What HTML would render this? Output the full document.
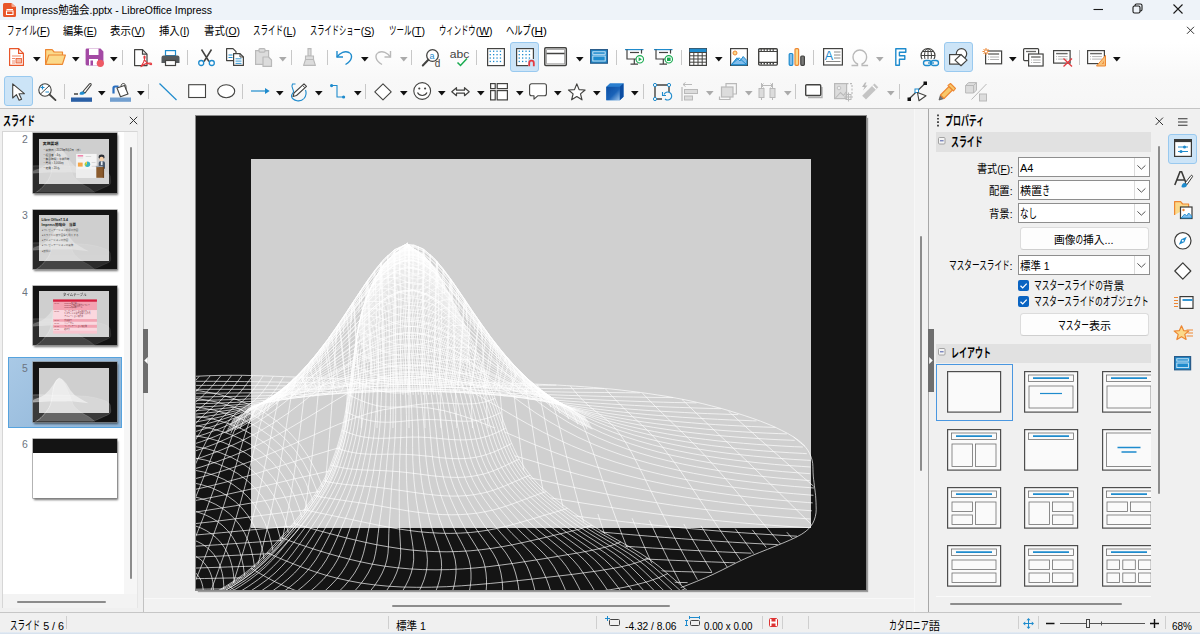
<!DOCTYPE html>
<html lang="ja"><head><meta charset="utf-8"><title>Impress勉強会.pptx - LibreOffice Impress</title>
<style>
html,body{margin:0;padding:0}html{overflow:hidden;width:1200px;height:634px}
body{width:1200px;height:634px;overflow:hidden;position:relative;background:#f0f0f0;font-family:"Liberation Sans","Noto Sans CJK JP",sans-serif;font-size:12px;color:#000}
.a{position:absolute}
.t{position:absolute;white-space:nowrap;transform-origin:0 50%;display:block}
svg{position:absolute;overflow:visible}
.sep{position:absolute;width:1px;background:#c8c8c8}
u{text-decoration:underline;text-underline-offset:1px}
.k{display:inline-block;font-size:1.09em;transform:scaleX(.645);transform-origin:0 50%}

</style></head>
<body>
<div class="a" style="left:0;top:0;width:1200px;height:20px;background:#eef3f9"></div>
<svg style="left:3px;top:3px" width="13" height="14" viewBox="0 0 13 14"><path d="M1.5 0h7L13 4v8.5A1.5 1.5 0 0 1 11.500 14h-10A1.500 1.500 0 0 1 0 12.500v-11A1.500 1.500 0 0 1 1.500 0z" fill="#e8562a"/><path d="M8.500 0 13 4H9.500a1 1 0 0 1-1-1z" fill="#f6a98f"/><path d="M3.500 6.500h6.500M3.500 8v3.500h6.500V8z" fill="none" stroke="#fff" stroke-width="1.100"/></svg>
<span id="t0" class="t" style="left:20.5px;top:2.2px;height:17px;line-height:17px;font-size:11px;color:#000;transform:scaleX(0.9507);">Impress勉強会.pptx - LibreOffice Impress</span>
<svg style="left:1090px;top:0" width="110" height="20" viewBox="0 0 110 20"><g fill="none" stroke="#1a1a1a" stroke-width="1.100"><path d="M3.500 9.500h9.500"/><rect x="43" y="6" width="7" height="7" rx="1.500"/><path d="M45 6V5.500A1.500 1.500 0 0 1 46.500 4H50.500A1.500 1.500 0 0 1 52 5.500V9.500A1.500 1.500 0 0 1 50.500 11H50"/><path d="M83.500 4.500l9 9M92.500 4.500l-9 9"/></g></svg>
<div class="a" style="left:0;top:20px;width:1200px;height:88px;background:linear-gradient(#ffffff 0,#ffffff 22px,#f8f8f8 60px,#f6f6f6 88px)"></div>
<div class="a" style="left:0;top:108px;width:1200px;height:1px;background:#c4c4c4"></div>
<span id="t1" class="t" style="left:6.5px;top:23.2px;height:17px;line-height:17px;font-size:11px;color:#000;transform:scaleX(0.9556);"><span class="k" style="margin-right:-17.03px">ファイル</span>(<u>F</u>)</span>
<span id="t2" class="t" style="left:62.5px;top:23.2px;height:17px;line-height:17px;font-size:11px;color:#000;transform:scaleX(0.9267);">編集(<u>E</u>)</span>
<span id="t3" class="t" style="left:110.0px;top:23.2px;height:17px;line-height:17px;font-size:11px;color:#000;transform:scaleX(0.9540);">表示(<u>V</u>)</span>
<span id="t4" class="t" style="left:159.0px;top:23.2px;height:17px;line-height:17px;font-size:11px;color:#000;transform:scaleX(0.9412);">挿入(<u>I</u>)</span>
<span id="t5" class="t" style="left:203.5px;top:23.2px;height:17px;line-height:17px;font-size:11px;color:#000;transform:scaleX(0.9497);">書式(<u>O</u>)</span>
<span id="t6" class="t" style="left:252.5px;top:23.2px;height:17px;line-height:17px;font-size:11px;color:#000;transform:scaleX(0.9687);"><span class="k" style="margin-right:-17.03px">スライド</span>(<u>L</u>)</span>
<span id="t7" class="t" style="left:309.5px;top:23.2px;height:17px;line-height:17px;font-size:11px;color:#000;transform:scaleX(0.9378);"><span class="k" style="margin-right:-29.80px">スライドショー</span>(<u>S</u>)</span>
<span id="t8" class="t" style="left:388.5px;top:23.2px;height:17px;line-height:17px;font-size:11px;color:#000;transform:scaleX(0.9660);"><span class="k" style="margin-right:-12.77px">ツール</span>(<u>T</u>)</span>
<span id="t9" class="t" style="left:438.5px;top:23.2px;height:17px;line-height:17px;font-size:11px;color:#000;transform:scaleX(0.9487);"><span class="k" style="margin-right:-21.28px">ウィンドウ</span>(<u>W</u>)</span>
<span id="t10" class="t" style="left:505.5px;top:23.2px;height:17px;line-height:17px;font-size:11px;color:#000;transform:scaleX(1.0654);"><span class="k" style="margin-right:-12.77px">ヘルプ</span>(<u>H</u>)</span>
<svg style="left:1186px;top:26px" width="9" height="9" viewBox="0 0 9 9"><path d="M1 .8l7 7M8 .8l-7 7" stroke="#333" stroke-width="1" fill="none"/></svg>
<div class="a" style="left:0;top:612px;width:1200px;height:1px;background:#c6c6c6"></div>
<div class="a" style="left:0;top:613px;width:1200px;height:19px;background:#f0f0f0"></div>
<div class="a" style="left:0;top:631.500px;width:1200px;height:2.500px;background:linear-gradient(#e6edf5,#d3dfec)"></div>
<div class="sep" style="left:66px;top:616px;height:13px;background:#cfcfcf"></div>
<div class="sep" style="left:387.5px;top:616px;height:13px;background:#cfcfcf"></div>
<div class="sep" style="left:596px;top:616px;height:13px;background:#cfcfcf"></div>
<div class="sep" style="left:762px;top:616px;height:13px;background:#cfcfcf"></div>
<div class="sep" style="left:782px;top:616px;height:13px;background:#cfcfcf"></div>
<div class="sep" style="left:808px;top:616px;height:13px;background:#cfcfcf"></div>
<div class="sep" style="left:1017.5px;top:616px;height:13px;background:#cfcfcf"></div>
<div class="sep" style="left:1037.5px;top:616px;height:13px;background:#cfcfcf"></div>
<div class="sep" style="left:1164.5px;top:616px;height:13px;background:#cfcfcf"></div>
<span id="t11" class="t" style="left:9.5px;top:617.5px;height:17px;line-height:17px;font-size:11px;color:#000;transform:scaleX(0.9749);"><span class="k" style="margin-right:-17.03px">スライド</span> 5 / 6</span>
<span id="t12" class="t" style="left:396px;top:617.5px;height:17px;line-height:17px;font-size:11px;color:#000;transform:scaleX(0.9619);">標準 1</span>
<span id="t13" class="t" style="left:624.5px;top:617.5px;height:17px;line-height:17px;font-size:11px;color:#000;transform:scaleX(0.9253);">-4.32 / 8.06</span>
<span id="t14" class="t" style="left:703.5px;top:617.5px;height:17px;line-height:17px;font-size:11px;color:#000;transform:scaleX(0.8909);">0.00 x 0.00</span>
<span id="t15" class="t" style="left:888.5px;top:617.5px;height:17px;line-height:17px;font-size:11px;color:#000;transform:scaleX(1.0271);"><span class="k" style="margin-right:-21.28px">カタロニア</span>語</span>
<span id="t16" class="t" style="left:1172px;top:617.5px;height:17px;line-height:17px;font-size:11px;color:#000;transform:scaleX(0.9078);">68%</span>
<svg style="left:604px;top:616px" width="17" height="11" viewBox="0 0 17 11"><path d="M3.500 0v5M1 2.500h5" stroke="#1e8bcd" stroke-width="1" fill="none"/><rect x="5.500" y="3.500" width="10" height="6" rx="1" fill="none" stroke="#444" stroke-width="1"/></svg>
<svg style="left:685px;top:616px" width="16" height="11" viewBox="0 0 16 11"><path d="M4.500 1.500h10M4.500 0v3M14.500 0v3M1.500 4v6M0 4.500h3M0 9.500h3" stroke="#1e8bcd" stroke-width="1" fill="none"/><rect x="5.500" y="4.500" width="9" height="5" rx="1" fill="none" stroke="#444" stroke-width="1"/></svg>
<svg style="left:769px;top:618px" width="9" height="9" viewBox="0 0 9 9"><path d="M1.500.5h6l1 1v6a1 1 0 0 1-1 1h-6a1 1 0 0 1-1-1v-6a1 1 0 0 1 1-1z" fill="#fff" stroke="#d33" stroke-width="1"/><path d="M2.500 1h4v2.500h-4zM2.500 5.500h4V8h-4z" fill="#d33"/></svg>
<svg style="left:1023px;top:618px" width="11" height="11" viewBox="0 0 11 11"><path d="M5.500 1v9M1 5.500h9" stroke="#1e8bcd" stroke-width="1" fill="none"/><path d="M5.500 0l2 2.200h-4zM5.500 11l2-2.200h-4zM0 5.500l2.200-2v4zM11 5.500l-2.200-2v4z" fill="#1e8bcd"/></svg>
<svg style="left:1046px;top:618px" width="114" height="12" viewBox="0 0 114 12"><path d="M0 5.500h8.500M104 5.500h9M108.500 1v9" stroke="#111" stroke-width="1.400" fill="none"/><path d="M14 5.500h85" stroke="#555" stroke-width="1"/><path d="M55.500 3.500v4" stroke="#555" stroke-width="1"/><rect x="40.500" y="1.500" width="3" height="8" fill="#f0f0f0" stroke="#444" stroke-width="1"/></svg><svg style="left:9px;top:48px" width="24" height="24" viewBox="0 0 24 24"><path d="M.6.6h9l4.800 4.800v12H.6z" fill="#fff" stroke="#e8562a" stroke-width="1.200" stroke-linejoin="round"/><path d="M9.600.6v4.800h4.800" fill="none" stroke="#e8562a" stroke-width="1.200"/><path d="M3 8h9M3 10.500h3M3 13h3M3 15h3" stroke="#f08a6a" stroke-width="1"/><rect x="7" y="10.500" width="5.500" height="4.500" fill="#f7b9a4" stroke="#e8562a" stroke-width=".8"/></svg>
<svg style="left:33.2px;top:56.8px" width="8" height="5" viewBox="0 0 8 5"><path d="M0 0h7.600L3.800 4.500z" fill="#111"/></svg>
<svg style="left:45px;top:49px" width="24" height="24" viewBox="0 0 24 24"><path d="M.6 15.400V.6h6.500l2 2.400h8.400v3" fill="#fbd98a" stroke="#ed8733" stroke-width="1.200" stroke-linejoin="round"/><path d="M.6 15.400l3.200-9.400h16.600l-3 9.400z" fill="#fbd98a" stroke="#ed8733" stroke-width="1.200" stroke-linejoin="round"/></svg>
<svg style="left:71.7px;top:56.8px" width="8" height="5" viewBox="0 0 8 5"><path d="M0 0h7.600L3.800 4.500z" fill="#111"/></svg>
<svg style="left:85px;top:48px" width="24" height="24" viewBox="0 0 24 24"><path d="M2 .6h13.500l2.900 2.900V16a1.400 1.400 0 0 1-1.400 1.400H2A1.400 1.400 0 0 1 .6 16V2A1.400 1.400 0 0 1 2 .6z" fill="#a349a4" /><rect x="4" y=".6" width="9.500" height="6.400" fill="#fff"/><rect x="4" y="11" width="9" height="6.400" fill="#fff"/><rect x="5.500" y="12.500" width="2.500" height="4.900" fill="#a349a4"/><circle cx="15.300" cy="15.300" r="3.600" fill="#ee5a64"/></svg>
<svg style="left:110.2px;top:56.8px" width="8" height="5" viewBox="0 0 8 5"><path d="M0 0h7.600L3.800 4.500z" fill="#111"/></svg>
<div class="sep" style="left:122.0px;top:50px;height:15px"></div>
<svg style="left:134px;top:49px" width="24" height="24" viewBox="0 0 24 24"><path d="M.6.6h7.900l4.500 4.500v11.500H.6z" fill="#fff" stroke="#434341" stroke-width="1.200" stroke-linejoin="round"/><path d="M8.500.6v4.500H13" fill="none" stroke="#434341" stroke-width="1.200"/><path d="M7 17.500c1.500-2 3.500-5.500 4-9 .3-1.800-1.300-1.800-1 0 .5 3.500 3.500 6 6.500 7 1.500.4 1.500-1.300-.3-1.300-3 0-7 1.500-9.200 3.300z" fill="none" stroke="#e5393f" stroke-width="1.200" stroke-linejoin="round"/></svg>
<svg style="left:161px;top:50px" width="24" height="24" viewBox="0 0 24 24"><rect x="4.500" y=".6" width="10" height="5" fill="#fff" stroke="#1e8bcd" stroke-width="1.200"/><path d="M2.500 5.500h14A2 2 0 0 1 18.500 7.500v5.500h-3.500v-3h-11v3H.5V7.500a2 2 0 0 1 2-2z" fill="#55595c"/><rect x="4.500" y="10.500" width="10" height="5" fill="#fff" stroke="#434341" stroke-width="1.200"/></svg>
<div class="sep" style="left:187.0px;top:50px;height:15px"></div>
<svg style="left:198px;top:49px" width="24" height="24" viewBox="0 0 24 24"><path d="M3.500.5l7.500 12M13.500.5L6 12.500" stroke="#434341" stroke-width="1.500" fill="none"/><circle cx="3.200" cy="14" r="2.500" fill="#fff" stroke="#1e8bcd" stroke-width="1.300"/><circle cx="13.800" cy="14" r="2.500" fill="#fff" stroke="#1e8bcd" stroke-width="1.300"/></svg>
<svg style="left:226px;top:48px" width="24" height="24" viewBox="0 0 24 24"><path d="M.6.6h6.400l3 3v9H.6z" fill="#fff" stroke="#434341" stroke-width="1.200" stroke-linejoin="round"/><path d="M2.500 7h4M2.500 9.500h4" stroke="#1e8bcd" stroke-width="1"/><path d="M7.600 5.600h6.400l3.400 3.400v8.400H7.600z" fill="#fff" stroke="#434341" stroke-width="1.200" stroke-linejoin="round"/><path d="M14 5.600v3.400h3.400" fill="none" stroke="#434341" stroke-width="1"/><path d="M9.500 10.800h6M9.500 13.100h6M9.500 15.400h6" stroke="#1e8bcd" stroke-width=".9"/></svg>
<svg style="left:255px;top:48px" width="24" height="24" viewBox="0 0 24 24"><path d="M.6 2.600h13v13.800H.6z" fill="#dcdcdc" stroke="#b9b9b9" stroke-width="1.200"/><rect x="4" y=".6" width="6" height="3.500" rx="1" fill="#dcdcdc" stroke="#b9b9b9" stroke-width="1.200"/><path d="M8 9h5.500l3 3v6.400H8z" fill="#dcdcdc" stroke="#b9b9b9" stroke-width="1.200" stroke-linejoin="round"/></svg>
<svg style="left:279.2px;top:56.8px" width="8" height="5" viewBox="0 0 8 5"><path d="M0 0h7.600L3.800 4.500z" fill="#aaa"/></svg>
<div class="sep" style="left:290.5px;top:50px;height:15px"></div>
<svg style="left:303px;top:48px" width="24" height="24" viewBox="0 0 24 24"><path d="M5 .6h3v7.400h-3z" fill="#dcdcdc" stroke="#b9b9b9" stroke-width="1.100"/><path d="M2.500 8h8v3.500h-8z" fill="#dcdcdc" stroke="#b9b9b9" stroke-width="1.100"/><path d="M2.500 11.500L.6 17.400h11.800L10.500 11.500z" fill="#dcdcdc" stroke="#b9b9b9" stroke-width="1.100" stroke-linejoin="round"/></svg>
<div class="sep" style="left:327.0px;top:50px;height:15px"></div>
<svg style="left:336px;top:50px" width="24" height="24" viewBox="0 0 24 24"><path d="M1 1v6h6" fill="none" stroke="#1e8bcd" stroke-width="1.400"/><path d="M1 7C4 2.500 9 .5 13 2.500c4 2.200 3.500 8-3.500 12" fill="none" stroke="#1e8bcd" stroke-width="1.400"/></svg>
<svg style="left:360.7px;top:56.8px" width="8" height="5" viewBox="0 0 8 5"><path d="M0 0h7.600L3.800 4.500z" fill="#111"/></svg>
<svg style="left:375px;top:50px" width="24" height="24" viewBox="0 0 24 24"><path d="M15.500 1v6h-6" fill="none" stroke="#b9b9b9" stroke-width="1.400"/><path d="M15.500 7C12.500 2.500 7.500 .5 3.500 2.500c-4 2.200-3.500 8 3.500 12" fill="none" stroke="#b9b9b9" stroke-width="1.400"/></svg>
<svg style="left:399.7px;top:56.8px" width="8" height="5" viewBox="0 0 8 5"><path d="M0 0h7.600L3.800 4.500z" fill="#aaa"/></svg>
<div class="sep" style="left:410.8px;top:50px;height:15px"></div>
<svg style="left:421.7px;top:48.7px" width="24" height="24" viewBox="0 0 24 24"><circle cx="10.500" cy="6.500" r="5.800" fill="#fff" stroke="#434341" stroke-width="1.300"/><path d="M6.300 10.800L.8 16.500" stroke="#434341" stroke-width="2" stroke-linecap="round"/><text x="7.600" y="9.500" font-size="9" font-family="Liberation Sans,sans-serif" fill="#1e8bcd">a</text><text x="12.800" y="17.500" font-size="10" font-family="Liberation Sans,sans-serif" fill="#434341">d</text></svg>
<svg style="left:449.7px;top:49px" width="24" height="24" viewBox="0 0 24 24"><text x="-.3" y="8.500" font-size="10.500" font-family="Liberation Sans,sans-serif" fill="#434341" textLength="19.600" lengthAdjust="spacingAndGlyphs">abc</text><path d="M7.500 13.500l3 3 6.500-7" fill="none" stroke="#18ab50" stroke-width="1.500"/></svg>
<div class="sep" style="left:475.8px;top:50px;height:15px"></div>
<svg style="left:487px;top:47.8px" width="24" height="24" viewBox="0 0 24 24"><rect x=".6" y=".6" width="16.800" height="17" fill="#fff" stroke="#434341" stroke-width="1.200"/><rect x="2.6" y="2.6" width="1.300" height="1.300" fill="#1e8bcd"/><rect x="2.6" y="6.0" width="1.300" height="1.300" fill="#1e8bcd"/><rect x="2.6" y="9.4" width="1.300" height="1.300" fill="#1e8bcd"/><rect x="2.6" y="12.8" width="1.300" height="1.300" fill="#1e8bcd"/><rect x="6.0" y="2.6" width="1.300" height="1.300" fill="#1e8bcd"/><rect x="6.0" y="6.0" width="1.300" height="1.300" fill="#1e8bcd"/><rect x="6.0" y="9.4" width="1.300" height="1.300" fill="#1e8bcd"/><rect x="6.0" y="12.8" width="1.300" height="1.300" fill="#1e8bcd"/><rect x="9.4" y="2.6" width="1.300" height="1.300" fill="#1e8bcd"/><rect x="9.4" y="6.0" width="1.300" height="1.300" fill="#1e8bcd"/><rect x="9.4" y="9.4" width="1.300" height="1.300" fill="#1e8bcd"/><rect x="9.4" y="12.8" width="1.300" height="1.300" fill="#1e8bcd"/><rect x="12.8" y="2.6" width="1.300" height="1.300" fill="#1e8bcd"/><rect x="12.8" y="6.0" width="1.300" height="1.300" fill="#1e8bcd"/><rect x="12.8" y="9.4" width="1.300" height="1.300" fill="#1e8bcd"/><rect x="12.8" y="12.8" width="1.300" height="1.300" fill="#1e8bcd"/></svg>
<div class="a" style="left:510px;top:42px;width:27px;height:28px;background:#cce4f7;border:1px solid #99c9ef;border-radius:3px"></div>
<svg style="left:515.5px;top:47.8px" width="24" height="24" viewBox="0 0 24 24"><rect x=".6" y=".6" width="16.800" height="17" fill="#fff" stroke="#434341" stroke-width="1.200"/><rect x="2.6" y="2.6" width="1.300" height="1.300" fill="#1e8bcd"/><rect x="2.6" y="6.0" width="1.300" height="1.300" fill="#1e8bcd"/><rect x="2.6" y="9.4" width="1.300" height="1.300" fill="#1e8bcd"/><rect x="2.6" y="12.8" width="1.300" height="1.300" fill="#1e8bcd"/><rect x="6.0" y="2.6" width="1.300" height="1.300" fill="#1e8bcd"/><rect x="6.0" y="6.0" width="1.300" height="1.300" fill="#1e8bcd"/><rect x="6.0" y="9.4" width="1.300" height="1.300" fill="#1e8bcd"/><rect x="6.0" y="12.8" width="1.300" height="1.300" fill="#1e8bcd"/><rect x="9.4" y="2.6" width="1.300" height="1.300" fill="#1e8bcd"/><rect x="9.4" y="6.0" width="1.300" height="1.300" fill="#1e8bcd"/><rect x="9.4" y="9.4" width="1.300" height="1.300" fill="#1e8bcd"/><rect x="9.4" y="12.8" width="1.300" height="1.300" fill="#1e8bcd"/><rect x="12.8" y="2.6" width="1.300" height="1.300" fill="#1e8bcd"/><rect x="12.8" y="6.0" width="1.300" height="1.300" fill="#1e8bcd"/><rect x="12.8" y="9.4" width="1.300" height="1.300" fill="#1e8bcd"/><rect x="12.8" y="12.8" width="1.300" height="1.300" fill="#1e8bcd"/><rect x="12" y="11" width="8" height="8" fill="#cce4f7"/><path d="M13.200 18.300v-3.300a2.300 2.300 0 0 1 4.600 0v3.300" fill="none" stroke="#e5393f" stroke-width="1.800"/></svg>
<svg style="left:543.7px;top:47.2px" width="24" height="24" viewBox="0 0 24 24"><rect x=".8" y=".8" width="21.500" height="17.800" rx="1" fill="#fff" stroke="#434341" stroke-width="1.500"/><rect x="2.600" y="2.600" width="18" height="14.200" fill="none" stroke="#999" stroke-width=".8"/><path d="M2.500 6.500h18" stroke="#434341" stroke-width="1.500"/></svg>
<svg style="left:575.7px;top:56.8px" width="8" height="5" viewBox="0 0 8 5"><path d="M0 0h7.600L3.800 4.500z" fill="#111"/></svg>
<svg style="left:590px;top:49px" width="24" height="24" viewBox="0 0 24 24"><rect x=".6" y=".6" width="16.800" height="13.600" fill="#1e8bcd" stroke="#2a5c8a" stroke-width="1.200"/><rect x="2.800" y="2.800" width="12.400" height="2.500" fill="none" stroke="#d8ecfa" stroke-width=".9"/><rect x="2.800" y="7" width="12.400" height="5" fill="none" stroke="#d8ecfa" stroke-width=".9"/></svg>
<div class="sep" style="left:615.8px;top:50px;height:15px"></div>
<svg style="left:625px;top:49px" width="24" height="24" viewBox="0 0 24 24"><path d="M0 .6h18.500" stroke="#1e8bcd" stroke-width="1.200"/><path d="M2 .6v9.400h9" fill="none" stroke="#434341" stroke-width="1.200"/><path d="M16.500 .6v4" stroke="#434341" stroke-width="1.200"/><path d="M5 3.500h9" stroke="#434341" stroke-width="1.200"/><path d="M9.300 10v5M5.500 15.200h7.500" stroke="#434341" stroke-width="1.200"/><circle cx="14.800" cy="10.300" r="3.700" fill="#fff" stroke="#18ab50" stroke-width="1.100"/><path d="M13.600 8.300v4l3.300-2z" fill="#18ab50"/></svg>
<svg style="left:654px;top:49px" width="24" height="24" viewBox="0 0 24 24"><path d="M0 .6h18.500" stroke="#1e8bcd" stroke-width="1.200"/><path d="M2 .6v9.400h9" fill="none" stroke="#434341" stroke-width="1.200"/><path d="M16.500 .6v4" stroke="#434341" stroke-width="1.200"/><path d="M5 3.500h9" stroke="#434341" stroke-width="1.200"/><path d="M9.300 10v5M5.500 15.200h7.500" stroke="#434341" stroke-width="1.200"/><circle cx="14.800" cy="10.300" r="3.700" fill="#fff" stroke="#18ab50" stroke-width="1.100"/><rect x="13" y="8.600" width="3.600" height="3.400" fill="#18ab50"/></svg>
<div class="sep" style="left:680.8px;top:50px;height:15px"></div>
<svg style="left:689px;top:48px" width="24" height="24" viewBox="0 0 24 24"><rect x=".6" y=".6" width="16.800" height="16.800" fill="#fff" stroke="#434341" stroke-width="1.200"/><rect x=".6" y=".6" width="16.800" height="3.400" fill="#1e8bcd"/><path d="M.6 4.500h16.800M.6 7.800h16.800M.6 11h16.800M.6 14.200h16.800M4.800 4v13.400M9 4v13.400M13.200 4v13.400" stroke="#434341" stroke-width="1"/></svg>
<svg style="left:714.7px;top:56.8px" width="8" height="5" viewBox="0 0 8 5"><path d="M0 0h7.600L3.800 4.500z" fill="#111"/></svg>
<svg style="left:730px;top:48px" width="24" height="24" viewBox="0 0 24 24"><rect x=".6" y=".6" width="16.800" height="16.800" fill="#fff" stroke="#434341" stroke-width="1.200"/><circle cx="5" cy="5" r="2" fill="#fbd98a" stroke="#ed8733" stroke-width="1"/><path d="M1.200 16.800l5.800-7 3 3.200 3.200-4.500 3.600 4v4.300z" fill="#83beec" stroke="#1e8bcd" stroke-width="1"/><path d="M1.200 16.800L9 9.800l7.800 7z" fill="none" stroke="#1e8bcd" stroke-width="1"/></svg>
<svg style="left:758px;top:48.3px" width="24" height="24" viewBox="0 0 24 24"><rect x=".7" y=".7" width="18.600" height="16.400" rx="1" fill="#fff" stroke="#434341" stroke-width="1.400"/><path d="M1 3.500h18M1 14.300h18" stroke="#434341" stroke-width="1.200"/><path d="M2.500 2h15M2.500 15.800h15" stroke="#434341" stroke-width="1.600" stroke-dasharray="1.500 1.500"/></svg>
<svg style="left:787.5px;top:48px" width="24" height="24" viewBox="0 0 24 24"><rect x="1.200" y="5.500" width="3.600" height="11.800" rx="1" fill="#83beec" stroke="#1e8bcd" stroke-width="1.200"/><rect x="7" y=".6" width="3.600" height="16.700" rx="1" fill="#fbd98a" stroke="#ed8733" stroke-width="1.200"/><rect x="12.800" y="8" width="3.600" height="9.300" rx="1" fill="#7a7a78" stroke="#434341" stroke-width="1.200"/></svg>
<div class="sep" style="left:813.2px;top:50px;height:15px"></div>
<svg style="left:823px;top:48.3px" width="24" height="24" viewBox="0 0 24 24"><rect x=".6" y=".6" width="18.800" height="16.400" fill="#fff" stroke="#434341" stroke-width="1.200"/><text x="1.800" y="12.300" font-size="12.500" font-family="Liberation Sans,sans-serif" fill="#1e8bcd">A</text><path d="M11 4h6.500M11 7h6.500M11 10h6.500M3 13.500h14.500" stroke="#8a8a88" stroke-width="1"/></svg>
<svg style="left:851px;top:48.7px" width="24" height="24" viewBox="0 0 24 24"><path d="M.5 16.500h6v-1.500C3.500 13.500 2 11 2 8 2 4 5 1 8.800 1s6.800 3 6.800 7c0 3-1.500 5.500-4.500 7v1.500h6" fill="none" stroke="#b9b9b9" stroke-width="1.400"/></svg>
<svg style="left:876.2px;top:56.8px" width="8" height="5" viewBox="0 0 8 5"><path d="M0 0h7.600L3.800 4.500z" fill="#aaa"/></svg>
<svg style="left:894.7px;top:48px" width="24" height="24" viewBox="0 0 24 24"><path d="M.8.800h10v3.400H4.400v3.600h5.400v3.400H4.400v6H.8z" fill="#fff" stroke="#1e8bcd" stroke-width="1.400" stroke-linejoin="round"/></svg>
<svg style="left:920px;top:48.3px" width="24" height="24" viewBox="0 0 24 24"><circle cx="8" cy="7.500" r="7" fill="#fff" stroke="#434341" stroke-width="1.200"/><path d="M1 7.500h14M8 .5v14M2.500 3.500h11M2.500 11.500h11" stroke="#434341" stroke-width="1"/><ellipse cx="8" cy="7.500" rx="3.500" ry="7" fill="none" stroke="#434341" stroke-width="1"/><rect x="2" y="11" width="18" height="8" fill="#f7f7f7"/><rect x="3.500" y="12.500" width="7.500" height="5" rx="2.500" fill="none" stroke="#1e8bcd" stroke-width="1.300"/><rect x="11" y="12.500" width="7.500" height="5" rx="2.500" fill="none" stroke="#1e8bcd" stroke-width="1.300"/><path d="M8 15h6" stroke="#1e8bcd" stroke-width="1.300"/></svg>
<div class="a" style="left:943.5px;top:42px;width:27.0px;height:28px;background:#cce4f7;border:1px solid #99c9ef;border-radius:3px"></div>
<svg style="left:949px;top:48px" width="24" height="24" viewBox="0 0 24 24"><circle cx="12.500" cy="5.800" r="5.200" fill="#fff" stroke="#434341" stroke-width="1.200"/><rect x=".6" y="6.600" width="10.500" height="9.500" fill="#fff" stroke="#434341" stroke-width="1.200"/><path d="M12 6.500l6 5.600-6 5.600-6-5.600z" fill="#fff" stroke="#434341" stroke-width="1.200" stroke-linejoin="round"/></svg>
<svg style="left:981.7px;top:46.5px" width="24" height="24" viewBox="0 0 24 24"><rect x="3.6" y="4" width="16" height="12.8" fill="#fff" stroke="#434341" stroke-width="1.200"/><path d="M6.1 7h11" stroke="#6a6a68" stroke-width="1.400"/><path d="M8.1 10h9M8.1 12.5h9" stroke="#b0b0b0" stroke-width="1"/><path d="M6.1 10h1M6.1 12.5h1" stroke="#b0b0b0" stroke-width="1"/><g stroke="#ed8733" stroke-width="1"><path d="M4 1v7M.5 4.500h7M1.500 2l5 5M6.500 2l-5 5"/></g><circle cx="4" cy="4.500" r="1.600" fill="#fff" stroke="#ed8733" stroke-width=".8"/></svg>
<svg style="left:1008.9px;top:56.8px" width="8" height="5" viewBox="0 0 8 5"><path d="M0 0h7.600L3.800 4.500z" fill="#111"/></svg>
<svg style="left:1023px;top:48px" width="24" height="24" viewBox="0 0 24 24"><rect x=".6" y=".6" width="15" height="12" rx="1" fill="#fff" stroke="#434341" stroke-width="1.200"/><path d="M3 3.500h10" stroke="#6a6a68" stroke-width="1.300"/><rect x="5.6" y="6" width="14.5" height="12" fill="#fff" stroke="#434341" stroke-width="1.200"/><path d="M8.1 9h9.5" stroke="#6a6a68" stroke-width="1.400"/><path d="M10.1 12h7.5M10.1 14.5h7.5" stroke="#b0b0b0" stroke-width="1"/><path d="M8.1 12h1M8.1 14.5h1" stroke="#b0b0b0" stroke-width="1"/></svg>
<svg style="left:1053px;top:50px" width="24" height="24" viewBox="0 0 24 24"><rect x="0.6" y="0.6" width="16.5" height="12.5" fill="#fff" stroke="#434341" stroke-width="1.200"/><path d="M3.1 3.6h11.5" stroke="#6a6a68" stroke-width="1.400"/><path d="M5.1 6.6h9.5M5.1 9.1h9.5" stroke="#b0b0b0" stroke-width="1"/><path d="M3.1 6.6h1M3.1 9.1h1" stroke="#b0b0b0" stroke-width="1"/><path d="M10.500 8.500l8.500 8M19 8.500l-8.500 8" stroke="#e5393f" stroke-width="1.300"/></svg>
<div class="sep" style="left:1078.5px;top:50px;height:15px"></div>
<svg style="left:1087px;top:49.8px" width="24" height="24" viewBox="0 0 24 24"><rect x="0.6" y="0.6" width="16.8" height="13" fill="#fff" stroke="#434341" stroke-width="1.200"/><path d="M3.1 3.6h11.8" stroke="#6a6a68" stroke-width="1.400"/><path d="M5.1 6.6h9.8M5.1 9.1h9.8" stroke="#b0b0b0" stroke-width="1"/><path d="M3.1 6.6h1M3.1 9.1h1" stroke="#b0b0b0" stroke-width="1"/><path d="M9.500 16l9-10.500V16z" fill="#f8c27a" stroke="#ed8733" stroke-width="1" stroke-linejoin="round"/><path d="M15 13.500h1.500v-2" fill="none" stroke="#ed8733" stroke-width=".8"/></svg>
<svg style="left:1112.9px;top:56.8px" width="8" height="5" viewBox="0 0 8 5"><path d="M0 0h7.600L3.800 4.500z" fill="#111"/></svg>
<div class="a" style="left:3.5px;top:76px;width:27.0px;height:28px;background:#cce4f7;border:1px solid #99c9ef;border-radius:3px"></div>
<svg style="left:11.7px;top:82.5px" width="24" height="24" viewBox="0 0 24 24"><path d="M.7.8v14.200l3.800-3.300 2.600 5.600 2.500-1.100-2.600-5.500h5.400z" fill="#fff" stroke="#434341" stroke-width="1.100" stroke-linejoin="round"/></svg>
<svg style="left:38px;top:82.5px" width="24" height="24" viewBox="0 0 24 24"><circle cx="7" cy="7" r="6.200" fill="#fff" stroke="#434341" stroke-width="1.100"/><path d="M11.500 11.500l6 5.600" stroke="#434341" stroke-width="1.800" stroke-linecap="round"/><path d="M2.500 11l9-8.500" stroke="#434341" stroke-width="1"/><path d="M2.500 4.500h4M4.500 2.500v4M7.500 9h3.500" stroke="#1e8bcd" stroke-width="1.200"/></svg>
<div class="sep" style="left:64.2px;top:84px;height:15px"></div>
<svg style="left:71px;top:83px" width="24" height="24" viewBox="0 0 24 24"><rect x="0" y="14.500" width="21" height="4.300" fill="#2a5fa5"/><path d="M3 11h4" stroke="#434341" stroke-width="1.500"/><path d="M12 8.500L18.500 .8a1 1 0 0 1 1.500 1.300L14 10z" fill="#fff" stroke="#434341" stroke-width="1.100" stroke-linejoin="round"/><path d="M12 8.500c-2-.5-3.500 1-3.500 2.800 2.500 1.200 5 .2 5.500-1.300z" fill="#1e8bcd"/></svg>
<svg style="left:98.2px;top:90.8px" width="8" height="5" viewBox="0 0 8 5"><path d="M0 0h7.600L3.800 4.500z" fill="#111"/></svg>
<svg style="left:109.7px;top:83px" width="24" height="24" viewBox="0 0 24 24"><rect x="0" y="14.500" width="21" height="4.300" fill="#729fcf"/><path d="M3.500 10.500V5a1.500 1.500 0 0 1 1.500-1.500h3.500" fill="none" stroke="#2a6fc0" stroke-width="2.200"/><path d="M7 5l7.500-2.500 3.500 8.500-7.500 2.700z" fill="#fff" stroke="#434341" stroke-width="1.100" stroke-linejoin="round"/><path d="M11 3.500c0-4 4.500-4 5 0v3" fill="none" stroke="#434341" stroke-width="1"/></svg>
<svg style="left:136.7px;top:90.8px" width="8" height="5" viewBox="0 0 8 5"><path d="M0 0h7.600L3.800 4.500z" fill="#111"/></svg>
<div class="sep" style="left:147.8px;top:84px;height:15px"></div>
<svg style="left:159px;top:82.5px" width="24" height="24" viewBox="0 0 24 24"><path d="M.5.5l17 16.500" stroke="#1e8bcd" stroke-width="1.200"/></svg>
<svg style="left:188px;top:84px" width="24" height="24" viewBox="0 0 24 24"><rect x=".7" y=".7" width="16.800" height="12.800" fill="#fff" stroke="#434341" stroke-width="1.100"/></svg>
<svg style="left:216.7px;top:84px" width="24" height="24" viewBox="0 0 24 24"><ellipse cx="9.200" cy="7.200" rx="8.500" ry="6.500" fill="#fff" stroke="#434341" stroke-width="1.100"/></svg>
<div class="sep" style="left:242.0px;top:84px;height:15px"></div>
<svg style="left:251px;top:87px" width="24" height="24" viewBox="0 0 24 24"><path d="M0 4h15" stroke="#1e8bcd" stroke-width="1.200"/><path d="M14 1l4.700 3-4.700 3z" fill="#1e8bcd"/></svg>
<svg style="left:276.2px;top:90.8px" width="8" height="5" viewBox="0 0 8 5"><path d="M0 0h7.600L3.800 4.500z" fill="#111"/></svg>
<svg style="left:290px;top:82.5px" width="24" height="24" viewBox="0 0 24 24"><path d="M5.500 1H2.500c-2 3 1 5 1 7.500 0 2-2.500 2.500-2 5 1.500 4.500 9 6 12.500 2 2.500-3 2.500-6 1.500-8.500" fill="none" stroke="#1e8bcd" stroke-width="1.100"/><path d="M3 13.500l1-3.500L14 .8l2.500 2.500L6.500 12.500z" fill="#fff" stroke="#434341" stroke-width="1.100" stroke-linejoin="round"/><path d="M12.500 2.300l2.500 2.500" stroke="#434341" stroke-width="1"/></svg>
<svg style="left:315.2px;top:90.8px" width="8" height="5" viewBox="0 0 8 5"><path d="M0 0h7.600L3.800 4.500z" fill="#111"/></svg>
<svg style="left:329.7px;top:83.7px" width="24" height="24" viewBox="0 0 24 24"><path d="M1.500 1.500h5.500v11.500h6.500" fill="none" stroke="#1e8bcd" stroke-width="1.100"/><circle cx="1.600" cy="1.600" r="1.600" fill="#1e8bcd"/><circle cx="13.600" cy="13" r="1.600" fill="#1e8bcd"/></svg>
<svg style="left:353.7px;top:90.8px" width="8" height="5" viewBox="0 0 8 5"><path d="M0 0h7.600L3.800 4.500z" fill="#111"/></svg>
<div class="sep" style="left:365.0px;top:84px;height:15px"></div>
<svg style="left:374px;top:82.5px" width="24" height="24" viewBox="0 0 24 24"><path d="M9 .8l8.200 8L9 16.800.8 8.800z" fill="#fff" stroke="#434341" stroke-width="1.100" stroke-linejoin="round"/></svg>
<svg style="left:399.7px;top:90.8px" width="8" height="5" viewBox="0 0 8 5"><path d="M0 0h7.600L3.800 4.500z" fill="#111"/></svg>
<svg style="left:412.5px;top:82px" width="24" height="24" viewBox="0 0 24 24"><circle cx="9.200" cy="9" r="8.400" fill="#fff" stroke="#434341" stroke-width="1.100"/><circle cx="6.300" cy="6.500" r="1.100" fill="#434341"/><circle cx="12.100" cy="6.500" r="1.100" fill="#434341"/><path d="M4.500 10.500c2 4 7.500 4 9.500 0" fill="none" stroke="#434341" stroke-width="1.200"/></svg>
<svg style="left:437.9px;top:90.8px" width="8" height="5" viewBox="0 0 8 5"><path d="M0 0h7.600L3.800 4.500z" fill="#111"/></svg>
<svg style="left:451px;top:86.7px" width="24" height="24" viewBox="0 0 24 24"><path d="M.8 4.700L5.500.7v2.500h8V.7l4.700 4-4.700 4V6.200h-8v2.500z" fill="#fff" stroke="#434341" stroke-width="1.200" stroke-linejoin="round"/></svg>
<svg style="left:476.7px;top:90.8px" width="8" height="5" viewBox="0 0 8 5"><path d="M0 0h7.600L3.800 4.500z" fill="#111"/></svg>
<svg style="left:490px;top:82.5px" width="24" height="24" viewBox="0 0 24 24"><g fill="#fff" stroke="#434341" stroke-width="1.200"><rect x=".6" y=".6" width="4.600" height="5"/><rect x="7.200" y=".6" width="10.200" height="5"/><rect x=".6" y="7.600" width="4.600" height="9.300"/><rect x="7.200" y="7.600" width="10.200" height="9.300"/></g></svg>
<svg style="left:515.7px;top:90.8px" width="8" height="5" viewBox="0 0 8 5"><path d="M0 0h7.600L3.800 4.500z" fill="#111"/></svg>
<svg style="left:528.7px;top:83px" width="24" height="24" viewBox="0 0 24 24"><path d="M2.600.7h12.800a2 2 0 0 1 2 2v8a2 2 0 0 1-2 2H9l-4 3.500V12.700H2.600a2 2 0 0 1-2-2v-8a2 2 0 0 1 2-2z" fill="#fff" stroke="#434341" stroke-width="1.100" stroke-linejoin="round"/></svg>
<svg style="left:554.2px;top:90.8px" width="8" height="5" viewBox="0 0 8 5"><path d="M0 0h7.600L3.800 4.500z" fill="#111"/></svg>
<svg style="left:567.5px;top:82.5px" width="24" height="24" viewBox="0 0 24 24"><path d="M8.800.9l2.300 5.700 6 .4-4.600 3.900 1.500 5.900-5.200-3.300-5.200 3.300 1.500-5.900L.5 7l6-.4z" fill="#fff" stroke="#434341" stroke-width="1.200" stroke-linejoin="round"/></svg>
<svg style="left:592.7px;top:90.8px" width="8" height="5" viewBox="0 0 8 5"><path d="M0 0h7.600L3.800 4.500z" fill="#111"/></svg>
<svg style="left:606px;top:82.5px" width="24" height="24" viewBox="0 0 24 24"><defs><linearGradient id="cg" x1="0" y1="0" x2="1" y2="1"><stop offset="0" stop-color="#0c4da2"/><stop offset=".55" stop-color="#1a63b8"/><stop offset="1" stop-color="#9cc4ec"/></linearGradient></defs><path d="M.3 3.800L4 .3h13.500v13.400l-3.700 3.500H.3z" fill="#2a7fd0"/><rect x=".3" y="3.800" width="13.500" height="13.400" fill="url(#cg)"/><path d="M13.800 3.800L17.500.3v13.400l-3.700 3.500z" fill="#0c4da2"/></svg>
<svg style="left:631.2px;top:90.8px" width="8" height="5" viewBox="0 0 8 5"><path d="M0 0h7.600L3.800 4.500z" fill="#111"/></svg>
<div class="sep" style="left:643.2px;top:84px;height:15px"></div>
<svg style="left:653px;top:82.5px" width="24" height="24" viewBox="0 0 24 24"><path d="M2 2h14v7M2 2v14h7" fill="none" stroke="#434341" stroke-width="1.400"/><g fill="#fff" stroke="#1e8bcd" stroke-width="1"><circle cx="2" cy="2" r="1.600"/><circle cx="16" cy="2" r="1.600"/><circle cx="2" cy="16" r="1.600"/></g><path d="M11 11.500a4 4 0 1 1 1 4.500" fill="none" stroke="#1e8bcd" stroke-width="1.100"/><path d="M9.500 9v3.500h3.500" fill="none" stroke="#1e8bcd" stroke-width="1.100"/></svg>
<svg style="left:681px;top:81.7px" width="24" height="24" viewBox="0 0 24 24"><path d="M1 5v14" stroke="#b9b9b9" stroke-width="1.200"/><path d="M2 2.500h9M4.500 .5l-2.500 2 2.500 2" fill="none" stroke="#b9b9b9" stroke-width="1"/><rect x="3.500" y="7.500" width="13" height="4" fill="#dcdcdc" stroke="#b9b9b9" stroke-width="1"/><rect x="3.500" y="14" width="8" height="4" fill="#dcdcdc" stroke="#b9b9b9" stroke-width="1"/></svg>
<svg style="left:706.2px;top:90.8px" width="8" height="5" viewBox="0 0 8 5"><path d="M0 0h7.600L3.800 4.500z" fill="#aaa"/></svg>
<svg style="left:719px;top:82.5px" width="24" height="24" viewBox="0 0 24 24"><path d="M7 4V.6h10.400v10.400H14" fill="none" stroke="#b9b9b9" stroke-width="1.200"/><path d="M4 14v3h10.500v-3" fill="none" stroke="#b9b9b9" stroke-width="1.200" transform="translate(-3.500,-.5)"/><rect x="2.500" y="4" width="11.500" height="10" fill="#dcdcdc" stroke="#b9b9b9" stroke-width="1.200"/></svg>
<svg style="left:744.7px;top:90.8px" width="8" height="5" viewBox="0 0 8 5"><path d="M0 0h7.600L3.800 4.500z" fill="#aaa"/></svg>
<svg style="left:758px;top:82.5px" width="24" height="24" viewBox="0 0 24 24"><path d="M3.500 2.500h11M5.500 .5l-2 2 2 2M12.500 .5l2 2-2 2M3.500 0v17M14.500 0v17" fill="none" stroke="#b9b9b9" stroke-width="1"/><rect x="1" y="5.500" width="5" height="9" fill="#dcdcdc" stroke="#b9b9b9" stroke-width="1"/><rect x="12" y="5.500" width="5" height="9" fill="#dcdcdc" stroke="#b9b9b9" stroke-width="1"/></svg>
<svg style="left:783.7px;top:90.8px" width="8" height="5" viewBox="0 0 8 5"><path d="M0 0h7.600L3.800 4.500z" fill="#aaa"/></svg>
<div class="sep" style="left:794.8px;top:84px;height:15px"></div>
<svg style="left:805px;top:83.7px" width="24" height="24" viewBox="0 0 24 24"><path d="M17 3v10.500H3" fill="none" stroke="#b0b0b0" stroke-width="1.400"/><rect x=".7" y=".7" width="15" height="10.800" rx="1" fill="#fff" stroke="#434341" stroke-width="1.400"/></svg>
<svg style="left:834px;top:82.5px" width="24" height="24" viewBox="0 0 24 24"><rect x=".6" y=".6" width="12" height="15" fill="#dcdcdc" stroke="#b9b9b9" stroke-width="1.200"/><circle cx="5" cy="5" r="1.800" fill="#eee" stroke="#b9b9b9" stroke-width=".8"/><path d="M1.500 15l5-5.500 3 3 3-4" fill="none" stroke="#b9b9b9" stroke-width="1.100"/><path d="M12.500 .6h5.500v11" fill="none" stroke="#b9b9b9" stroke-width="1.100" stroke-dasharray="2 1.500"/><path d="M14.500 9.500v9M10 14h9" stroke="#b9b9b9" stroke-width="1.100"/><rect x="12" y="11.500" width="5" height="5" fill="none" stroke="#b9b9b9" stroke-width="1"/></svg>
<svg style="left:861px;top:82px" width="24" height="24" viewBox="0 0 24 24"><path d="M13.500 1.500l3.800 3.800L5 17.600 1.200 13.800z" fill="#c4c4c4"/><path d="M11.500 3.500l3.800 3.800" stroke="#fff" stroke-width="1.200"/><path d="M4 .5L1 5h2.500L2 8.500 6.500 3.500H4L5.500.5z" fill="#b9b9b9"/></svg>
<svg style="left:887.2px;top:90.8px" width="8" height="5" viewBox="0 0 8 5"><path d="M0 0h7.600L3.800 4.500z" fill="#aaa"/></svg>
<div class="sep" style="left:898.5px;top:84px;height:15px"></div>
<svg style="left:907px;top:80.8px" width="24" height="24" viewBox="0 0 24 24"><path d="M2 18L18.500 2" stroke="#434341" stroke-width="1.200"/><rect x="16.500" y=".5" width="3.500" height="3.500" fill="#111"/><rect x=".5" y="16.500" width="3.500" height="3.500" fill="#111"/><rect x="8" y="8" width="3.500" height="3.500" fill="#fff" stroke="#1e8bcd" stroke-width="1"/><path d="M10.500 11.500l1.500 8.300 7-5z" fill="#fff" stroke="#434341" stroke-width="1.100" stroke-linejoin="round"/></svg>
<svg style="left:938px;top:82.5px" width="24" height="24" viewBox="0 0 24 24"><path d="M1 17l1.500-5 3.500 3.500z" fill="#777" stroke="#555" stroke-width=".8"/><path d="M2.500 12L11 3.500l3.500 3.500L6 15.500z" fill="#f8c86a" stroke="#ed8733" stroke-width="1.100" stroke-linejoin="round"/><path d="M10 2.500L12.500.5l5 5-2 2.500z" fill="#f8c86a" stroke="#ed8733" stroke-width="1.100" stroke-linejoin="round"/></svg>
<svg style="left:965px;top:81.7px" width="24" height="24" viewBox="0 0 24 24"><path d="M.6 3.500L3.500.6h8v7.500l-2.900 2.900H.6z" fill="#dcdcdc" stroke="#b9b9b9" stroke-width="1"/><path d="M.6 3.500h8v7.500M8.600 3.500L11.500.6" fill="none" stroke="#b9b9b9" stroke-width="1"/><path d="M21.500 2L6.500 17.500" stroke="#b9b9b9" stroke-width="1"/><rect x="14.500" y="12" width="7" height="7" fill="#dcdcdc" stroke="#b9b9b9" stroke-width="1"/></svg><div class="a" style="left:143px;top:109px;width:1px;height:503px;background:#c2c2c2"></div>
<span id="t17" class="t" style="left:2.5px;top:113.0px;height:17.5px;line-height:17.5px;font-size:11.5px;font-weight:bold;color:#000;transform:scaleX(0.9918);"><span class="k" style="margin-right:-17.80px">スライド</span></span>
<svg style="left:129px;top:116px" width="9" height="9" viewBox="0 0 9 9"><path d="M.8.800l7.400 7.400M8.200.8L.8 8.200" stroke="#333" stroke-width="1" fill="none"/></svg>
<div class="a" style="left:2px;top:131px;width:136px;height:477px;border:1px solid #d6d6d6;border-right-color:#e6e6e6;border-bottom:none;box-sizing:border-box;background:#f3f3f3"></div>
<div class="a" style="left:3px;top:132px;width:121px;height:462px;background:#fff"></div>
<div class="a" style="left:124px;top:132px;width:13px;height:462px;background:#f6f6f6"></div>
<div class="a" style="left:129.5px;top:147px;width:2px;height:432px;background:#8c8c8c;border-radius:1px"></div>
<div class="a" style="left:17px;top:600.5px;width:88.500px;height:2px;background:#8c8c8c;border-radius:1px"></div>
<div class="a" style="left:8px;top:356.500px;width:112px;height:69px;border:1px solid #56a3de;background:linear-gradient(135deg,#a9c9e6,#8db3d6)"></div>
<div class="a" style="left:32.500px;top:133.2px;width:84px;height:59.500px;background:#141414;box-shadow:0 0 0 .6px #888,1px 1.500px 2px rgba(0,0,0,.55)"><div class="a" style="left:6.800px;top:5.500px;width:69.600px;height:45.500px;background:#cfcfcf"></div><div class="a" style="left:0;top:0;width:670px;height:474px;transform-origin:0 0;transform:scale(0.12537);overflow:hidden"><svg style="left:0;top:0;overflow:hidden" width="670" height="474" viewBox="0 0 670 474"><g opacity="0.6"><path d="M-318,347L-341,367L-358,389L-367,411L-368,434L-359,457L-331,478L-279,494L-208,504L-130,512L-50,515L26,518L97,520L167,519L233,516L297,512L357,504L412,493L460,480L501,465L534,450L564,436L593,424L614,411L620,397L620,383L618,370L617,357L616,344L609,331L592,317L565,305L532,295L498,286L462,279L425,274L389,271L353,269L317,267L283,267L248,266L215,265L181,264L146,263L109,261L68,260L24,259L-21,262L-64,267L-108,274L-151,283L-191,293L-228,304L-264,318L-296,334Z" fill="#fff" fill-opacity=".17"/><path d="M-318,347L-341,367L-358,389L-367,411L-368,434L-359,457L-331,478L-279,494L-208,504L-130,512L-50,515L26,518L97,520L167,519L233,516L297,512L357,504L412,493L460,480L501,465L534,450L564,436L593,424L614,411L620,397L620,383L618,370L617,357L616,344L609,331L592,317L565,305L532,295L498,286L462,279L425,274L389,271L353,269L317,267L283,267L248,266L215,265L181,264L146,263L109,261L68,260L24,259L-21,262L-64,267L-108,274L-151,283L-191,293L-228,304L-264,318L-296,334Z" fill="none" stroke="#fff" stroke-opacity=".35" stroke-width="3"/><path d="M212,127L197,134L184,146L168,171L130,224L92,262L65,277L34,289L0,302L0,324L134,314L304,314L444,329L410,311L376,292L334,265L300,228L266,171L242,146L228,134Z" fill="#fff" fill-opacity=".5"/><path d="M212,127L196,140L185,153L177,167L171,180L167,193L164,206L161,219L159,233L157,246L155,259L153,272L151,285L149,299L146,312L143,325L139,338L134,351L127,365L119,378L110,391L100,404L89,417L77,431L64,444L49,457L30,470L9,483L504,490L494,477L479,464L463,450L444,437L421,424L398,411L379,398L361,384L345,371L333,358L324,345L317,332L312,318L307,305L303,292L298,279L293,266L287,252L282,239L277,226L271,213L264,200L258,186L251,173L244,160L235,147L223,134Z" fill="#fff" fill-opacity=".22"/><path d="M212,127L196,140L185,153L177,167L171,180L167,193L164,206L161,219L159,233L157,246L155,259L153,272L151,285L149,299L146,312L143,325L139,338L134,351L127,365L119,378L110,391L100,404L89,417L77,431L64,444L49,457L30,470L9,483" fill="none" stroke="#fff" stroke-opacity=".7" stroke-width="5"/><path d="M504,490L494,477L479,464L463,450L444,437L421,424L398,411L379,398L361,384L345,371L333,358L324,345L317,332L312,318L307,305L303,292L298,279L293,266L287,252L282,239L277,226L271,213L264,200L258,186L251,173L244,160L235,147L223,134" fill="none" stroke="#fff" stroke-opacity=".35" stroke-width="4"/><path d="M0,268H330M0,290H300M0,315H270" fill="none" stroke="#fff" stroke-opacity=".3" stroke-width="3"/></g></svg><div class="a" style="left:78px;top:66px;font-size:31px;line-height:31px;white-space:nowrap;font-weight:bold;color:#222;">実施要項</div><div class="a" style="left:78px;top:129.0px;font-size:22px;line-height:22px;white-space:nowrap;color:#333;">・実施日：2023年8月2日（水）</div><div class="a" style="left:78px;top:163.5px;font-size:22px;line-height:22px;white-space:nowrap;color:#333;">・担当者：4名</div><div class="a" style="left:78px;top:198.0px;font-size:22px;line-height:22px;white-space:nowrap;color:#333;">・集合時間：午前9時</div><div class="a" style="left:78px;top:232.5px;font-size:22px;line-height:22px;white-space:nowrap;color:#333;">・費用：3,000円</div><div class="a" style="left:78px;top:267.0px;font-size:22px;line-height:22px;white-space:nowrap;color:#333;">・定員：20名</div><div class="a" style="left:344px;top:167px;width:164px;height:190px;background:#f4f4f4"></div><div class="a" style="left:356px;top:176px;width:44px;height:12px;background:#f07fa8"></div><div class="a" style="left:356px;top:196px;width:44px;height:6px;background:#d9d9d9"></div><div class="a" style="left:420px;top:184px;width:44px;height:6px;background:#d0d0d0"></div><div class="a" style="left:358px;top:236px;width:38px;height:32px;background:#f5a64a"></div><div class="a" style="left:412px;top:228px;width:44px;height:44px;border-radius:50%;background:conic-gradient(#3bb3c4 0 65%,#9bd34a 65% 85%,#f2d04a 85%)"></div><div class="a" style="left:468px;top:232px;width:30px;height:6px;background:#cfcfcf"></div><div class="a" style="left:468px;top:262px;width:30px;height:6px;background:#cfcfcf"></div><div class="a" style="left:344px;top:290px;width:164px;height:67px;background:#ededed"></div><div class="a" style="left:524px;top:172px;width:46px;height:34px;border-radius:50% 50% 30% 30%;background:#2c2f36"></div><div class="a" style="left:530px;top:190px;width:34px;height:36px;border-radius:45%;background:#f6cfa8"></div><div class="a" style="left:524px;top:226px;width:50px;height:60px;border-radius:14px 14px 0 0;background:#46566a"></div><div class="a" style="left:541px;top:226px;width:14px;height:30px;background:#e8eef4"></div><div class="a" style="left:500px;top:262px;width:56px;height:10px;background:#9aa4b0"></div><div class="a" style="left:505px;top:272px;width:60px;height:85px;background:#8a5a2c"></div><div class="a" style="left:557px;top:272px;width:10px;height:85px;background:#6e4520"></div></div></div>
<span id="t18" class="t" style="left:22px;top:131.9px;height:16px;line-height:16px;font-size:10px;color:#6c7480;transform:scaleX(1.0427);">2</span>
<div class="a" style="left:32.500px;top:209.5px;width:84px;height:59.500px;background:#141414;box-shadow:0 0 0 .6px #888,1px 1.500px 2px rgba(0,0,0,.55)"><div class="a" style="left:6.800px;top:5.500px;width:69.600px;height:45.500px;background:#cfcfcf"></div><div class="a" style="left:0;top:0;width:670px;height:474px;transform-origin:0 0;transform:scale(0.12537);overflow:hidden"><svg style="left:0;top:0;overflow:hidden" width="670" height="474" viewBox="0 0 670 474"><g opacity="0.6"><path d="M-318,347L-341,367L-358,389L-367,411L-368,434L-359,457L-331,478L-279,494L-208,504L-130,512L-50,515L26,518L97,520L167,519L233,516L297,512L357,504L412,493L460,480L501,465L534,450L564,436L593,424L614,411L620,397L620,383L618,370L617,357L616,344L609,331L592,317L565,305L532,295L498,286L462,279L425,274L389,271L353,269L317,267L283,267L248,266L215,265L181,264L146,263L109,261L68,260L24,259L-21,262L-64,267L-108,274L-151,283L-191,293L-228,304L-264,318L-296,334Z" fill="#fff" fill-opacity=".17"/><path d="M-318,347L-341,367L-358,389L-367,411L-368,434L-359,457L-331,478L-279,494L-208,504L-130,512L-50,515L26,518L97,520L167,519L233,516L297,512L357,504L412,493L460,480L501,465L534,450L564,436L593,424L614,411L620,397L620,383L618,370L617,357L616,344L609,331L592,317L565,305L532,295L498,286L462,279L425,274L389,271L353,269L317,267L283,267L248,266L215,265L181,264L146,263L109,261L68,260L24,259L-21,262L-64,267L-108,274L-151,283L-191,293L-228,304L-264,318L-296,334Z" fill="none" stroke="#fff" stroke-opacity=".35" stroke-width="3"/><path d="M212,127L197,134L184,146L168,171L130,224L92,262L65,277L34,289L0,302L0,324L134,314L304,314L444,329L410,311L376,292L334,265L300,228L266,171L242,146L228,134Z" fill="#fff" fill-opacity=".5"/><path d="M212,127L196,140L185,153L177,167L171,180L167,193L164,206L161,219L159,233L157,246L155,259L153,272L151,285L149,299L146,312L143,325L139,338L134,351L127,365L119,378L110,391L100,404L89,417L77,431L64,444L49,457L30,470L9,483L504,490L494,477L479,464L463,450L444,437L421,424L398,411L379,398L361,384L345,371L333,358L324,345L317,332L312,318L307,305L303,292L298,279L293,266L287,252L282,239L277,226L271,213L264,200L258,186L251,173L244,160L235,147L223,134Z" fill="#fff" fill-opacity=".22"/><path d="M212,127L196,140L185,153L177,167L171,180L167,193L164,206L161,219L159,233L157,246L155,259L153,272L151,285L149,299L146,312L143,325L139,338L134,351L127,365L119,378L110,391L100,404L89,417L77,431L64,444L49,457L30,470L9,483" fill="none" stroke="#fff" stroke-opacity=".7" stroke-width="5"/><path d="M504,490L494,477L479,464L463,450L444,437L421,424L398,411L379,398L361,384L345,371L333,358L324,345L317,332L312,318L307,305L303,292L298,279L293,266L287,252L282,239L277,226L271,213L264,200L258,186L251,173L244,160L235,147L223,134" fill="none" stroke="#fff" stroke-opacity=".35" stroke-width="4"/><path d="M0,268H330M0,290H300M0,315H270" fill="none" stroke="#fff" stroke-opacity=".3" stroke-width="3"/></g></svg><div class="a" style="left:68px;top:66px;font-size:27px;line-height:27px;white-space:nowrap;font-weight:bold;color:#1a1a1a;">Libre Office7.5.4</div><div class="a" style="left:68px;top:103px;font-size:28px;line-height:28px;white-space:nowrap;font-weight:bold;color:#1a1a1a;">Impress勉強会　当幕</div><div class="a" style="left:70px;top:148px;font-size:20px;line-height:20px;white-space:nowrap;color:#555;">●プレゼンテーション前提の作図</div><div class="a" style="left:70px;top:190px;font-size:20px;line-height:20px;white-space:nowrap;color:#555;">●スライドに表や画像を挿入する</div><div class="a" style="left:70px;top:232px;font-size:20px;line-height:20px;white-space:nowrap;color:#555;">●アニメーションの作図</div><div class="a" style="left:70px;top:274px;font-size:20px;line-height:20px;white-space:nowrap;color:#555;">●プレゼンテーションの実施</div><div class="a" style="left:70px;top:316px;font-size:20px;line-height:20px;white-space:nowrap;color:#555;">●最後に</div></div></div>
<span id="t19" class="t" style="left:22px;top:208.2px;height:16px;line-height:16px;font-size:10px;color:#6c7480;transform:scaleX(1.0427);">3</span>
<div class="a" style="left:32.500px;top:285.8px;width:84px;height:59.500px;background:#141414;box-shadow:0 0 0 .6px #888,1px 1.500px 2px rgba(0,0,0,.55)"><div class="a" style="left:6.800px;top:5.500px;width:69.600px;height:45.500px;background:#cfcfcf"></div><div class="a" style="left:0;top:0;width:670px;height:474px;transform-origin:0 0;transform:scale(0.12537);overflow:hidden"><svg style="left:0;top:0;overflow:hidden" width="670" height="474" viewBox="0 0 670 474"><g opacity="0.6"><path d="M-318,347L-341,367L-358,389L-367,411L-368,434L-359,457L-331,478L-279,494L-208,504L-130,512L-50,515L26,518L97,520L167,519L233,516L297,512L357,504L412,493L460,480L501,465L534,450L564,436L593,424L614,411L620,397L620,383L618,370L617,357L616,344L609,331L592,317L565,305L532,295L498,286L462,279L425,274L389,271L353,269L317,267L283,267L248,266L215,265L181,264L146,263L109,261L68,260L24,259L-21,262L-64,267L-108,274L-151,283L-191,293L-228,304L-264,318L-296,334Z" fill="#fff" fill-opacity=".17"/><path d="M-318,347L-341,367L-358,389L-367,411L-368,434L-359,457L-331,478L-279,494L-208,504L-130,512L-50,515L26,518L97,520L167,519L233,516L297,512L357,504L412,493L460,480L501,465L534,450L564,436L593,424L614,411L620,397L620,383L618,370L617,357L616,344L609,331L592,317L565,305L532,295L498,286L462,279L425,274L389,271L353,269L317,267L283,267L248,266L215,265L181,264L146,263L109,261L68,260L24,259L-21,262L-64,267L-108,274L-151,283L-191,293L-228,304L-264,318L-296,334Z" fill="none" stroke="#fff" stroke-opacity=".35" stroke-width="3"/><path d="M212,127L197,134L184,146L168,171L130,224L92,262L65,277L34,289L0,302L0,324L134,314L304,314L444,329L410,311L376,292L334,265L300,228L266,171L242,146L228,134Z" fill="#fff" fill-opacity=".5"/><path d="M212,127L196,140L185,153L177,167L171,180L167,193L164,206L161,219L159,233L157,246L155,259L153,272L151,285L149,299L146,312L143,325L139,338L134,351L127,365L119,378L110,391L100,404L89,417L77,431L64,444L49,457L30,470L9,483L504,490L494,477L479,464L463,450L444,437L421,424L398,411L379,398L361,384L345,371L333,358L324,345L317,332L312,318L307,305L303,292L298,279L293,266L287,252L282,239L277,226L271,213L264,200L258,186L251,173L244,160L235,147L223,134Z" fill="#fff" fill-opacity=".22"/><path d="M212,127L196,140L185,153L177,167L171,180L167,193L164,206L161,219L159,233L157,246L155,259L153,272L151,285L149,299L146,312L143,325L139,338L134,351L127,365L119,378L110,391L100,404L89,417L77,431L64,444L49,457L30,470L9,483" fill="none" stroke="#fff" stroke-opacity=".7" stroke-width="5"/><path d="M504,490L494,477L479,464L463,450L444,437L421,424L398,411L379,398L361,384L345,371L333,358L324,345L317,332L312,318L307,305L303,292L298,279L293,266L287,252L282,239L277,226L271,213L264,200L258,186L251,173L244,160L235,147L223,134" fill="none" stroke="#fff" stroke-opacity=".35" stroke-width="4"/><path d="M0,268H330M0,290H300M0,315H270" fill="none" stroke="#fff" stroke-opacity=".3" stroke-width="3"/></g></svg><div class="a" style="left:240px;top:58px;font-size:27px;line-height:27px;white-space:nowrap;color:#222;">タイムテーブル</div><div class="a" style="left:160px;top:107px;width:350px;height:19px;background:#d81e3f"></div><div class="a" style="left:160px;top:126px;width:350px;height:66px;background:#f4a3b2"></div><div class="a" style="left:160px;top:192px;width:350px;height:72px;background:#fbd7de"></div><div class="a" style="left:160px;top:264px;width:350px;height:22px;background:#f4a3b2"></div><div class="a" style="left:160px;top:286px;width:350px;height:24px;background:#fbd7de"></div><div class="a" style="left:160px;top:310px;width:350px;height:24px;background:#f4a3b2"></div><div class="a" style="left:160px;top:334px;width:350px;height:24px;background:#fbd7de"></div><div class="a" style="left:160px;top:358px;width:350px;height:23px;background:#f9c5cf"></div><div class="a" style="left:170px;top:128px;font-size:15px;line-height:15px;white-space:nowrap;color:#7a3340;">10:00</div><div class="a" style="left:250px;top:128px;font-size:15px;line-height:15px;white-space:nowrap;color:#7a3340;">Impressの説明</div><div class="a" style="left:250px;top:146px;font-size:15px;line-height:15px;white-space:nowrap;color:#7a3340;">Impressでの画面操作について</div><div class="a" style="left:250px;top:164px;font-size:15px;line-height:15px;white-space:nowrap;color:#7a3340;">Impressの基本ツール</div><div class="a" style="left:170px;top:194px;font-size:15px;line-height:15px;white-space:nowrap;color:#7a3340;">13:00</div><div class="a" style="left:250px;top:194px;font-size:15px;line-height:15px;white-space:nowrap;color:#7a3340;">プレゼンテーション用スライド</div><div class="a" style="left:250px;top:212px;font-size:15px;line-height:15px;white-space:nowrap;color:#7a3340;">をスライドに表や画像を入れる</div><div class="a" style="left:250px;top:232px;font-size:15px;line-height:15px;white-space:nowrap;color:#7a3340;">アニメーションの作成</div><div class="a" style="left:170px;top:266px;font-size:15px;line-height:15px;white-space:nowrap;color:#7a3340;">15:00</div><div class="a" style="left:250px;top:266px;font-size:15px;line-height:15px;white-space:nowrap;color:#7a3340;">発表練習</div><div class="a" style="left:170px;top:288px;font-size:15px;line-height:15px;white-space:nowrap;color:#7a3340;">16:00</div><div class="a" style="left:250px;top:288px;font-size:15px;line-height:15px;white-space:nowrap;color:#7a3340;">リハーサル</div><div class="a" style="left:170px;top:312px;font-size:15px;line-height:15px;white-space:nowrap;color:#7a3340;">16:30</div><div class="a" style="left:250px;top:312px;font-size:15px;line-height:15px;white-space:nowrap;color:#7a3340;">プレゼンテーションの実施</div><div class="a" style="left:170px;top:336px;font-size:15px;line-height:15px;white-space:nowrap;color:#7a3340;">17:30</div><div class="a" style="left:250px;top:336px;font-size:15px;line-height:15px;white-space:nowrap;color:#7a3340;">終わり</div></div></div>
<span id="t20" class="t" style="left:22px;top:284.5px;height:16px;line-height:16px;font-size:10px;color:#6c7480;transform:scaleX(1.0427);">4</span>
<div class="a" style="left:32.500px;top:362.3px;width:84px;height:59.500px;background:#141414;box-shadow:0 0 0 .6px #888,1px 1.500px 2px rgba(0,0,0,.55)"><div class="a" style="left:6.800px;top:5.500px;width:69.600px;height:45.500px;background:#cfcfcf"></div><div class="a" style="left:0;top:0;width:670px;height:474px;transform-origin:0 0;transform:scale(0.12537);overflow:hidden"><svg style="left:0;top:0;overflow:hidden" width="670" height="474" viewBox="0 0 670 474"><g opacity="1.0"><path d="M-318,347L-341,367L-358,389L-367,411L-368,434L-359,457L-331,478L-279,494L-208,504L-130,512L-50,515L26,518L97,520L167,519L233,516L297,512L357,504L412,493L460,480L501,465L534,450L564,436L593,424L614,411L620,397L620,383L618,370L617,357L616,344L609,331L592,317L565,305L532,295L498,286L462,279L425,274L389,271L353,269L317,267L283,267L248,266L215,265L181,264L146,263L109,261L68,260L24,259L-21,262L-64,267L-108,274L-151,283L-191,293L-228,304L-264,318L-296,334Z" fill="#fff" fill-opacity=".17"/><path d="M-318,347L-341,367L-358,389L-367,411L-368,434L-359,457L-331,478L-279,494L-208,504L-130,512L-50,515L26,518L97,520L167,519L233,516L297,512L357,504L412,493L460,480L501,465L534,450L564,436L593,424L614,411L620,397L620,383L618,370L617,357L616,344L609,331L592,317L565,305L532,295L498,286L462,279L425,274L389,271L353,269L317,267L283,267L248,266L215,265L181,264L146,263L109,261L68,260L24,259L-21,262L-64,267L-108,274L-151,283L-191,293L-228,304L-264,318L-296,334Z" fill="none" stroke="#fff" stroke-opacity=".35" stroke-width="3"/><path d="M212,127L197,134L184,146L168,171L130,224L92,262L65,277L34,289L0,302L0,324L134,314L304,314L444,329L410,311L376,292L334,265L300,228L266,171L242,146L228,134Z" fill="#fff" fill-opacity=".5"/><path d="M212,127L196,140L185,153L177,167L171,180L167,193L164,206L161,219L159,233L157,246L155,259L153,272L151,285L149,299L146,312L143,325L139,338L134,351L127,365L119,378L110,391L100,404L89,417L77,431L64,444L49,457L30,470L9,483L504,490L494,477L479,464L463,450L444,437L421,424L398,411L379,398L361,384L345,371L333,358L324,345L317,332L312,318L307,305L303,292L298,279L293,266L287,252L282,239L277,226L271,213L264,200L258,186L251,173L244,160L235,147L223,134Z" fill="#fff" fill-opacity=".22"/><path d="M212,127L196,140L185,153L177,167L171,180L167,193L164,206L161,219L159,233L157,246L155,259L153,272L151,285L149,299L146,312L143,325L139,338L134,351L127,365L119,378L110,391L100,404L89,417L77,431L64,444L49,457L30,470L9,483" fill="none" stroke="#fff" stroke-opacity=".7" stroke-width="5"/><path d="M504,490L494,477L479,464L463,450L444,437L421,424L398,411L379,398L361,384L345,371L333,358L324,345L317,332L312,318L307,305L303,292L298,279L293,266L287,252L282,239L277,226L271,213L264,200L258,186L251,173L244,160L235,147L223,134" fill="none" stroke="#fff" stroke-opacity=".35" stroke-width="4"/><path d="M0,268H330M0,290H300M0,315H270" fill="none" stroke="#fff" stroke-opacity=".3" stroke-width="3"/></g></svg></div></div>
<span id="t21" class="t" style="left:22px;top:361.0px;height:16px;line-height:16px;font-size:10px;color:#6c7480;transform:scaleX(1.0427);">5</span>
<div class="a" style="left:32.500px;top:438.6px;width:84px;height:59.500px;background:#141414;box-shadow:0 0 0 .6px #888,1px 1.500px 2px rgba(0,0,0,.55)"><div class="a" style="left:0;top:14.500px;width:84px;height:45px;background:#fff"></div></div>
<span id="t22" class="t" style="left:22px;top:437.3px;height:16px;line-height:16px;font-size:10px;color:#6c7480;transform:scaleX(1.0427);">6</span>
<div class="a" style="left:144px;top:109px;width:770px;height:489px;background:#efefef"></div>
<div class="a" style="left:144px;top:598px;width:770px;height:14px;background:#f2f2f2;border-top:1px solid #f8f8f8;box-sizing:border-box"></div>
<div class="a" style="left:914px;top:109px;width:14px;height:503px;background:#f2f2f2;border-left:1px solid #f7f7f7;box-sizing:border-box"></div>
<div class="a" style="left:392px;top:604.500px;width:277.500px;height:2px;background:#8c8c8c;border-radius:1px"></div>
<div class="a" style="left:919.600px;top:235.500px;width:2px;height:235.500px;background:#8c8c8c;border-radius:1px"></div>
<div class="a" style="left:196px;top:116px;width:670px;height:474px;background:#141414;box-shadow:0 0 0 1px #8a8a8a,2px 2px 1px #9c9c9c"></div>
<div class="a" style="left:251px;top:158.500px;width:560px;height:369.500px;background:#d0d0d0"></div>
<div class="a" style="left:143px;top:329px;width:5px;height:63.500px;background:#6e6e6e"></div>
<svg style="left:143.500px;top:356.500px" width="4" height="7" viewBox="0 0 4 7"><path d="M3.800 0v7L.3 3.500z" fill="#fff"/></svg>
<div class="a" style="left:928px;top:109px;width:1px;height:503px;background:#a8a8a8"></div>
<div class="a" style="left:928px;top:329px;width:5.500px;height:63px;background:#6e6e6e"></div>
<svg style="left:929px;top:357px" width="4" height="7" viewBox="0 0 4 7"><path d="M.2 0v7l3.500-3.500z" fill="#fff"/></svg>
<svg style="left:936.500px;top:114px" width="2" height="13" viewBox="0 0 2 13"><path d="M1 .5v12" stroke="#222" stroke-width="1.600" stroke-dasharray="1.700 1.700"/></svg>
<span id="t23" class="t" style="left:944.5px;top:113.2px;height:17.5px;line-height:17.5px;font-size:11.5px;font-weight:bold;color:#000;transform:scaleX(0.9854);"><span class="k" style="margin-right:-22.25px">プロパティ</span></span>
<svg style="left:1154.500px;top:116.500px" width="9" height="9" viewBox="0 0 9 9"><path d="M.6.600l7.400 7.400M8 .6L.6 8" stroke="#333" stroke-width="1" fill="none"/></svg>
<svg style="left:1178px;top:118px" width="10" height="8" viewBox="0 0 10 8"><path d="M0 .8h9.500M0 4h9.500M0 7.200h9.500" stroke="#333" stroke-width="1.100"/></svg>
<div class="a" style="left:935.500px;top:132px;width:215.500px;height:19.700px;background:#e1e1e1"></div>
<svg style="left:937.500px;top:136.8px" width="8" height="8" viewBox="0 0 8 8"><rect x=".5" y=".5" width="6.500" height="6.500" rx="1" fill="#f4f4f4" stroke="#9a9a9a" stroke-width=".9"/><path d="M2 3.800h3.600" stroke="#4a5aa8" stroke-width="1"/></svg>
<span id="t24" class="t" style="left:950.5px;top:133.8px;height:17.5px;line-height:17.5px;font-size:11.5px;font-weight:bold;color:#000;transform:scaleX(0.9763);"><span class="k" style="margin-right:-17.80px">スライド</span></span>
<div class="a" style="left:935.500px;top:343.5px;width:215.500px;height:19.700px;background:#e1e1e1"></div>
<svg style="left:937.500px;top:348.3px" width="8" height="8" viewBox="0 0 8 8"><rect x=".5" y=".5" width="6.500" height="6.500" rx="1" fill="#f4f4f4" stroke="#9a9a9a" stroke-width=".9"/><path d="M2 3.800h3.600" stroke="#4a5aa8" stroke-width="1"/></svg>
<span id="t25" class="t" style="left:950.5px;top:345.2px;height:17.5px;line-height:17.5px;font-size:11.5px;font-weight:bold;color:#000;transform:scaleX(0.9919);"><span class="k" style="margin-right:-22.25px">レイアウト</span></span>
<span id="t26" class="t" style="left:976.5px;top:161.0px;height:17px;line-height:17px;font-size:11px;color:#000;transform:scaleX(0.9198);">書式(<u>F</u>):</span>
<span id="t27" class="t" style="left:989px;top:183.2px;height:17px;line-height:17px;font-size:11px;color:#000;transform:scaleX(0.9377);">配置:</span>
<span id="t28" class="t" style="left:989px;top:206.2px;height:17px;line-height:17px;font-size:11px;color:#000;transform:scaleX(0.9377);">背景:</span>
<span id="t29" class="t" style="left:949px;top:257.7px;height:17px;line-height:17px;font-size:11px;color:#000;transform:scaleX(0.9876);"><span class="k" style="margin-right:-34.05px">マスタースライド</span>:</span>
<div class="a" style="left:1018px;top:157px;width:132px;height:20px;box-sizing:border-box;border:1px solid #8e8e8e;background:#fff"></div>
<div class="a" style="left:1134px;top:158px;width:15px;height:18px;box-sizing:border-box;border-left:1px solid #dadada;background:#fdfdfd"></div>
<svg style="left:1137px;top:165px" width="9" height="5" viewBox="0 0 9 5"><path d="M.4.400l4 3.800 4-3.800" fill="none" stroke="#555" stroke-width="1"/></svg>
<span id="t30" class="t" style="left:1020px;top:160.0px;height:17px;line-height:17px;font-size:11px;color:#000;transform:scaleX(1.0023);">A4</span>
<div class="a" style="left:1018px;top:180px;width:132px;height:20px;box-sizing:border-box;border:1px solid #8e8e8e;background:#fff"></div>
<div class="a" style="left:1134px;top:181px;width:15px;height:18px;box-sizing:border-box;border-left:1px solid #dadada;background:#fdfdfd"></div>
<svg style="left:1137px;top:188px" width="9" height="5" viewBox="0 0 9 5"><path d="M.4.400l4 3.800 4-3.800" fill="none" stroke="#555" stroke-width="1"/></svg>
<span id="t31" class="t" style="left:1020px;top:183.0px;height:17px;line-height:17px;font-size:11px;color:#000;transform:scaleX(1.0089);">横置<span class="k" style="margin-right:-4.26px">き</span></span>
<div class="a" style="left:1018px;top:203px;width:132px;height:20px;box-sizing:border-box;border:1px solid #8e8e8e;background:#fff"></div>
<div class="a" style="left:1134px;top:204px;width:15px;height:18px;box-sizing:border-box;border-left:1px solid #dadada;background:#fdfdfd"></div>
<svg style="left:1137px;top:211px" width="9" height="5" viewBox="0 0 9 5"><path d="M.4.400l4 3.800 4-3.800" fill="none" stroke="#555" stroke-width="1"/></svg>
<span id="t32" class="t" style="left:1020px;top:206.0px;height:17px;line-height:17px;font-size:11px;color:#000;transform:scaleX(1.0990);"><span class="k" style="margin-right:-8.51px">なし</span></span>
<div class="a" style="left:1018px;top:254.8px;width:132px;height:20px;box-sizing:border-box;border:1px solid #8e8e8e;background:#fff"></div>
<div class="a" style="left:1134px;top:255.8px;width:15px;height:18px;box-sizing:border-box;border-left:1px solid #dadada;background:#fdfdfd"></div>
<svg style="left:1137px;top:262.8px" width="9" height="5" viewBox="0 0 9 5"><path d="M.4.400l4 3.800 4-3.800" fill="none" stroke="#555" stroke-width="1"/></svg>
<span id="t33" class="t" style="left:1020px;top:257.8px;height:17px;line-height:17px;font-size:11px;color:#000;transform:scaleX(0.9459);">標準 1</span>
<div class="a" style="left:1019.500px;top:227.3px;width:129px;height:23px;box-sizing:border-box;border:1px solid #dcdcdc;border-bottom-color:#cfcfcf;border-radius:3.500px;background:#fdfdfd"></div>
<span id="t34" class="t" style="left:1054px;top:232.2px;height:17px;line-height:17px;font-size:11px;color:#000;transform:scaleX(0.9769);">画像<span class="k" style="margin-right:-4.26px">の</span>挿入...</span>
<div class="a" style="left:1019.500px;top:312.8px;width:129px;height:23px;box-sizing:border-box;border:1px solid #dcdcdc;border-bottom-color:#cfcfcf;border-radius:3.500px;background:#fdfdfd"></div>
<span id="t35" class="t" style="left:1057.5px;top:317.7px;height:17px;line-height:17px;font-size:11px;color:#000;transform:scaleX(1.0015);"><span class="k" style="margin-right:-17.03px">マスター</span>表示</span>
<svg style="left:1018px;top:279.5px" width="11" height="11" viewBox="0 0 11 11"><rect x="0" y="0" width="11" height="11" rx="2" fill="#0a64c2"/><path d="M2.500 5.700l2.200 2.200 4-4.300" fill="none" stroke="#fff" stroke-width="1.300"/></svg>
<span id="t36" class="t" style="left:1033.5px;top:277.9px;height:17px;line-height:17px;font-size:11px;color:#000;transform:scaleX(0.9948);"><span class="k" style="margin-right:-38.31px">マスタースライドの</span>背景</span>
<svg style="left:1018px;top:296px" width="11" height="11" viewBox="0 0 11 11"><rect x="0" y="0" width="11" height="11" rx="2" fill="#0a64c2"/><path d="M2.500 5.700l2.200 2.200 4-4.300" fill="none" stroke="#fff" stroke-width="1.300"/></svg>
<span id="t37" class="t" style="left:1033.5px;top:294.4px;height:17px;line-height:17px;font-size:11px;color:#000;transform:scaleX(0.9928);"><span class="k" style="margin-right:-63.85px">マスタースライドのオブジェクト</span></span>
<div class="a" style="left:1157.600px;top:146px;width:2px;height:347.500px;background:#8c8c8c;border-radius:1px"></div>
<div class="a" style="left:950px;top:603px;width:172px;height:2px;background:#8c8c8c;border-radius:1px"></div>
<div class="a" style="left:935.500px;top:363.500px;width:77px;height:57.500px;box-sizing:border-box;border:1px solid #4a97e0;background:#f0f0f0"></div>
<div class="a" style="left:935.500px;top:363.500px;width:215.500px;height:233px;overflow:hidden">
<svg style="left:11.3px;top:7.9px" width="54.500" height="42" viewBox="0 0 54.500 42"><rect x=".6" y=".6" width="53" height="40.500" fill="#fafafa" stroke="#4e4e4e" stroke-width="1.200"/></svg>
<svg style="left:88.7px;top:7.9px" width="54.500" height="42" viewBox="0 0 54.500 42"><rect x=".6" y=".6" width="53" height="40.500" fill="#fafafa" stroke="#4e4e4e" stroke-width="1.200"/><rect x="4.500" y="4" width="45" height="6.500" fill="#fafafa" stroke="#707070" stroke-width=".8"/><path d="M9 7.200h36" stroke="#1e8bcd" stroke-width="1.800"/><rect x="5" y="15" width="44" height="22" fill="#fafafa" stroke="#707070" stroke-width=".8"/><path d="M16 22.500h22" stroke="#1e8bcd" stroke-width="1.200"/></svg>
<svg style="left:166.1px;top:7.9px" width="54.500" height="42" viewBox="0 0 54.500 42"><rect x=".6" y=".6" width="53" height="40.500" fill="#fafafa" stroke="#4e4e4e" stroke-width="1.200"/><rect x="4.500" y="4" width="45" height="6.500" fill="#fafafa" stroke="#707070" stroke-width=".8"/><path d="M9 7.200h36" stroke="#1e8bcd" stroke-width="1.800"/><rect x="5" y="15" width="44" height="22" fill="#fafafa" stroke="#707070" stroke-width=".8"/></svg>
<svg style="left:11.3px;top:65.9px" width="54.500" height="42" viewBox="0 0 54.500 42"><rect x=".6" y=".6" width="53" height="40.500" fill="#fafafa" stroke="#4e4e4e" stroke-width="1.200"/><rect x="4.500" y="4" width="45" height="6.500" fill="#fafafa" stroke="#707070" stroke-width=".8"/><path d="M9 7.200h36" stroke="#1e8bcd" stroke-width="1.800"/><rect x="5" y="15" width="20.5" height="22.5" fill="#fafafa" stroke="#707070" stroke-width=".8"/><rect x="28.5" y="15" width="20.5" height="22.5" fill="#fafafa" stroke="#707070" stroke-width=".8"/></svg>
<svg style="left:88.7px;top:65.9px" width="54.500" height="42" viewBox="0 0 54.500 42"><rect x=".6" y=".6" width="53" height="40.500" fill="#fafafa" stroke="#4e4e4e" stroke-width="1.200"/><rect x="4.500" y="4" width="45" height="6.500" fill="#fafafa" stroke="#707070" stroke-width=".8"/><path d="M9 7.200h36" stroke="#1e8bcd" stroke-width="1.800"/></svg>
<svg style="left:166.1px;top:65.9px" width="54.500" height="42" viewBox="0 0 54.500 42"><rect x=".6" y=".6" width="53" height="40.500" fill="#fafafa" stroke="#4e4e4e" stroke-width="1.200"/><rect x="4.5" y="4" width="45" height="33.5" fill="#fafafa" stroke="#707070" stroke-width=".8"/><path d="M15.500 18.500h23M19.500 23h15" stroke="#1e8bcd" stroke-width="1.300"/></svg>
<svg style="left:11.3px;top:123.9px" width="54.500" height="42" viewBox="0 0 54.500 42"><rect x=".6" y=".6" width="53" height="40.500" fill="#fafafa" stroke="#4e4e4e" stroke-width="1.200"/><rect x="4.500" y="4" width="45" height="6.500" fill="#fafafa" stroke="#707070" stroke-width=".8"/><path d="M9 7.200h36" stroke="#1e8bcd" stroke-width="1.800"/><rect x="5" y="15" width="20.5" height="9.5" fill="#fafafa" stroke="#707070" stroke-width=".8"/><rect x="5" y="28" width="20.5" height="9.5" fill="#fafafa" stroke="#707070" stroke-width=".8"/><rect x="28.5" y="15" width="20.5" height="22.5" fill="#fafafa" stroke="#707070" stroke-width=".8"/></svg>
<svg style="left:88.7px;top:123.9px" width="54.500" height="42" viewBox="0 0 54.500 42"><rect x=".6" y=".6" width="53" height="40.500" fill="#fafafa" stroke="#4e4e4e" stroke-width="1.200"/><rect x="4.500" y="4" width="45" height="6.500" fill="#fafafa" stroke="#707070" stroke-width=".8"/><path d="M9 7.200h36" stroke="#1e8bcd" stroke-width="1.800"/><rect x="5" y="15" width="20.5" height="22.5" fill="#fafafa" stroke="#707070" stroke-width=".8"/><rect x="28.5" y="15" width="20.5" height="9.5" fill="#fafafa" stroke="#707070" stroke-width=".8"/><rect x="28.5" y="28" width="20.5" height="9.5" fill="#fafafa" stroke="#707070" stroke-width=".8"/></svg>
<svg style="left:166.1px;top:123.9px" width="54.500" height="42" viewBox="0 0 54.500 42"><rect x=".6" y=".6" width="53" height="40.500" fill="#fafafa" stroke="#4e4e4e" stroke-width="1.200"/><rect x="4.500" y="4" width="45" height="6.500" fill="#fafafa" stroke="#707070" stroke-width=".8"/><path d="M9 7.200h36" stroke="#1e8bcd" stroke-width="1.800"/><rect x="5" y="15" width="20.5" height="9.5" fill="#fafafa" stroke="#707070" stroke-width=".8"/><rect x="28.5" y="15" width="20.5" height="9.5" fill="#fafafa" stroke="#707070" stroke-width=".8"/><rect x="5" y="28" width="44" height="9.5" fill="#fafafa" stroke="#707070" stroke-width=".8"/></svg>
<svg style="left:11.3px;top:181.7px" width="54.500" height="42" viewBox="0 0 54.500 42"><rect x=".6" y=".6" width="53" height="40.500" fill="#fafafa" stroke="#4e4e4e" stroke-width="1.200"/><rect x="4.500" y="4" width="45" height="6.500" fill="#fafafa" stroke="#707070" stroke-width=".8"/><path d="M9 7.200h36" stroke="#1e8bcd" stroke-width="1.800"/><rect x="5" y="15" width="44" height="9.5" fill="#fafafa" stroke="#707070" stroke-width=".8"/><rect x="5" y="28" width="44" height="9.5" fill="#fafafa" stroke="#707070" stroke-width=".8"/></svg>
<svg style="left:88.7px;top:181.7px" width="54.500" height="42" viewBox="0 0 54.500 42"><rect x=".6" y=".6" width="53" height="40.500" fill="#fafafa" stroke="#4e4e4e" stroke-width="1.200"/><rect x="4.500" y="4" width="45" height="6.500" fill="#fafafa" stroke="#707070" stroke-width=".8"/><path d="M9 7.200h36" stroke="#1e8bcd" stroke-width="1.800"/><rect x="5" y="15" width="20.5" height="9.5" fill="#fafafa" stroke="#707070" stroke-width=".8"/><rect x="28.5" y="15" width="20.5" height="9.5" fill="#fafafa" stroke="#707070" stroke-width=".8"/><rect x="5" y="28" width="20.5" height="9.5" fill="#fafafa" stroke="#707070" stroke-width=".8"/><rect x="28.5" y="28" width="20.5" height="9.5" fill="#fafafa" stroke="#707070" stroke-width=".8"/></svg>
<svg style="left:166.1px;top:181.7px" width="54.500" height="42" viewBox="0 0 54.500 42"><rect x=".6" y=".6" width="53" height="40.500" fill="#fafafa" stroke="#4e4e4e" stroke-width="1.200"/><rect x="4.500" y="4" width="45" height="6.500" fill="#fafafa" stroke="#707070" stroke-width=".8"/><path d="M9 7.200h36" stroke="#1e8bcd" stroke-width="1.800"/><rect x="5.0" y="15" width="12.5" height="9.5" fill="#fafafa" stroke="#707070" stroke-width=".8"/><rect x="5.0" y="28" width="12.5" height="9.5" fill="#fafafa" stroke="#707070" stroke-width=".8"/><rect x="20.8" y="15" width="12.5" height="9.5" fill="#fafafa" stroke="#707070" stroke-width=".8"/><rect x="20.8" y="28" width="12.5" height="9.5" fill="#fafafa" stroke="#707070" stroke-width=".8"/><rect x="36.6" y="15" width="12.5" height="9.5" fill="#fafafa" stroke="#707070" stroke-width=".8"/><rect x="36.6" y="28" width="12.5" height="9.5" fill="#fafafa" stroke="#707070" stroke-width=".8"/></svg>
</div>
<div class="a" style="left:935.500px;top:596px;width:215.500px;height:1px;background:#fafafa"></div>
<div class="a" style="left:1167.500px;top:133.500px;width:27px;height:28px;background:#cce4f7;border:1px solid #99c9ef;border-radius:3px"></div>
<svg style="left:1173.5px;top:139.4px" width="22" height="22" viewBox="0 0 22 22"><rect x=".6" y=".6" width="16.800" height="16.800" fill="#fff" stroke="#3a3a38" stroke-width="1.200"/><path d="M.6 2h16.800" stroke="#3a3a38" stroke-width="2.200"/><path d="M4 8h10M4 12.500h10" stroke="#1e8bcd" stroke-width="1.200"/><circle cx="10.500" cy="8" r="1.500" fill="#1e8bcd"/><circle cx="7" cy="12.500" r="1.500" fill="#1e8bcd"/></svg>
<svg style="left:1173.5px;top:171px" width="22" height="22" viewBox="0 0 22 22"><path d="M.8 14L6 .8h1.600L12.800 14M3 9h7.600" fill="none" stroke="#3a3a38" stroke-width="1.600"/><path d="M11 12L17 4.500a1 1 0 0 1 1.500 1.200L13 13.500z" fill="#fff" stroke="#3a3a38" stroke-width="1"/><path d="M11 12c-2-.3-3.500 1.500-3.500 4 3 1.500 5.500 0 5.500-2.500z" fill="#1e8bcd"/></svg>
<svg style="left:1173.5px;top:201px" width="22" height="22" viewBox="0 0 22 22"><path d="M.6 14V.6h6l2 2.400h6v3" fill="#fbd98a" stroke="#ed8733" stroke-width="1.200" stroke-linejoin="round"/><rect x="6.500" y="6" width="11.500" height="11.500" fill="#fff" stroke="#3a3a38" stroke-width="1.200"/><path d="M7.200 17l3.500-4 2 2 2-3 2.800 3v2z" fill="#83beec" stroke="#1e8bcd" stroke-width=".9"/><circle cx="9.500" cy="9" r="1.200" fill="#ed8733"/></svg>
<svg style="left:1174px;top:231.7px" width="22" height="22" viewBox="0 0 22 22"><circle cx="8.800" cy="8.800" r="8.200" fill="#fff" stroke="#3a3a38" stroke-width="1.200"/><path d="M12.800 4.800l-2.500 5.500-5.500 2.500 2.500-5.500z" fill="#1e8bcd"/><circle cx="8.800" cy="8.800" r="1" fill="#fff"/></svg>
<svg style="left:1174px;top:262.3px" width="22" height="22" viewBox="0 0 22 22"><path d="M8.800.8l8 8.200-8 8.200-8-8.200z" fill="#fff" stroke="#3a3a38" stroke-width="1.200" stroke-linejoin="round"/></svg>
<svg style="left:1173.5px;top:296px" width="22" height="22" viewBox="0 0 22 22"><path d="M0 1.500h4M0 4.500h4M0 7.500h4M0 10.500h4" stroke="#ed8733" stroke-width="1.200"/><rect x="6" y=".6" width="13" height="11.800" fill="#fff" stroke="#3a3a38" stroke-width="1.200"/><path d="M8.500 4h10" stroke="#1e8bcd" stroke-width="1.800"/></svg>
<svg style="left:1173.5px;top:324.6px" width="22" height="22" viewBox="0 0 22 22"><path d="M7.500.8l2.100 4.800 5.200.4-4 3.400 1.300 5.100-4.600-2.800-4.600 2.800 1.300-5.100-4-3.400 5.200-.4z" fill="#fbd98a" stroke="#ed8733" stroke-width="1.200" stroke-linejoin="round"/><path d="M12.500 5h6.500M13.500 8h5.500M12.500 11h6.500" stroke="#ed8733" stroke-width="1.200"/></svg>
<svg style="left:1174px;top:355.7px" width="22" height="22" viewBox="0 0 22 22"><rect x=".6" y=".6" width="16" height="13.200" fill="#1e8bcd" stroke="#2a5c8a" stroke-width="1.200"/><rect x="2.800" y="2.800" width="11.600" height="2.300" fill="none" stroke="#d8ecfa" stroke-width=".9"/><rect x="2.800" y="7" width="11.600" height="4.600" fill="none" stroke="#d8ecfa" stroke-width=".9"/></svg><svg style="left:196px;top:116px;overflow:hidden" width="670" height="474" viewBox="0 0 670 474"><defs><clipPath id="mc"><path clip-rule="evenodd" d="M0,0H670V474H0ZM149,312L148,318L146,325L144,332L142,338L139,345L137,351L134,358L130,365L127,371L122,378L118,384L113,391L108,398L103,404L97,411L92,417L86,424L80,431L74,437L67,444L60,450L52,457L43,464L33,470L21,477L12,483L5,490L501,490L497,483L491,477L483,470L476,464L468,457L460,450L451,444L441,437L430,431L418,424L407,417L395,411L385,404L376,398L367,391L358,384L350,378L342,371L336,365L330,358L325,351L321,345L318,338L314,332L312,325L309,318L307,312Z"/></clipPath></defs><g fill="none" stroke="#fff" stroke-width=".75" stroke-opacity=".9"><g id="meshp"><path clip-path="url(#mc)" d="M-15.6,269.1L-13.5,266.9L-11.4,264.8L-9.4,262.7L-8.1,261.2M-15.2,279.2L-13,277.3L-10.9,275.3L-8.8,273.2L-6.7,271.1L-4.7,269L-2.7,266.9L-0.7,264.8L1.2,262.7L3.1,260.5M-15.6,289.2L-13.3,287.3L-11,285.4L-8.8,283.6L-6.6,281.7L-4.5,279.8L-2.4,277.8L-0.4,275.9L1.6,273.9L3.6,271.8L5.6,269.7L7.5,267.6L9.3,265.5L11.2,263.4L13,261.3L14.1,259.9M-16,299.8L-13.6,297.5L-11.2,295.3L-8.9,293.3L-6.6,291.4L-4.3,289.5L-2.1,287.6L0,285.8L2.2,284L4.2,282.2L6.3,280.3L8.3,278.4L10.2,276.5L12.1,274.5L14,272.5L15.9,270.4L17.7,268.4L19.5,266.3L21.2,264.2L22.9,262.1L24.6,260M-15.7,312.4L-13.1,309.2L-10.6,306.3L-8.1,303.6L-5.7,301.1L-3.3,298.8L-1,296.6L1.2,294.6L3.5,292.7L5.6,290.9L7.8,289.1L9.8,287.3L11.9,285.6L13.9,283.8L15.8,282L17.7,280.2L19.6,278.3L21.5,276.4L23.3,274.5L25.1,272.5L26.8,270.5L28.5,268.4L30.2,266.4L31.9,264.3L33.5,262.2L35.1,260.1L35.6,259.5M-16.1,330.1L-13.4,325.7L-10.7,321.6L-8.1,317.7L-5.5,314.2L-3,310.9L-0.6,307.9L1.8,305.2L4.1,302.7L6.4,300.3L8.7,298.2L10.9,296.2L13,294.3L15.1,292.5L17.2,290.8L19.2,289.1L21.1,287.5L23.1,285.8L25,284.1L26.8,282.4L28.6,280.6L30.4,278.8L32.2,277L33.9,275.1L35.6,273.2L37.2,271.2L38.8,269.2L40.4,267.1L42,265.1L43.5,263L45,261L46,259.6M-15.7,352.4L-12.8,346.6L-10,341L-7.2,335.7L-4.5,330.7L-1.8,326L0.8,321.7L3.3,317.7L5.7,314.1L8.1,310.8L10.5,307.8L12.8,305.1L15,302.7L17.2,300.4L19.3,298.4L21.4,296.6L23.5,294.8L25.5,293.2L27.5,291.6L29.4,290L31.3,288.5L33.1,287L34.9,285.4L36.7,283.8L38.5,282.2L40.2,280.5L41.8,278.7L43.5,276.9L45.1,275.1L46.7,273.2L48.2,271.2L49.7,269.2L51.2,267.2L52.7,265.2L54.1,263.2L55.5,261.2L56.5,259.8M-15.2,381L-12.1,374.2L-9.1,367.4L-6.1,360.8L-3.3,354.3L-0.5,348.1L2.3,342L4.9,336.3L7.5,330.9L10,325.8L12.5,321.2L14.9,316.9L17.2,313.1L19.5,309.7L21.8,306.7L24,304L26.1,301.7L28.2,299.6L30.3,297.8L32.3,296.1L34.2,294.6L36.1,293.1L38,291.7L39.8,290.4L41.6,289.1L43.4,287.7L45.1,286.3L46.8,284.9L48.5,283.4L50.1,281.8L51.7,280.2L53.2,278.5L54.8,276.8L56.3,275L57.7,273.1L59.2,271.3L60.6,269.3L62,267.4L63.4,265.4L64.7,263.4L66,261.4L66.9,260.1M-15.8,417L-12.4,409.6L-9.2,402.2L-6,394.8L-2.9,387.5L0.1,380.2L3,373L5.8,365.9L8.6,358.9L11.3,352L13.9,345.3L16.5,338.8L19,332.7L21.4,327L23.8,321.7L26.1,316.9L28.3,312.5L30.5,308.7L32.7,305.4L34.8,302.6L36.8,300.2L38.8,298.2L40.8,296.5L42.7,295L44.5,293.7L46.4,292.5L48.2,291.4L49.9,290.4L51.6,289.3L53.3,288.3L55,287.1L56.6,285.9L58.2,284.7L59.7,283.4L61.2,281.9L62.7,280.5L64.2,278.9L65.6,277.2L67,275.5L68.4,273.7L69.7,271.9L71.1,270L72.4,268.1L73.6,266.2L74.9,264.2L76.1,262.3L77.3,260.3M-15.2,454.5L-11.6,446.5L-8.1,438.6L-4.7,430.8L-1.4,423L1.8,415.3L4.9,407.6L7.9,399.9L10.9,392.2L13.7,384.6L16.5,376.9L19.2,369.3L21.8,361.7L24.3,354.2L26.8,346.8L29.2,339.7L31.6,332.9L33.9,326.4L36.1,320.4L38.3,314.9L40.4,310L42.5,305.7L44.5,302L46.5,299L48.5,296.6L50.4,294.6L52.2,293.1L54,291.9L55.8,291L57.5,290.2L59.2,289.6L60.8,288.9L62.5,288.3L64.1,287.6L65.6,286.8L67.1,285.9L68.6,285L70.1,283.9L71.5,282.7L72.9,281.5L74.3,280.1L75.6,278.6L76.9,277L78.2,275.4L79.5,273.7L80.8,271.9L82,270.1L83.2,268.2L84.4,266.3L85.5,264.4L86.7,262.5L87.4,261.2M-14.6,496.9L-10.6,488L-6.8,479.2L-3.2,470.7L0.4,462.3L3.8,454L7.1,445.8L10.3,437.7L13.4,429.6L16.5,421.6L19.4,413.6L22.3,405.6L25,397.5L27.7,389.5L30.3,381.4L32.8,373.3L35.3,365.1L37.7,357L40.1,349L42.3,341.1L44.5,333.4L46.7,326L48.8,319L50.9,312.6L52.9,306.8L54.8,301.8L56.7,297.5L58.6,294.1L60.4,291.4L62.2,289.4L63.9,288L65.6,287.1L67.3,286.6L68.9,286.3L70.5,286.2L72,286.1L73.5,286L75,285.8L76.5,285.5L77.9,285.1L79.3,284.6L80.6,283.9L82,283L83.3,282L84.6,280.9L85.8,279.7L87.1,278.3L88.3,276.8L89.5,275.3L90.6,273.6L91.8,271.9L92.9,270.2L94,268.4L95.1,266.5L96.1,264.6L97.2,262.7L97.9,261.5M6.1,497.1L9.7,488L13.1,479.2L16.5,470.4L19.7,461.9L22.8,453.4L25.8,445L28.8,436.7L31.6,428.4L34.3,420.1L37,411.8L39.6,403.4L42.1,395L44.5,386.5L46.9,378L49.2,369.4L51.5,360.7L53.7,351.9L55.8,343.2L57.8,334.6L59.9,326.2L61.8,318.1L63.7,310.5L65.6,303.6L67.4,297.4L69.2,292.1L70.9,287.8L72.6,284.6L74.3,282.3L75.9,280.9L77.5,280.2L79,280.1L80.5,280.4L82,280.9L83.4,281.6L84.8,282.2L86.2,282.7L87.6,283.1L88.9,283.2L90.2,283.2L91.4,283L92.7,282.6L93.9,282L95.1,281.2L96.3,280.3L97.4,279.2L98.5,278L99.6,276.6L100.7,275.1L101.8,273.6L102.8,271.9L103.8,270.2L104.8,268.5L105.8,266.7L106.8,264.8L107.7,263L108.3,261.7M26.8,497.3L30,488.1L33.1,479.1L36.1,470.2L39,461.5L41.8,452.8L44.5,444.2L47.2,435.7L49.7,427.1L52.2,418.6L54.6,409.9L56.9,401.2L59.2,392.4L61.4,383.5L63.5,374.4L65.6,365.2L67.6,355.9L69.6,346.5L71.5,337L73.4,327.5L75.2,318.2L76.9,309.3L78.7,300.8L80.3,293.1L82,286.4L83.6,280.8L85.1,276.4L86.7,273.4L88.1,271.6L89.6,270.9L91,271.2L92.4,272L93.8,273.3L95.1,274.8L96.4,276.3L97.6,277.8L98.9,279L100.1,280L101.3,280.7L102.5,281.2L103.6,281.4L104.7,281.3L105.8,280.9L106.9,280.4L107.9,279.6L109,278.7L110,277.6L111,276.3L111.9,275L112.9,273.5L113.8,271.9L114.7,270.3L115.6,268.6L116.5,266.8L117.4,265.1L118.2,263.2L118.8,262M47.5,497.5L50.4,488.2L53.1,479.1L55.8,470L58.4,461.1L60.8,452.3L63.3,443.5L65.6,434.7L67.9,425.9L70.1,417.1L72.2,408.1L74.3,399.1L76.3,389.8L78.2,380.4L80.1,370.8L82,361L83.8,350.9L85.5,340.6L87.2,330.2L88.9,319.8L90.5,309.4L92.1,299.3L93.6,289.8L95.1,281.1L96.5,273.6L98,267.5L99.3,263L100.7,260.3L102,259.1L103.3,259.3L104.6,260.7L105.8,262.8L107,265.3L108.2,268L109.3,270.6L110.5,273L111.6,275L112.6,276.7L113.7,278.1L114.7,279L115.7,279.6L116.7,279.9L117.7,279.8L118.7,279.5L119.6,278.9L120.5,278.2L121.4,277.2L122.3,276.1L123.2,274.8L124,273.4L124.8,271.9L125.7,270.3L126.5,268.7L127.2,267L128,265.3L128.8,263.5L129.3,262.3M68.2,497.8L70.7,488.3L73.1,479L75.4,469.9L77.7,460.8L79.9,451.8L82,442.8L84,433.8L86,424.7L87.9,415.6L89.8,406.3L91.6,396.9L93.4,387.3L95.1,377.4L96.7,367.2L98.4,356.6L99.9,345.8L101.5,334.6L102.9,323.1L104.4,311.5L105.8,299.8L107.2,288.4L108.5,277.5L109.8,267.5L111.1,258.9L112.3,252.1L113.6,247.4L114.7,245L115.9,244.6L117,246L118.1,248.8L119.2,252.4L120.3,256.4L121.3,260.5L122.3,264.4L123.3,267.8L124.2,270.8L125.2,273.3L126.1,275.3L127,276.8L127.9,277.8L128.8,278.4L129.6,278.7L130.5,278.6L131.3,278.2L132.1,277.6L132.9,276.8L133.6,275.8L134.4,274.6L135.1,273.3L135.9,271.9L136.6,270.4L137.3,268.8L138,267.2L138.6,265.5L139.3,263.8L139.7,262.6M88.9,498L91,488.5L93.1,479L95.1,469.7L97,460.5L98.9,451.3L100.7,442.1L102.5,432.9L104.2,423.6L105.8,414.2L107.4,404.7L109,394.9L110.5,384.8L111.9,374.4L113.4,363.6L114.7,352.4L116.1,340.7L117.4,328.5L118.7,315.9L119.9,302.9L121.1,289.7L122.3,276.6L123.4,263.9L124.6,252.3L125.7,242.3L126.7,234.6L127.8,229.6L128.8,227.5L129.8,228.1L130.7,231L131.7,235.5L132.6,241L133.5,246.8L134.4,252.6L135.3,257.8L136.1,262.5L136.9,266.6L137.7,269.9L138.5,272.5L139.3,274.6L140.1,276L140.8,277L141.5,277.5L142.2,277.7L143,277.5L143.6,277.1L144.3,276.4L145,275.5L145.6,274.5L146.3,273.2L146.9,271.9L147.5,270.5L148.1,269L148.7,267.4L149.3,265.7L149.8,264L150,263.5M109.6,498.3L111.3,488.6L113.1,479.1L114.7,469.6L116.3,460.3L117.9,450.9L119.4,441.6L120.9,432.2L122.3,422.6L123.7,413L125,403.1L126.3,393L127.6,382.5L128.8,371.6L130,360.2L131.1,348.3L132.2,335.7L133.3,322.5L134.4,308.7L135.4,294.2L136.4,279.3L137.4,264.3L138.4,249.6L139.3,235.9L140.2,224.1L141.1,215.1L142,209.6L142.8,207.9L143.6,209.8L144.4,214.5L145.2,221.3L146,229L146.8,236.9L147.5,244.4L148.2,251.3L148.9,257.3L149.6,262.3L150.3,266.5L150.9,269.8L151.6,272.4L152.2,274.3L152.8,275.7L153.4,276.5L154,276.9L154.6,276.9L155.2,276.6L155.8,276.1L156.3,275.3L156.8,274.3L157.4,273.2L157.9,271.9L158.4,270.5L158.9,269.1L159.4,267.5L159.9,265.9L160.4,264.3L160.5,263.7M130.3,498.6L131.7,488.8L133.1,479.1L134.4,469.6L135.7,460.1L136.9,450.6L138.1,441.1L139.3,431.5L140.4,421.8L141.5,411.9L142.6,401.7L143.6,391.3L144.6,380.4L145.6,369.1L146.6,357.1L147.5,344.5L148.4,331.2L149.3,317L150.1,301.9L150.9,285.9L151.7,269.2L152.5,252.1L153.3,235L154,218.9L154.8,205L155.5,194.4L156.2,188.2L156.8,187L157.5,190.3L158.2,197.3L158.8,206.5L159.4,216.8L160,227L160.6,236.5L161.2,245L161.7,252.3L162.3,258.4L162.8,263.4L163.4,267.4L163.9,270.5L164.4,272.8L164.9,274.4L165.4,275.5L165.8,276.1L166.3,276.3L166.8,276.2L167.2,275.8L167.6,275.1L168.1,274.2L168.5,273.1L168.9,271.9L169.3,270.6L169.7,269.2L170.1,267.7L170.5,266.1L170.9,264.5L171,264M150.9,498.9L152,489L153,479.2L154,469.6L155,460L155.9,450.3L156.8,440.7L157.7,430.9L158.6,421.1L159.4,411L160.2,400.6L161,389.9L161.7,378.7L162.5,366.9L163.2,354.5L163.9,341.4L164.5,327.3L165.2,312.1L165.8,295.9L166.5,278.5L167.1,260L167.6,240.7L168.2,221.3L168.8,202.6L169.3,186.2L169.9,173.8L170.4,166.8L170.9,166.1L171.4,171.1L171.9,180.5L172.3,192.5L172.8,205.3L173.3,217.9L173.7,229.3L174.1,239.4L174.5,247.9L175,254.9L175.4,260.7L175.8,265.2L176.2,268.8L176.5,271.5L176.9,273.4L177.3,274.7L177.6,275.5L178,275.9L178.3,275.8L178.7,275.5L179,274.9L179.3,274.1L179.6,273.1L179.9,272L180.2,270.7L180.5,269.3L180.8,267.9L181.1,266.4L181.4,264.8M171.9,495.8L172.6,485.9L173.3,476.1L173.9,466.4L174.5,456.7L175.2,446.9L175.8,437.1L176.3,427.2L176.9,417.1L177.4,406.8L178,396.1L178.5,385L179,373.4L179.5,361.1L179.9,348.1L180.4,334.1L180.8,319L181.3,302.7L181.7,285.1L182.1,266L182.5,245.6L182.9,224.2L183.3,202.5L183.6,182L184,164.5L184.4,152.3L184.7,147L185,149.1L185.4,157.6L185.7,170.6L186,185.6L186.3,200.8L186.6,214.9L186.9,227.5L187.2,238.2L187.5,247.2L187.7,254.5L188,260.4L188.3,265L188.5,268.6L188.8,271.2L189,273.2L189.3,274.5L189.5,275.2L189.7,275.6L190,275.5L190.2,275.2L190.4,274.6L190.6,273.8L190.8,272.8L191,271.7L191.2,270.4L191.4,269L191.6,267.6L191.8,266L191.9,265M192.4,496.1L192.8,486.1L193.1,476.3L193.5,466.5L193.8,456.7L194.1,446.9L194.4,437L194.7,427L195,416.8L195.2,406.3L195.5,395.5L195.7,384.2L196,372.4L196.2,359.9L196.5,346.6L196.7,332.3L196.9,316.8L197.1,300L197.3,281.7L197.6,261.7L197.8,240.2L197.9,217.4L198.1,194.1L198.3,171.8L198.5,152.6L198.7,139.2L198.9,133.5L199,136.3L199.2,146.3L199.3,161.1L199.5,177.9L199.7,194.8L199.8,210.3L199.9,223.9L200.1,235.5L200.2,245.1L200.4,252.9L200.5,259.1L200.6,264L200.8,267.8L200.9,270.6L201,272.7L201.1,274.1L201.2,275L201.4,275.4L201.5,275.4L201.6,275.1L201.7,274.6L201.8,273.8L201.9,272.9L202,271.7L202.1,270.5L202.2,269.2L202.3,267.8L202.4,266.2L202.5,265.2M213,496.4L213,486.4L213,476.5L213,466.6L213,456.8L213,446.9L213,437L213,426.9L213,416.6L213,406.1L213,395.2L213,383.9L213,372L213,359.4L213,346L213,331.6L213,315.9L213,298.9L213,280.3L213,260L213,238.1L213,214.8L213,190.9L213,167.9L213,148.1L213,134.3L213,128.5L213,131.5L213,142L213,157.5L213,175.1L213,192.5L213,208.6L213,222.6L213,234.4L213,244.2L213,252.2L213,258.5L213,263.6L213,267.4L213,270.4L213,272.5L213,273.9L213,274.8L213,275.3L213,275.4L213,275.1L213,274.6L213,273.9L213,272.9L213,271.9L213,270.7L213,269.3L213,267.9L213,266.4L213,265.9M233.4,493.3L233.1,483.3L232.8,473.4L232.4,463.5L232.1,453.6L231.8,443.7L231.5,433.7L231.2,423.6L231,413.2L230.7,402.6L230.4,391.6L230.2,380.1L229.9,368L229.7,355.2L229.5,341.5L229.2,326.8L229,310.9L228.8,293.5L228.6,274.6L228.4,254.1L228.2,232.1L228,209L227.8,185.8L227.6,164.3L227.4,146.8L227.3,135.8L227.1,132.9L226.9,138.4L226.8,150.3L226.6,166L226.5,183.1L226.3,199.7L226.2,214.6L226,227.6L225.9,238.5L225.7,247.5L225.6,254.8L225.5,260.6L225.3,265.1L225.2,268.6L225.1,271.2L225,273.1L224.8,274.4L224.7,275.1L224.6,275.4L224.5,275.4L224.4,275.1L224.3,274.5L224.2,273.7L224.1,272.7L224,271.6L223.9,270.4L223.8,269L223.7,267.6L223.6,266.1M253.9,493.6L253.2,483.6L252.5,473.6L251.9,463.8L251.2,453.9L250.6,444L250,434L249.5,423.9L248.9,413.6L248.4,403L247.9,392L247.3,380.7L246.9,368.7L246.4,356.1L245.9,342.6L245.5,328.2L245,312.7L244.6,295.9L244.2,277.7L243.8,258.1L243.4,237.3L243,215.7L242.6,194.2L242.2,174.5L241.9,158.5L241.5,148.4L241.2,145.6L240.9,150.1L240.5,160.5L240.2,174.4L239.9,189.7L239.6,204.7L239.3,218.4L239,230.5L238.7,240.7L238.4,249.1L238.2,256L237.9,261.5L237.7,265.9L237.4,269.2L237.1,271.7L236.9,273.5L236.7,274.7L236.4,275.4L236.2,275.7L236,275.6L235.7,275.2L235.5,274.6L235.3,273.8L235.1,272.9L234.9,271.8L234.7,270.5L234.5,269.2L234.3,267.8L234.1,266.3M274,490.5L273,480.5L272,470.6L271,460.8L270.1,450.9L269.2,441.1L268.3,431.1L267.4,421L266.6,410.7L265.8,400.1L265,389.2L264.3,377.8L263.5,365.9L262.8,353.3L262.1,340L261.5,325.8L260.8,310.6L260.2,294.2L259.5,276.8L258.9,258.2L258.4,238.9L257.8,219.4L257.2,200.7L256.7,184.4L256.1,172L255.6,165L255.1,164.3L254.6,169.4L254.1,178.9L253.7,190.9L253.2,203.9L252.7,216.5L252.3,228.1L251.9,238.2L251.5,246.9L251,254L250.6,259.9L250.2,264.6L249.8,268.2L249.5,271L249.1,273.1L248.7,274.5L248.4,275.4L248,275.9L247.7,276L247.3,275.8L247,275.3L246.7,274.6L246.4,273.7L246.1,272.7L245.8,271.5L245.5,270.2L245.2,268.9L244.9,267.4L244.7,266.4M294.3,490.8L292.9,480.9L291.6,471L290.3,461.2L289.1,451.4L287.9,441.6L286.7,431.7L285.6,421.7L284.5,411.5L283.4,401.1L282.4,390.4L281.4,379.3L280.4,367.7L279.4,355.6L278.5,342.8L277.6,329.3L276.7,314.9L275.9,299.7L275.1,283.6L274.3,266.9L273.5,249.6L272.7,232.6L272,216.5L271.2,202.5L270.5,192L269.8,185.9L269.2,184.7L268.5,188.2L267.8,195.2L267.2,204.6L266.6,214.9L266,225.3L265.4,234.9L264.8,243.6L264.3,251L263.7,257.3L263.2,262.4L262.6,266.5L262.1,269.8L261.6,272.2L261.1,274L260.6,275.3L260.2,276L259.7,276.4L259.2,276.4L258.8,276.1L258.4,275.6L257.9,274.8L257.5,273.9L257.1,272.9L256.7,271.7L256.3,270.4L255.9,269L255.5,267.5L255.2,266.5M315.8,497.8L314.1,487.8L312.4,477.9L310.7,468.1L309.1,458.4L307.6,448.6L306.1,438.9L304.6,429.1L303.2,419.2L301.9,409.1L300.6,398.9L299.3,388.3L298,377.4L296.8,366.1L295.7,354.3L294.5,342L293.4,329L292.3,315.4L291.3,301.2L290.2,286.5L289.2,271.4L288.3,256.4L287.3,241.9L286.4,228.8L285.5,217.9L284.6,210L283.8,205.8L282.9,205.5L282.1,208.5L281.3,214.2L280.5,221.5L279.7,229.5L279,237.5L278.3,245L277.6,251.8L276.9,257.6L276.2,262.6L275.5,266.6L274.8,269.9L274.2,272.4L273.6,274.3L273,275.6L272.4,276.5L271.8,276.9L271.2,277L270.6,276.8L270.1,276.4L269.5,275.7L269,274.8L268.4,273.8L267.9,272.7L267.4,271.4L266.9,270.1L266.4,268.6L266,267.1L265.8,266.6M335.7,494.7L333.6,484.8L331.6,475L329.6,465.3L327.7,455.7L325.9,446L324.1,436.4L322.4,426.7L320.7,417L319.1,407.1L317.6,397L316,386.7L314.6,376L313.1,365.1L311.7,353.7L310.4,342L309,329.7L307.8,317.1L306.5,304.1L305.3,290.8L304.1,277.6L302.9,264.7L301.8,252.6L300.7,242.1L299.6,233.6L298.6,227.7L297.6,224.7L296.6,224.6L295.6,227L294.6,231.2L293.7,236.6L292.8,242.6L291.9,248.6L291,254.3L290.2,259.4L289.3,263.8L288.5,267.6L287.7,270.6L287,273.1L286.2,274.9L285.4,276.3L284.7,277.1L284,277.6L283.3,277.8L282.6,277.6L281.9,277.2L281.2,276.6L280.6,275.8L280,274.8L279.3,273.7L278.7,272.4L278.1,271.1L277.5,269.7L276.9,268.2L276.4,266.7M355.3,491.6L352.9,481.8L350.6,472.2L348.3,462.6L346.1,453.1L344,443.6L342,434.1L340,424.6L338.1,415L336.2,405.3L334.4,395.5L332.6,385.4L330.9,375.2L329.3,364.6L327.6,353.8L326.1,342.7L324.5,331.3L323.1,319.7L321.6,307.9L320.2,296.1L318.8,284.6L317.5,273.7L316.2,263.7L314.9,255.2L313.7,248.5L312.4,243.9L311.3,241.6L310.1,241.4L309,243L307.9,246L306.8,249.8L305.7,254.1L304.7,258.4L303.7,262.5L302.7,266.2L301.8,269.4L300.8,272.1L299.9,274.3L299,276L298.1,277.3L297.2,278.1L296.4,278.6L295.5,278.7L294.7,278.5L293.9,278.1L293.1,277.5L292.4,276.7L291.6,275.8L290.9,274.7L290.1,273.5L289.4,272.2L288.7,270.8L288,269.3L287.4,267.8L286.9,266.7M377.5,498.4L374.7,488.6L372,478.9L369.4,469.4L366.8,460L364.3,450.6L361.9,441.3L359.6,432L357.4,422.6L355.2,413.3L353.1,403.8L351,394.3L349.1,384.6L347.1,374.7L345.2,364.7L343.4,354.5L341.6,344.1L339.9,333.5L338.2,322.9L336.6,312.3L335,301.9L333.4,292L331.9,282.7L330.4,274.4L329,267.4L327.6,262L326.2,258.2L324.9,256.2L323.5,255.8L322.3,256.6L321,258.5L319.8,261.1L318.6,263.9L317.4,266.8L316.3,269.7L315.2,272.2L314.1,274.4L313,276.2L312,277.7L310.9,278.7L309.9,279.4L308.9,279.8L308,279.8L307,279.7L306.1,279.2L305.2,278.6L304.3,277.8L303.4,276.8L302.6,275.8L301.7,274.6L300.9,273.2L300.1,271.9L299.3,270.4L298.5,268.9L297.7,267.3M397,495.3L393.9,485.6L390.9,476.1L387.9,466.7L385.1,457.4L382.3,448.2L379.7,439.1L377.1,430L374.6,420.9L372.2,411.8L369.8,402.6L367.6,393.4L365.3,384L363.2,374.6L361.1,365.1L359,355.5L357.1,345.8L355.1,336.1L353.3,326.5L351.4,317L349.6,307.9L347.9,299.2L346.2,291.3L344.6,284.3L342.9,278.4L341.4,273.8L339.8,270.6L338.3,268.6L336.9,267.9L335.5,268.1L334.1,269.1L332.7,270.5L331.4,272.3L330,274.1L328.8,275.8L327.5,277.4L326.3,278.7L325.1,279.8L323.9,280.6L322.8,281.1L321.7,281.3L320.6,281.3L319.5,281L318.4,280.5L317.4,279.8L316.4,279L315.4,278L314.4,276.9L313.4,275.7L312.5,274.4L311.6,273L310.7,271.5L309.8,270L308.9,268.4L308.3,267.3M416.3,492.2L412.9,482.7L409.5,473.3L406.3,464.1L403.2,455L400.2,446L397.2,437.1L394.4,428.2L391.7,419.3L389,410.5L386.4,401.6L383.9,392.7L381.5,383.8L379.1,374.8L376.8,365.9L374.5,356.9L372.3,347.9L370.2,339L368.2,330.2L366.1,321.8L364.2,313.7L362.3,306.1L360.4,299.2L358.6,293.2L356.8,288.1L355.1,284L353.4,281L351.7,279L350.1,277.9L348.5,277.6L347,277.8L345.5,278.4L344,279.3L342.6,280.2L341.2,281.1L339.8,281.9L338.4,282.5L337.1,282.9L335.8,283.1L334.6,283.1L333.3,282.9L332.1,282.5L330.9,281.9L329.7,281.2L328.6,280.3L327.5,279.3L326.4,278.1L325.3,276.9L324.2,275.5L323.2,274.1L322.2,272.6L321.2,271.1L320.2,269.5L319.2,267.8M434.1,486.1L430.4,476.8L426.8,467.6L423.3,458.6L420,449.8L416.7,441L413.6,432.3L410.5,423.7L407.6,415.1L404.7,406.5L401.9,398M451.5,480.1L447.5,471.1L443.7,462.2L440,453.4L436.4,444.8L432.9,436.2L429.6,427.8L426.3,419.5L423.1,411.2L420.1,402.9L417.1,394.7L414.2,386.6L411.4,378.5L408.6,370.5L406,362.6L403.4,354.9L400.8,347.3L398.4,339.9L396,332.8L393.6,326.2L391.4,320L389.1,314.3L387,309.2L384.9,304.8L382.8,301.1L380.8,298L378.8,295.6L376.9,293.8L375,292.4L373.2,291.4L371.4,290.7L369.6,290.2L367.9,289.8L366.2,289.4L364.6,289L363,288.6L361.4,288L359.9,287.4L358.4,286.7L356.9,285.8L355.4,284.8L354,283.8L352.6,282.6L351.3,281.3L349.9,280L348.6,278.5L347.3,277L346.1,275.5L344.8,273.9L343.6,272.3L342.4,270.6L341.2,268.9L340.9,268.3M468.5,474.4L464.3,465.6L460.2,456.9L456.3,448.4L452.5,440L448.8,431.8L445.3,423.6L441.8,415.6L438.4,407.6L436.2,402.3M485.1,468.8L480.7,460.3L476.4,451.9L472.3,443.7L468.3,435.6L464.4,427.6L460.6,419.8L457,412L453.4,404.4M501.4,463.6L496.8,455.3L492.3,447.2L487.9,439.2L483.7,431.4L479.6,423.7L475.7,416.1L471.8,408.7L468.1,401.4L464.5,394.2L461,387.1L457.5,380.2L454.2,373.5L450.9,366.9L447.8,360.5L444.7,354.3L441.7,348.4L438.8,342.8L436,337.5L433.2,332.6L430.5,328L427.8,323.8L425.2,320L422.7,316.6L420.3,313.5L417.9,310.8L415.5,308.3L413.2,306.2L411,304.2L408.8,302.4L406.7,300.7L404.6,299.1L402.5,297.5L400.5,296L398.5,294.5L396.6,292.9L394.7,291.4L392.9,289.8L391.1,288.2L389.3,286.6L387.5,284.9L385.8,283.2L384.2,281.4L382.5,279.7L380.9,277.9L379.3,276L377.8,274.2L376.3,272.4L374.8,270.5L374.3,269.9M515.7,455.8L510.9,447.9L506.3,440.1L501.8,432.5L497.4,425L493.2,417.6L489.1,410.4L487.8,408M531.2,451.1L526.2,443.4L521.4,435.9L516.7,428.6L512.2,421.4L507.8,414.3L504.9,409.7M544.6,444.1L539.5,436.8L534.6,429.6L529.8,422.6L525.1,415.7L520.6,409L516.2,402.5L511.9,396L507.8,389.8L503.8,383.7L499.8,377.8L496,372L492.3,366.5L488.6,361.1L485.1,355.9L481.7,351L478.3,346.3L475,341.9L471.8,337.7L468.7,333.7L465.7,330L462.7,326.5L459.8,323.2L457,320.2L454.2,317.3L451.5,314.5L448.8,311.9L446.2,309.4L443.7,307L441.2,304.7L438.8,302.5L436.4,300.3L434.1,298.1L431.8,296L429.6,293.8L427.4,291.7L425.2,289.6L423.1,287.5L421.1,285.4L419.1,283.3L417.1,281.2L415.1,279.2L413.2,277.1L411.4,275L409.5,273M557.7,437.6L552.5,430.6L547.4,423.7L542.5,417L539.3,412.7M570.3,431.5L565,424.8L559.8,418.2L556.4,413.9M584.4,427.9L578.9,421.4L573.6,415.1L568.4,409L563.4,403L558.5,397.2L553.8,391.5L549.1,386L544.6,380.6L540.3,375.4L536,370.4L531.8,365.5L527.8,360.7L523.8,356.2L520,351.8L516.2,347.6L512.5,343.5L509,339.6L505.5,335.9L502.1,332.3L498.7,328.9L495.5,325.6L492.3,322.4L489.2,319.3L486.1,316.3L483.1,313.4L480.2,310.6L477.4,307.9L474.6,305.2L471.8,302.5L469.2,300L466.5,297.4L464,294.9L461.5,292.4L459,290L456.6,287.5L454.2,285.1L451.9,282.8L449.6,280.4L447.3,278.1L446.6,277.3M596.4,422.4L590.8,416.2M615.4,408.5L609.7,402.9L604.2,397.5L598.9,392.3L593.7,387.1L588.7,382.1L583.7,377.3L578.9,372.5L574.3,367.9L569.7,363.4L565.3,359.1L561,354.9L556.7,350.8L552.6,346.8L548.6,342.9L544.6,339.1L540.8,335.5L537,331.9L533.4,328.4L529.8,325L526.3,321.7L522.9,318.5L519.5,315.4L516.2,312.3L513,309.3L509.9,306.3L506.8,303.4L503.8,300.5L500.8,297.7L497.9,294.9L495.1,292.2L492.3,289.5L489.5,286.8L486.9,284.2L486,283.4M617.7,370.3L612.6,365.9L607.7,361.7L602.8,357.5L598.1,353.4L593.5,349.4L589,345.5L584.6,341.7L580.4,337.9L576.2,334.3L572.1,330.7L568.1,327.1L564.1,323.7L560.3,320.3L556.6,316.9L552.9,313.7L549.3,310.4L545.8,307.3L542.4,304.2L539,301.1L535.7,298.1L532.4,295.1M609,330.4L604.6,326.8L600.3,323.3L597.5,320.9M-23.4,265.3L-13.2,265.3L-2.9,265.3L7.4,265.3L17.7,265.3L28,265.4L38.2,265.5L48.5,265.6L58.8,265.7L69.1,265.9L79.4,266L89.6,266.2L99.9,266.4L110.2,266.5L120.5,266.7L130.8,266.9L141,267L151.3,267.2L161.6,267.4L171.9,267.6L182.2,267.7L192.4,267.9L202.7,268.1L213,268.2L223.3,268.4L233.6,268.5L243.8,268.7L254.1,268.8L264.4,268.9L274.7,269L285,269.1L295.2,269.2L305.5,269.2L315.8,269.3L326.1,269.3L336.4,269.3L346.6,269.2L356.9,269.2L360.3,269.1M-20.7,269.4L-10.2,269.4L0.2,269.4L10.7,269.4L21.2,269.4L31.6,269.4L42.1,269.5L52.5,269.6L63,269.6L73.5,269.7L83.9,269.8L94.4,269.9L104.9,269.9L115.3,270L125.8,270.1L136.3,270.1L146.7,270.2L157.2,270.3L167.7,270.4L178.1,270.5L188.6,270.6L199,270.7L209.5,270.8L220,270.9L230.4,271.1L240.9,271.2L251.4,271.4L261.8,271.5L272.3,271.7L282.8,271.8L293.2,272L303.7,272.1L314.2,272.2L324.6,272.4L335.1,272.4L345.5,272.5L356,272.6L366.5,272.6L376.9,272.6L387.4,272.6L397.9,272.6L408.3,272.6M-17.9,273.5L-7.2,273.4L3.5,273.4L14.1,273.3L24.8,273.3L35.4,273.3L46.1,273.3L56.7,273.3L67.4,273.3L78,273.3L88.7,273.2L99.3,273.2L110,273.1L120.7,273.1L131.3,273L142,273L152.6,272.9L163.3,272.9L173.9,272.9L184.6,272.9L195.2,272.9L205.9,273L216.6,273.1L227.2,273.2L237.9,273.3L248.5,273.5L259.2,273.7L269.8,273.9L280.5,274.2L291.1,274.4L301.8,274.7L312.4,274.9L323.1,275.2L333.8,275.4L344.4,275.6L355.1,275.8L365.7,276L376.4,276.2L387,276.3L397.7,276.4L408.3,276.5L419,276.6L429.6,276.7L440.3,276.8L443.9,276.8M-18.5,277.4L-7.7,277.3L3.2,277.2L14,277.1L24.9,277.1L35.7,277L46.6,276.9L57.4,276.8L68.3,276.7L79.2,276.5L90,276.3L100.9,276.1L111.7,275.9L122.6,275.7L133.4,275.5L144.3,275.2L155.1,275L166,274.9L176.8,274.7L187.7,274.6L198.5,274.6L209.4,274.6L220.2,274.7L231.1,274.8L241.9,275L252.8,275.2L263.6,275.5L274.5,275.9L285.3,276.2L296.2,276.6L307.1,277L317.9,277.4L328.8,277.8L339.6,278.2L350.5,278.6L361.3,279L372.2,279.4L383,279.7L393.9,280L404.7,280.3L415.6,280.6L426.4,280.8L437.3,281L448.1,281.2L459,281.4L469.8,281.5L477.1,281.6M-19.2,281.1L-8.1,281L2.9,280.9L14,280.8L25,280.6L36.1,280.4L47.1,280.2L58.2,280L69.3,279.7L80.3,279.4L91.4,279L102.4,278.6L113.5,278.1L124.5,277.7L135.6,277.2L146.7,276.8L157.7,276.4L168.8,276L179.8,275.7L190.9,275.5L201.9,275.4L213,275.4L224.1,275.4L235.1,275.6L246.2,275.9L257.2,276.3L268.3,276.7L279.3,277.2L290.4,277.8L301.5,278.4L312.5,279L323.6,279.6L334.6,280.3L345.7,280.9L356.7,281.6L367.8,282.2L378.9,282.7L389.9,283.3L401,283.8L412,284.3L423.1,284.7L434.1,285.1L445.2,285.5L456.2,285.9L467.3,286.2L478.4,286.5L489.4,286.7L500.5,286.9M-23.6,284.8L-12.4,284.6L-1.1,284.4L10.2,284.2L21.4,284L32.7,283.7L44,283.4L55.2,282.9L66.5,282.4L77.8,281.9L89.1,281.2L100.3,280.5L111.6,279.8L122.9,279L134.1,278.2L145.4,277.5L156.7,276.8L167.9,276.2L179.2,275.7L190.5,275.3L201.7,275L213,274.9L224.3,275L235.5,275.2L246.8,275.6L258.1,276.1L269.3,276.8L280.6,277.6L291.9,278.4L303.1,279.3L314.4,280.2L325.7,281.2L336.9,282.2L348.2,283.1L359.5,284.1L370.8,285L382,285.8L393.3,286.7L404.6,287.4L415.8,288.1L427.1,288.8L438.4,289.4L449.6,290L460.9,290.5L472.2,291L483.4,291.4L494.7,291.8L506,292.2L517.2,292.5L524.8,292.7M-16.7,288.2L-5.3,287.9L6.2,287.6L17.7,287.3L29.2,286.8L40.7,286.3L52.2,285.6L63.7,284.8L75.2,283.9L86.6,282.9L98.1,281.9L109.6,280.7L121.1,279.5L132.6,278.3L144.1,277.1L155.6,275.9L167.1,274.9L178.5,274.1L190,273.4L201.5,273L213,272.8L224.5,272.9L236,273.3L247.5,273.8L258.9,274.6L270.4,275.6L281.9,276.8L293.4,278L304.9,279.4L316.4,280.7L327.9,282.2L339.4,283.6L350.8,284.9L362.3,286.3L373.8,287.5L385.3,288.8L396.8,289.9L408.3,291L419.8,292L431.3,292.9L442.7,293.8L454.2,294.6L465.7,295.3L477.2,295.9L488.7,296.5L500.2,297.1L511.7,297.6L523.2,298L534.6,298.4L542.3,298.6M-17.4,291.8L-5.7,291.4L6.1,290.9L17.8,290.3L29.5,289.6L41.2,288.7L52.9,287.7L64.6,286.5L76.3,285.1L88.1,283.5L99.8,281.9L111.5,280.1L123.2,278.2L134.9,276.3L146.6,274.5L158.3,272.8L170.1,271.3L181.8,270L193.5,269.1L205.2,268.6L216.9,268.4L228.6,268.7L240.3,269.3L252,270.3L263.8,271.7L275.5,273.3L287.2,275L298.9,277L310.6,279L322.3,281L334,283L345.8,285L357.5,286.9L369.2,288.7L380.9,290.4L392.6,292L404.3,293.5L416,294.9L427.7,296.2L439.5,297.4L451.2,298.5L462.9,299.5L474.6,300.4L486.3,301.3L498,302L509.7,302.7L521.5,303.3L533.2,303.9L544.9,304.3L556.6,304.8L560.5,304.9M-18,295.5L-6,294.9L5.9,294.2L17.8,293.3L29.8,292.2L41.7,290.8L53.7,289.3L65.6,287.4L77.6,285.3L89.5,283L101.5,280.5L113.4,277.8L125.4,275L137.3,272.1L149.3,269.4L161.2,266.8L173.2,264.6L185.1,262.8L197.1,261.5L209,260.8L221,260.8L232.9,261.5L244.9,262.7L256.8,264.5L268.8,266.7L280.7,269.3L292.7,272L304.6,274.9L316.6,277.8L328.5,280.7L340.4,283.5L352.4,286.2L364.3,288.8L376.3,291.2L388.2,293.4L400.2,295.4L412.1,297.4L424.1,299.1L436,300.7L448,302.2L459.9,303.5L471.9,304.7L483.8,305.8L495.8,306.8L507.7,307.8L519.7,308.6L531.6,309.3L543.6,309.9L555.5,310.5L567.5,311L579.4,311.4M-26.8,300.1L-14.6,299.3L-2.4,298.3L9.8,297.1L22,295.7L34.2,294L46.4,291.9L58.6,289.4L70.8,286.6L83,283.5L95.2,279.9L107.3,276.1L119.5,272L131.7,267.8L143.9,263.6L156.1,259.5L168.3,255.8L180.5,252.7L192.7,250.3L204.9,249L217.1,248.6L229.3,249.3L241.4,251.1L253.6,253.7L265.8,257L278,260.8L290.2,264.9L302.4,269.2L314.6,273.4L326.8,277.5L339,281.5L351.2,285.2L363.4,288.6L375.5,291.8L387.7,294.8L399.9,297.5L412.1,300L424.3,302.2L436.5,304.3L448.7,306.1L460.9,307.8L473.1,309.3L485.3,310.7L497.5,311.9L509.6,313.1L521.8,314.1L534,315L546.2,315.8L558.4,316.5L570.6,317.1L582.8,317.6L590.9,317.9M-15.1,303.6L-2.7,302.2L9.8,300.5L22.2,298.5L34.7,296L47.1,293.1L59.5,289.6L72,285.7L84.4,281.2L96.9,276.1L109.3,270.5L121.8,264.6L134.2,258.3L146.6,252L159.1,245.8L171.5,240.3L184,235.6L196.4,232.3L208.9,230.7L221.3,230.8L233.7,232.6L246.2,236.1L258.6,240.7L271.1,246.3L283.5,252.3L295.9,258.5L308.4,264.7L320.8,270.6L333.3,276.2L345.7,281.4L358.2,286.2L370.6,290.6L383,294.6L395.5,298.1L407.9,301.4L420.4,304.3L432.8,306.9L445.2,309.3L457.7,311.4L470.1,313.3L482.6,315.1L495,316.6L507.5,318L519.9,319.3L532.3,320.4L544.8,321.4L557.2,322.2L569.7,323L582.1,323.7L594.6,324.2L598.7,324.4M-24.1,309.5L-11.4,307.8L1.3,305.7L14,303.3L26.7,300.3L39.4,296.8L52.1,292.6L64.8,287.7L77.5,282L90.2,275.5L102.9,268.2L115.6,260.1L128.3,251.4L141,242.1L153.7,232.8L166.4,223.8L179.1,215.9L191.8,209.8L204.5,206.1L217.2,205.4L229.9,207.6L242.6,212.6L255.3,219.6L268,227.9L280.7,237L293.4,246.1L306.1,255L318.8,263.3L331.6,271L344.3,278L357,284.3L369.7,289.9L382.4,295L395.1,299.5L407.8,303.5L420.5,307.1L433.2,310.3L445.9,313.1L458.6,315.6L471.3,317.9L484,320L496.7,321.8L509.4,323.4L522.1,324.9L534.8,326.2L547.5,327.3L560.2,328.3L572.9,329.2L585.6,330L598.3,330.7L606.8,331M-16.2,313.6L-3.2,311.1L9.8,308.1L22.8,304.5L35.7,300.2L48.7,295.1L61.7,289.1L74.6,282.1L87.6,273.9L100.6,264.6L113.6,254L126.5,242.2L139.5,229.4L152.5,216L165.4,202.7L178.4,190.6L191.4,181L204.4,175.2L217.3,174.2L230.3,177.9L243.3,185.9L256.2,196.9L269.2,209.5L282.2,222.6L295.1,235.4L308.1,247.4L321.1,258.4L334.1,268.2L347,276.9L360,284.6L373,291.4L385.9,297.4L398.9,302.6L411.9,307.2L424.9,311.3L437.8,314.9L450.8,318.1L463.8,321L476.7,323.5L489.7,325.7L502.7,327.8L515.7,329.6L528.6,331.1L541.6,332.6L554.6,333.8L567.5,334.9L580.5,335.9L593.5,336.7L606.5,337.4L610.8,337.7M-25.5,321L-12.2,318.4L1,315.1L14.3,311.2L27.5,306.6L40.8,301L54,294.5L67.3,286.7L80.5,277.6L93.8,267L107,254.8L120.3,240.8L133.5,225L146.8,207.9L160,190L173.3,172.7L186.5,157.7L199.8,147.4L213,143.5L226.2,146.8L239.5,156.6L252.7,171.1L266,188L279.2,205.4L292.5,222.2L305.7,237.7L319,251.6L332.2,263.8L345.5,274.4L358.7,283.7L372,291.8L385.2,298.8L398.5,304.9L411.7,310.2L425,314.9L438.2,319L451.5,322.6L464.7,325.8L478,328.6L491.2,331.2L504.5,333.4L517.7,335.4L531,337.2L544.2,338.7L557.5,340.1L570.7,341.3L584,342.4L597.2,343.4L610.5,344.2L614.9,344.4M-17.1,325.6L-3.6,322L9.9,317.8L23.5,312.8L37,306.8L50.5,299.7L64.1,291.3L77.6,281.4L91.2,269.9L104.7,256.4L118.2,240.9L131.8,223.4L145.3,204L158.8,183.4L172.4,163.2L185.9,145.5L199.5,133.1L213,128.5L226.5,132.5L240.1,144.3L253.6,161.5L267.2,181.2L280.7,201.3L294.2,220.3L307.8,237.6L321.3,252.8L334.8,266.2L348.4,277.7L361.9,287.7L375.5,296.3L389,303.8L402.5,310.2L416.1,315.8L429.6,320.8L443.1,325.1L456.7,328.9L470.2,332.2L483.8,335.2L497.3,337.8L510.8,340.1L524.4,342.2L537.9,344L551.4,345.6L565,347.1L578.5,348.4L592.1,349.5L605.6,350.4L614.6,351M-22.2,333.7L-8.4,330L5.5,325.6L19.3,320.4L33.1,314.3L47,307.1L60.8,298.6L74.6,288.7L88.5,277.2L102.3,263.8L116.1,248.6L130,231.4L143.8,212.5L157.7,192.7L171.5,173.4L185.3,156.6L199.2,144.9L213,140.6L226.8,144.3L240.7,155.4L254.5,171.6L268.3,190.4L282.2,209.7L296,228.1L309.9,245L323.7,260L337.5,273.2L351.4,284.6L365.2,294.5L379,303.2L392.9,310.6L406.7,317.1L420.5,322.8L434.4,327.7L448.2,332.1L462,335.9L475.9,339.3L489.7,342.2L503.6,344.9L517.4,347.3L531.2,349.3L545.1,351.2L558.9,352.9L572.7,354.3L586.6,355.6L600.4,356.7L614.2,357.7M-22.7,341.4L-8.6,337.5L5.5,332.9L19.7,327.6L33.8,321.3L48,314.1L62.1,305.7L76.3,296L90.4,284.9L104.6,272.3L118.7,258.3L132.8,242.9L147,226.7L161.1,210.4L175.3,195.5L189.4,183.5L203.6,176.3L217.7,174.9L231.9,179.7L246,189.7L260.1,203.2L274.3,218.7L288.4,234.5L302.6,249.8L316.7,264L330.9,276.8L345,288.2L359.2,298.2L373.3,307L387.5,314.8L401.6,321.5L415.7,327.4L429.9,332.6L444,337.2L458.2,341.3L472.3,344.8L486.5,348L500.6,350.8L514.8,353.3L528.9,355.6L543,357.6L557.2,359.3L571.3,360.9L585.5,362.3L599.6,363.5L613.8,364.6M-23.3,349.7L-8.8,345.8L5.7,341.3L20.1,336.1L34.6,330.1L49.1,323.2L63.5,315.4L78,306.6L92.5,296.8L106.9,285.9L121.4,274.2L135.9,261.9L150.3,249.6L164.8,237.9L179.2,227.9L193.7,220.5L208.2,216.8L222.6,217.2L237.1,221.6L251.6,229.4L266,239.5L280.5,251L295,262.9L309.4,274.6L323.9,285.7L338.4,296L352.8,305.3L367.3,313.6L381.8,321.1L396.2,327.7L410.7,333.6L425.1,338.8L439.6,343.4L454.1,347.5L468.5,351.1L483,354.4L497.5,357.3L511.9,359.9L526.4,362.2L540.9,364.3L555.3,366.1L569.8,367.7L584.3,369.2L598.7,370.5L613.2,371.6L618,372M-23.7,358.7L-8.9,354.9L5.9,350.7L20.7,345.8L35.5,340.3L50.3,334.2L65,327.4L79.8,319.8L94.6,311.6L109.4,302.9L124.2,293.9L139,284.8L153.8,276L168.6,268.3L183.4,262L198.2,257.9L213,256.2L227.8,257.3L242.6,260.9L257.4,266.6L272.2,273.8L287,282L301.8,290.7L316.6,299.4L331.4,307.7L346.2,315.7L361,323L375.7,329.7L390.5,335.8L405.3,341.3L420.1,346.3L434.9,350.7L449.7,354.7L464.5,358.3L479.3,361.5L494.1,364.4L508.9,367L523.7,369.3L538.5,371.4L553.3,373.2L568.1,374.9L582.9,376.4L597.7,377.7L612.5,378.9L617.4,379.3M-24.2,368.2L-9,364.8L6.1,360.9L21.3,356.6L36.4,351.8L51.5,346.5L66.7,340.8L81.8,334.6L96.9,328.2L112.1,321.5L127.2,314.8L142.4,308.3L157.5,302.4L172.6,297.4L187.8,293.6L202.9,291.4L218,290.8L233.2,292L248.3,294.7L263.5,298.9L278.6,304L293.7,309.9L308.9,316.1L324,322.5L339.1,328.8L354.3,334.8L369.4,340.5L384.6,345.8L399.7,350.7L414.8,355.1L430,359.2L445.1,363L460.2,366.3L475.4,369.4L490.5,372.2L505.7,374.7L520.8,376.9L535.9,379L551.1,380.8L566.2,382.5L581.3,384L596.5,385.3L611.6,386.5L616.7,386.9M-19.4,377.2L-3.9,374.1L11.6,370.6L27.1,366.8L42.6,362.6L58.1,358.2L73.6,353.4L89.1,348.5L104.6,343.5L120,338.6L135.5,333.9L151,329.5L166.5,325.8L182,322.9L197.5,321L213,320.2L228.5,320.5L244,321.9L259.5,324.4L275,327.7L290.5,331.6L306,336L321.4,340.6L336.9,345.2L352.4,349.9L367.9,354.4L383.4,358.7L398.9,362.8L414.4,366.6L429.9,370.1L445.4,373.3L460.9,376.3L476.4,379L491.9,381.5L507.3,383.8L522.8,385.9L538.3,387.8L553.8,389.5L569.3,391L584.8,392.4L600.3,393.6L615.8,394.8M-30.2,389.5L-14.3,386.9L1.6,384.1L17.4,381.1L33.3,377.9L49.1,374.4L65,370.8L80.8,367.1L96.7,363.3L112.6,359.7L128.4,356.1L144.3,352.9L160.1,350.1L176,347.9L191.9,346.3L207.7,345.4L223.6,345.4L239.4,346.1L255.3,347.5L271.1,349.6L287,352.1L302.9,355.1L318.7,358.4L334.6,361.9L350.4,365.4L366.3,368.9L382.2,372.3L398,375.5L413.9,378.7L429.7,381.6L445.6,384.4L461.5,386.9L477.3,389.3L493.2,391.5L509,393.5L524.9,395.3L540.7,397L556.6,398.5L572.5,399.9L588.3,401.2L604.2,402.3L614.7,403M-25.2,399.4L-8.9,397.2L7.3,394.9L23.6,392.3L39.8,389.7L56,386.9L72.3,384.1L88.5,381.3L104.7,378.5L121,375.9L137.2,373.5L153.5,371.4L169.7,369.6L185.9,368.3L202.2,367.5L218.4,367.3L234.7,367.6L250.9,368.4L267.1,369.7L283.4,371.4L299.6,373.4L315.8,375.8L332.1,378.2L348.3,380.9L364.6,383.5L380.8,386.1L397,388.7L413.3,391.2L429.5,393.6L445.7,395.9L462,398.1L478.2,400.1L494.5,401.9L510.7,403.6L526.9,405.2L543.2,406.7L559.4,408L575.7,409.3L591.9,410.4L608.1,411.4L613.5,411.7M-19.8,409.8L-3.2,407.9L13.5,406L30.1,404L46.7,401.9L63.4,399.7L80,397.6L96.6,395.5L113.2,393.6L129.9,391.8L146.5,390.1L163.1,388.8L179.7,387.8L196.4,387.1L213,386.8L229.6,386.9L246.3,387.3L262.9,388.1L279.5,389.3L296.1,390.7L312.8,392.3L329.4,394.1L346,396L362.6,398L379.3,400L395.9,402.1L412.5,404L429.2,405.9L445.8,407.8L462.4,409.5L479,411.2L495.7,412.7L512.3,414.2L528.9,415.5L545.5,416.7L562.2,417.9L578.8,418.9L595.4,419.9L601,420.2M-25.2,421.2L-8.2,419.7L8.8,418.2L25.8,416.7L42.8,415.1L59.9,413.5L76.9,411.9L93.9,410.3L110.9,408.9L127.9,407.6L144.9,406.4L162,405.4L179,404.7L196,404.2L213,404L230,404.1L247,404.5L264,405.1L281.1,405.9L298.1,406.9L315.1,408.2L332.1,409.5L349.1,411L366.1,412.5L383.2,414L400.2,415.6L417.2,417.1L434.2,418.6L451.2,420L468.2,421.4L485.3,422.7L502.3,424L519.3,425.1L536.3,426.2L553.3,427.2L570.3,428.1L581.7,428.6M-30.7,432.2L-13.3,431.1L4.1,429.9L21.5,428.8L38.9,427.6L56.4,426.4L73.8,425.2L91.2,424.1L108.6,423L126,422.1L143.4,421.3L160.8,420.6L178.2,420.1L195.6,419.8L213,419.7L230.4,419.8L247.8,420.1L265.2,420.5L282.6,421.2L300,422L317.4,422.9L334.8,423.9L352.2,425L369.6,426.2L387.1,427.3L404.5,428.5L421.9,429.7L439.3,430.9L456.7,432L474.1,433.1L491.5,434.1L508.9,435L526.3,435.9L543.7,436.7L555.3,437.2M-18.3,442.1L-0.5,441.2L17.3,440.4L35.1,439.5L52.9,438.6L70.6,437.8L88.4,437L106.2,436.3L124,435.6L141.8,435.1L159.6,434.7L177.4,434.3L195.2,434.2L213,434.1L230.8,434.2L248.6,434.5L266.4,434.9L284.2,435.4L302,436L319.8,436.7L337.6,437.5L355.4,438.3L373.1,439.2L390.9,440.1L408.7,441L426.5,441.9L444.3,442.8L462.1,443.6L479.9,444.4L497.7,445.2L515.5,445.9L533.3,446.6L539.2,446.8M-23.4,452.8L-5.2,452.2L13,451.6L31.2,451L49.3,450.4L67.5,449.9L85.7,449.3L103.9,448.9L122.1,448.5L140.3,448.1L158.4,447.9L176.6,447.7L194.8,447.6L213,447.7L231.2,447.8L249.4,448L267.6,448.4L285.7,448.8L303.9,449.3L322.1,449.9L340.3,450.5L358.5,451.1L376.7,451.8L394.8,452.4L413,453.1L431.2,453.8L449.4,454.4L467.6,455L485.8,455.6L503.9,456.1L516.1,456.5M-28.4,463.3L-9.9,462.9L8.7,462.5L27.3,462.1L45.8,461.8L64.4,461.5L83,461.2L101.6,460.9L120.1,460.7L138.7,460.5L157.3,460.4L175.9,460.4L194.4,460.4L213,460.5L231.6,460.7L250.1,460.9L268.7,461.2L287.3,461.6L305.9,462L324.4,462.4L343,462.9L361.6,463.4L380.2,463.9L398.7,464.4L417.3,464.9L435.9,465.3L454.4,465.8L473,466.2L491.6,466.6M-27.2,473.4L-8.2,473.3L10.7,473.1L29.7,472.9L48.7,472.8L67.6,472.7L86.6,472.6L105.6,472.5L124.5,472.5L143.5,472.5L162.4,472.5L181.4,472.6L200.4,472.7L219.3,472.9L238.3,473.1L257.2,473.4L276.2,473.7L295.2,474L314.1,474.3L333.1,474.7L352.1,475.1L371,475.4L390,475.8L408.9,476.1L427.9,476.4L446.9,476.7L465.8,477M-32.1,483.6L-12.8,483.6L6.6,483.6L25.9,483.6L45.3,483.6L64.6,483.7L84,483.7L103.3,483.8L122.7,483.9L142,484L161.4,484.2L180.7,484.4L200.1,484.6L219.5,484.8L238.8,485.1L258.2,485.3L277.5,485.6L296.9,485.9L316.2,486.2L335.6,486.5L354.9,486.7L374.3,487L393.6,487.2L413,487.4L432.3,487.6M38.6,314.1L48.6,308.7L58.6,302.7L68.5,296L78.5,288.5L88.4,280.2L98.4,271L108.4,260.9L118.3,249.9L128.3,238L138.3,225.3L148.2,212.1L158.2,198.7L168.2,185.7L178.1,173.7L188.1,163.6L198.1,156.1L208,152.1L218,151.9L227.9,155.5L237.9,162.5L247.9,172.2L257.8,183.8L267.8,196.4L277.8,209.5L287.7,222.3L297.7,234.7L307.7,246.3L317.6,257.1L327.6,267L337.6,276.1L347.5,284.3L357.5,291.8L367.4,298.5L377.4,304.6L387.4,310.1M29.6,316.8L39.6,311.9L49.5,306.5L59.4,300.4L69.3,293.6L79.2,286L89.1,277.6L99,268.2L108.9,257.9L118.8,246.6L128.8,234.4L138.7,221.3L148.6,207.6L158.5,193.7L168.4,180L178.3,167.4L188.2,156.8L198.1,148.9L208,144.6L218,144.4L227.9,148.2L237.8,155.7L247.7,165.9L257.6,178.1L267.5,191.4L277.4,205L287.3,218.3L297.2,231.1L307.2,243.1L317.1,254.2L327,264.3L336.9,273.5L346.8,281.9L356.7,289.5L366.6,296.3L376.5,302.5L386.4,308.1L396.4,313.1M30.6,314.7L40.5,309.9L50.3,304.4L60.2,298.3L70.1,291.4L79.9,283.8L89.8,275.2L99.6,265.7L109.5,255.3L119.3,243.8L129.2,231.3L139.1,217.9L148.9,203.8L158.8,189.4L168.6,175.3L178.5,162.2L188.4,151.1L198.2,142.9L208.1,138.5L217.9,138.2L227.8,142.3L237.6,150L247.5,160.7L257.4,173.4L267.2,187.1L277.1,201.2L286.9,214.9L296.8,228L306.7,240.3L316.5,251.6L326.4,261.9L336.2,271.2L346.1,279.7L355.9,287.4L365.8,294.3L375.7,300.5L385.5,306.1L395.4,311.2M31.6,312.8L41.4,307.9L51.2,302.4L61,296.3L70.8,289.4L80.6,281.7L90.4,273.1L100.2,263.6L110,253L119.8,241.4L129.7,228.7L139.5,215.1L149.3,200.7L159.1,186.1L168.9,171.6L178.7,158.2L188.5,146.7L198.3,138.3L208.1,133.7L217.9,133.5L227.7,137.7L237.5,145.7L247.3,156.7L257.1,169.7L266.9,183.8L276.7,198.1L286.5,212.2L296.3,225.5L306.2,237.9L316,249.3L325.8,259.8L335.6,269.2L345.4,277.8L355.2,285.5L365,292.4L374.8,298.7L384.6,304.3L394.4,309.4M32.5,310.9L42.3,306.1L52.1,300.6L61.8,294.5L71.6,287.6L81.3,279.9L91.1,271.3L100.8,261.7L110.6,251.1L120.3,239.4L130.1,226.7L139.8,213L149.6,198.5L159.4,183.7L169.1,169.1L178.9,155.4L188.6,143.8L198.4,135.3L208.1,130.6L217.9,130.4L227.6,134.6L237.4,142.8L247.1,154L256.9,167.2L266.6,181.5L276.4,196L286.2,210.1L295.9,223.5L305.7,236L315.4,247.5L325.2,258L334.9,267.5L344.7,276.1L354.4,283.8L364.2,290.7L373.9,297L383.7,302.6L393.5,307.7M33.5,309.2L43.2,304.4L52.9,299L62.6,292.9L72.3,286L82,278.4L91.7,269.8L101.4,260.3L111.1,249.7L120.8,238L130.5,225.3L140.2,211.6L149.9,197.1L159.6,182.3L169.3,167.7L179,154L188.7,142.4L198.4,133.8L208.1,129.2L217.9,128.9L227.6,133.2L237.3,141.4L247,152.6L256.7,165.8L266.4,180.1L276.1,194.6L285.8,208.7L295.5,222.2L305.2,234.7L314.9,246.1L324.6,256.6L334.3,266.1L344,274.6L353.7,282.3L363.4,289.2L373.1,295.5L382.8,301.1L392.5,306.2M34.4,307.6L44.1,302.8L53.7,297.5L63.4,291.4L73,284.6L82.7,277L92.3,268.6L102,259.1L111.7,248.6L121.3,237.1L131,224.5L140.6,210.9L150.3,196.6L159.9,181.9L169.6,167.5L179.2,154L188.9,142.5L198.5,134L208.2,129.4L217.8,129.2L227.5,133.4L237.1,141.5L246.8,152.6L256.4,165.6L266.1,179.8L275.7,194.1L285.4,208.1L295,221.4L304.7,233.8L314.3,245.1L324,255.5L333.7,264.9L343.3,273.4L353,281L362.6,287.9L372.3,294.1L381.9,299.7L391.6,304.7M35.4,306L45,301.4L54.6,296.1L64.2,290.1L73.8,283.4L83.4,276L93,267.6L102.6,258.3L112.2,247.9L121.8,236.6L131.4,224.2L141,210.9L150.6,196.9L160.2,182.5L169.8,168.4L179.4,155.3L189,144.1L198.6,135.8L208.2,131.3L217.8,131.1L227.4,135.2L237,143L246.6,153.8L256.2,166.6L265.8,180.4L275.4,194.4L285,208.1L294.6,221.2L304.2,233.4L313.8,244.6L323.4,254.8L333,264L342.6,272.4L352.2,279.9L361.8,286.7L371.4,292.9L381,298.4L390.6,303.4M36.3,304.6L45.8,300L55.4,294.8L64.9,289L74.5,282.4L84,275.1L93.6,266.9L103.1,257.7L112.7,247.6L122.3,236.6L131.8,224.5L141.4,211.5L150.9,197.9L160.5,184L170,170.4L179.6,157.7L189.1,147L198.7,139L208.2,134.7L217.8,134.5L227.3,138.4L236.9,145.9L246.4,156.3L256,168.6L265.5,181.9L275.1,195.5L284.6,208.8L294.2,221.5L303.7,233.4L313.3,244.3L322.9,254.3L332.4,263.4L342,271.6L351.5,279L361.1,285.7L370.6,291.8L380.2,297.2L389.7,302.1M37.2,303.3L46.7,298.8L56.2,293.7L65.7,288L75.2,281.6L84.7,274.4L94.2,266.4L103.7,257.5L113.2,247.7L122.7,236.9L132.2,225.3L141.7,212.8L151.2,199.7L160.7,186.3L170.2,173.3L179.7,161.2L189.2,151L198.7,143.5L208.2,139.4L217.8,139.2L227.3,142.9L236.8,150L246.3,159.9L255.8,171.6L265.3,184.3L274.8,197.3L284.3,210.1L293.8,222.4L303.3,233.9L312.8,244.5L322.3,254.2L331.8,263.1L341.3,271.1L350.8,278.3L360.3,284.9L369.8,290.8L379.3,296.2L388.8,301M47.5,297.7L57,292.7L66.5,287.2L75.9,280.9L85.4,274L94.8,266.2L104.3,257.6L113.7,248.1L123.2,237.7L132.6,226.5L142.1,214.5L151.5,202L161,189.4L170.5,177L179.9,165.7L189.4,156.1L198.8,149L208.3,145.2L217.7,145L227.2,148.4L236.6,155.1L246.1,164.3L255.5,175.3L265,187.4L274.5,199.7L283.9,211.9L293.4,223.7L302.8,234.7L312.3,244.9L321.7,254.4L331.2,262.9L340.6,270.7L350.1,277.8L359.5,284.2L369,290L378.5,295.2M48.4,296.7L57.8,291.9L67.2,286.5L76.6,280.4L86,273.7L95.4,266.2L104.8,257.9L114.2,248.8L123.6,238.8L133,228.1L142.5,216.7L151.9,204.9L161.3,193L170.7,181.4L180.1,170.8L189.5,161.9L198.9,155.4L208.3,151.8L217.7,151.7L227.1,154.8L236.5,160.9L245.9,169.5L255.3,179.8L264.7,191L274.1,202.6L283.5,214.2L293,225.4L302.4,235.9L311.8,245.7L321.2,254.8L330.6,263L340,270.6L349.4,277.4L358.8,283.7L368.2,289.3L377.6,294.4M49.2,295.8L58.6,291.1L67.9,285.9L77.3,280L86.7,273.5L96,266.3L105.4,258.4L114.7,249.7L124.1,240.2L133.4,230L142.8,219.3L152.2,208.2L161.5,197.1L170.9,186.3L180.2,176.5L189.6,168.3L199,162.3L208.3,159.1L217.7,158.9L227,161.7L236.4,167.4L245.8,175.2L255.1,184.7L264.5,195.1L273.8,206L283.2,216.8L292.6,227.4L301.9,237.4L311.3,246.7L320.6,255.4L330,263.3L339.3,270.6L348.7,277.2L358.1,283.2L367.4,288.7L376.8,293.7M50,294.9L59.4,290.4L68.7,285.4L78,279.8L87.3,273.6L96.6,266.7L105.9,259.1L115.2,250.8L124.5,241.8L133.9,232.3L143.2,222.2L152.5,211.8L161.8,201.5L171.1,191.5L180.4,182.5L189.7,175L199,169.6L208.3,166.6L217.7,166.4L227,169L236.3,174.1L245.6,181.3L254.9,190L264.2,199.6L273.5,209.7L282.8,219.8L292.1,229.7L301.5,239.1L310.8,247.9L320.1,256.2L329.4,263.8L338.7,270.7L348,277.1L357.3,282.9L366.6,288.2L376,293M50.9,294.2L60.1,289.9L69.4,285.1L78.7,279.7L87.9,273.7L97.2,267.2L106.5,259.9L115.7,252.1L125,243.7L134.2,234.7L143.5,225.3L152.8,215.7L162,206.1L171.3,197L180.6,188.8L189.8,182L199.1,177L208.4,174.4L217.6,174.2L226.9,176.5L236.2,181.1L245.4,187.6L254.7,195.5L264,204.3L273.2,213.6L282.5,222.9L291.8,232.1L301,241L310.3,249.3L319.5,257.1L328.8,264.4L338.1,271L347.3,277.1L356.6,282.7L365.9,287.8L375.1,292.5M51.7,293.5L60.9,289.4L70.1,284.8L79.3,279.7L88.5,274L97.8,267.8L107,260.9L116.2,253.5L125.4,245.6L134.6,237.2L143.9,228.5L153.1,219.6L162.3,210.9L171.5,202.6L180.7,195.1L190,188.9L199.2,184.5L208.4,182.1L217.6,181.9L226.8,184L236,188.1L245.3,193.9L254.5,201.1L263.7,209.1L272.9,217.6L282.1,226.2L291.4,234.8L300.6,243L309.8,250.9L319,258.2L328.2,265.1L337.5,271.4L346.7,277.2L355.9,282.6L365.1,287.5L374.3,292M61.6,289L70.8,284.6L80,279.7L89.2,274.3L98.3,268.4L107.5,262L116.7,255.1L125.9,247.7L135,239.9L144.2,231.8L153.4,223.7L162.5,215.7L171.7,208.1L180.9,201.4L190.1,195.8L199.2,191.8L208.4,189.7L217.6,189.5L226.8,191.3L235.9,195L245.1,200.2L254.3,206.6L263.5,213.9L272.6,221.7L281.8,229.6L291,237.5L300.1,245.2L309.3,252.5L318.5,259.4L327.7,265.9L336.8,271.9L346,277.5L355.2,282.6L364.4,287.3M62.4,288.7L71.5,284.5L80.6,279.9L89.8,274.8L98.9,269.2L108,263.2L117.2,256.7L126.3,249.8L135.4,242.6L144.5,235.2L153.7,227.7L162.8,220.4L171.9,213.6L181.1,207.5L190.2,202.5L199.3,198.9L208.4,197L217.6,196.8L226.7,198.4L235.8,201.7L244.9,206.4L254.1,212.1L263.2,218.7L272.3,225.8L281.5,233L290.6,240.3L299.7,247.4L308.8,254.2L318,260.7L327.1,266.8L336.2,272.5L345.4,277.7L354.5,282.6L363.6,287.1M63.1,288.4L72.2,284.4L81.3,280.1L90.4,275.3L99.5,270L108.5,264.4L117.6,258.3L126.7,251.9L135.8,245.3L144.9,238.5L154,231.6L163,225L172.1,218.9L181.2,213.4L190.3,208.9L199.4,205.8L208.5,204L217.5,203.9L226.6,205.3L235.7,208.2L244.8,212.3L253.9,217.5L263,223.4L272,229.8L281.1,236.4L290.2,243.1L299.3,249.6L308.4,256L317.5,262L326.5,267.7L335.6,273.1L344.7,278.1L353.8,282.7L362.9,286.9M63.9,288.1L72.9,284.4L81.9,280.3L91,275.8L100,270.9L109.1,265.6L118.1,260L127.1,254.1L136.2,248L145.2,241.7L154.2,235.5L163.3,229.5L172.3,223.9L181.4,219.1L190.4,215.1L199.4,212.2L208.5,210.7L217.5,210.5L226.6,211.8L235.6,214.3L244.6,218L253.7,222.6L262.7,227.9L271.8,233.7L280.8,239.7L289.8,245.8L298.9,251.9L307.9,257.7L316.9,263.4L326,268.7L335,273.7L344.1,278.4L353.1,282.8L362.1,286.9M73.6,284.4L82.6,280.5L91.6,276.3L100.6,271.8L109.6,266.9L118.6,261.6L127.6,256.2L136.5,250.6L145.5,244.9L154.5,239.2L163.5,233.8L172.5,228.8L181.5,224.4L190.5,220.9L199.5,218.3L208.5,216.9L217.5,216.8L226.5,217.9L235.5,220.1L244.5,223.4L253.5,227.5L262.5,232.3L271.5,237.5L280.5,243L289.5,248.5L298.4,254.1L307.4,259.5L316.4,264.7L325.4,269.7L334.4,274.4L343.4,278.8L352.4,283M74.3,284.5L83.2,280.8L92.2,276.9L101.1,272.6L110.1,268.1L119,263.3L128,258.2L136.9,253.1L145.9,247.9L154.8,242.8L163.8,237.9L172.7,233.4L181.7,229.5L190.6,226.3L199.6,224L208.5,222.8L217.5,222.6L226.4,223.6L235.4,225.6L244.3,228.5L253.3,232.1L262.2,236.4L271.2,241.1L280.1,246.1L289.1,251.1L298,256.2L307,261.2L315.9,266.1L324.9,270.7L333.8,275.1L342.8,279.2L351.7,283.1M83.8,281.1L92.7,277.4L101.7,273.5L110.6,269.3L119.5,264.8L128.4,260.2L137.3,255.5L146.2,250.8L155.1,246.1L164,241.7L172.9,237.7L181.8,234.2L190.7,231.3L199.6,229.3L208.5,228.2L217.5,228.1L226.4,228.9L235.3,230.6L244.2,233.2L253.1,236.5L262,240.3L270.9,244.5L279.8,249L288.7,253.7L297.6,258.3L306.5,262.9L315.4,267.4L324.3,271.7L333.3,275.8L342.2,279.7M84.5,281.4L93.3,278L102.2,274.3L111.1,270.4L119.9,266.3L128.8,262.1L137.6,257.8L146.5,253.5L155.4,249.3L164.2,245.3L173.1,241.7L182,238.5L190.8,236L199.7,234.2L208.6,233.2L217.4,233.1L226.3,233.8L235.2,235.4L244,237.6L252.9,240.6L261.8,244L270.6,247.8L279.5,251.8L288.4,256L297.2,260.3L306.1,264.5L314.9,268.6L323.8,272.6L332.7,276.5L341.5,280.1M85.1,281.7L93.9,278.5L102.7,275.1L111.5,271.5L120.4,267.8L129.2,263.9L138,260L146.8,256.1L155.7,252.3L164.5,248.7L173.3,245.4L182.1,242.6L190.9,240.4L199.8,238.7L208.6,237.9L217.4,237.7L226.2,238.4L235.1,239.7L243.9,241.7L252.7,244.3L261.5,247.4L270.3,250.8L279.2,254.5L288,258.3L296.8,262.2L305.6,266L314.5,269.9L323.3,273.6L332.1,277.1L340.9,280.5M94.5,279L103.2,275.9L112,272.6L120.8,269.1L129.6,265.6L138.4,262L147.1,258.5L155.9,255L164.7,251.8L173.5,248.9L182.3,246.4L191,244.3L199.8,242.9L208.6,242.1L217.4,242L226.2,242.5L235,243.7L243.7,245.5L252.5,247.8L261.3,250.6L270.1,253.6L278.9,257L287.6,260.4L296.4,264L305.2,267.5L314,271L322.8,274.4L331.5,277.7M95,279.5L103.8,276.6L112.5,273.6L121.2,270.4L130,267.2L138.7,263.9L147.5,260.7L156.2,257.6L164.9,254.7L173.7,252L182.4,249.8L191.2,248L199.9,246.7L208.6,246L217.4,245.9L226.1,246.3L234.8,247.4L243.6,249L252.3,251.1L261.1,253.5L269.8,256.3L278.5,259.3L287.3,262.4L296,265.6L304.8,268.9L313.5,272.1L322.2,275.3L331,278.3M104.3,277.3L113,274.5L121.7,271.6L130.4,268.6L139.1,265.7L147.8,262.7L156.5,259.9L165.2,257.3L173.9,255L182.6,252.9L191.3,251.3L200,250.2L208.7,249.5L217.3,249.4L226,249.8L234.7,250.8L243.4,252.2L252.1,254L260.8,256.2L269.5,258.7L278.2,261.4L286.9,264.2L295.6,267.2L304.3,270.2L313,273.1L321.7,276M113.4,275.3L122.1,272.7L130.8,270L139.4,267.3L148.1,264.6L156.7,262.1L165.4,259.7L174,257.6L182.7,255.8L191.4,254.3L200,253.3L208.7,252.7L217.3,252.6L226,253L234.6,253.8L243.3,255.1L252,256.7L260.6,258.7L269.3,260.9L277.9,263.4L286.6,266L295.2,268.6L303.9,271.3L312.6,274.1M113.9,276.1L122.5,273.7L131.1,271.2L139.8,268.8L148.4,266.4L157,264.1L165.6,261.9L174.2,260L182.8,258.4L191.5,257.1L200.1,256.2L208.7,255.7L217.3,255.6L225.9,255.9L234.5,256.6L243.2,257.7L251.8,259.2L260.4,261L269,263L277.6,265.2L286.2,267.5L294.9,270L303.5,272.4L312.1,274.9M122.9,274.6L131.5,272.3L140.1,270.1L148.7,267.9L157.2,265.9L165.8,263.9L174.4,262.2L183,260.8L191.6,259.6L200.1,258.8L208.7,258.3L217.3,258.2L225.9,258.5L234.4,259.1L243,260.1L251.6,261.4L260.2,263L268.8,264.8L277.3,266.8L285.9,269L294.5,271.2L303.1,273.4M131.9,273.3L140.4,271.3L149,269.3L157.5,267.5L166,265.7L174.6,264.2L183.1,262.9L191.7,261.8L200.2,261.1L208.7,260.7L217.3,260.6L225.8,260.8L234.3,261.4L242.9,262.3L251.4,263.5L260,264.9L268.5,266.5L277,268.3L285.6,270.3L294.1,272.3M140.8,272.4L149.3,270.6L157.8,268.9L166.3,267.4L174.8,266L183.3,264.8L191.8,263.8L200.3,263.2L208.8,262.8L217.2,262.7L225.7,262.9L234.2,263.4L242.7,264.2L251.2,265.3L259.7,266.6L268.2,268L276.7,269.7L285.2,271.4M158,270.2L166.5,268.8L174.9,267.6L183.4,266.5L191.9,265.7L200.3,265L208.8,264.7L217.2,264.6L225.7,264.8L234.1,265.3L242.6,266L251.1,266.9L259.5,268.1L268,269.4M166.7,270.1L175.1,269L183.5,268L191.9,267.3L200.4,266.7L208.8,266.4L217.2,266.3L225.6,266.5L234.1,266.9L242.5,267.6L250.9,268.4L259.3,269.4M192,268.7L200.4,268.2L208.8,267.9L217.2,267.8L225.6,268L234,268.4M34.8,317.3L36.4,313.7L37.9,310.3L39.4,307.3L40.9,304.6L42.4,302.2L43.8,300.2L45.2,298.3L46.6,296.8L48,295.4M44.1,312.5L45.6,308.8L47,305.5L48.5,302.5L49.9,299.9L51.2,297.6L52.6,295.7L53.9,294L55.2,292.7L56.5,291.6L57.8,290.7L59.1,290.1M53.3,307.3L54.7,303.5L56,300.1L57.4,297.2L58.7,294.6L60,292.4L61.3,290.7L62.6,289.3L63.8,288.2L65,287.4L66.2,286.8L67.4,286.4L68.6,286.2L69.7,286.1M62.3,301.6L63.7,297.7L65,294.2L66.2,291.3L67.5,288.8L68.7,286.8L69.9,285.2L71.1,284.1L72.3,283.3L73.4,282.8L74.6,282.5L75.7,282.5L76.8,282.6L77.9,282.8L78.9,283.1M71.3,295.4L72.6,291.3L73.8,287.8L75,284.8L76.2,282.4L77.3,280.5L78.5,279.2L79.6,278.3L80.7,277.9L81.8,277.7L82.8,277.9L83.9,278.3L84.9,278.8L85.9,279.3L86.9,280L87.9,280.6M80.2,288.6L81.4,284.4L82.5,280.7L83.7,277.7L84.8,275.4L85.9,273.7L86.9,272.6L88,272.1L89,272L90,272.3L91,272.9L92,273.7L93,274.6L93.9,275.6L94.9,276.7L95.8,277.6L96.7,278.6M89,281.3L90.1,276.8L91.2,273.1L92.2,270L93.3,267.8L94.3,266.3L95.3,265.5L96.3,265.3L97.2,265.6L98.2,266.4L99.1,267.5L100,268.8L100.9,270.2L101.8,271.7L102.7,273.2L103.5,274.6L104.4,275.9L105.2,277M97.7,273.4L98.7,268.7L99.7,264.7L100.7,261.7L101.7,259.5L102.6,258.2L103.5,257.7L104.5,258L105.3,258.8L106.2,260.1L107.1,261.7L107.9,263.6L108.8,265.6L109.6,267.6L110.4,269.5L111.2,271.4L112,273.1L112.8,274.6L113.6,275.9M106.3,265L107.3,259.9L108.2,255.8L109.1,252.6L110,250.6L110.8,249.5L111.7,249.4L112.5,250.1L113.4,251.5L114.2,253.4L115,255.7L115.8,258.2L116.6,260.8L117.3,263.3L118.1,265.8L118.8,268.1L119.5,270.2L120.3,272.1L121,273.8M114.8,256L115.7,250.5L116.5,246.2L117.3,243L118.2,241L119,240.2L119.7,240.5L120.5,241.7L121.3,243.8L122,246.4L122.8,249.3L123.5,252.5L124.2,255.7L124.9,258.9L125.6,262L126.3,264.8L127,267.3L127.6,269.6L128.3,271.6L128.9,273.3M123.2,246.6L123.9,240.6L124.7,236L125.5,232.7L126.2,230.8L127,230.3L127.7,231.1L128.4,232.9L129.1,235.7L129.8,239L130.5,242.8L131.1,246.7L131.8,250.6L132.4,254.5L133,258.1L133.7,261.4L134.3,264.5L134.9,267.1L135.5,269.5L136.1,271.5M131.4,236.8L132.1,230.3L132.8,225.3L133.5,221.8L134.2,220L134.8,219.9L135.5,221.2L136.1,223.7L136.8,227.3L137.4,231.4L138,236L138.6,240.8L139.2,245.5L139.8,250L140.4,254.2L140.9,258.1L141.5,261.6L142,264.7L142.6,267.4L143.1,269.8L143.6,271.7M139.5,226.7L140.1,219.6L140.8,214.1L141.4,210.5L142,208.9L142.6,209.1L143.2,211L143.8,214.3L144.3,218.7L144.9,223.8L145.4,229.3L146,234.9L146.5,240.4L147.1,245.6L147.6,250.5L148.1,254.9L148.6,258.9L149.1,262.4L149.6,265.4L150,268.1L150.5,270.3M147.4,216.5L148,208.7L148.6,202.8L149.1,199L149.7,197.5L150.2,198L150.7,200.6L151.2,204.7L151.8,210L152.3,216.1L152.7,222.6L153.2,229.1L153.7,235.4L154.2,241.3L154.6,246.8L155.1,251.8L155.5,256.3L156,260.2L156.4,263.6L156.9,266.5L157.3,268.9M155.2,206.4L155.7,197.9L156.2,191.5L156.7,187.5L157.2,186L157.7,187L158.1,190.2L158.6,195.3L159,201.6L159.5,208.6L159.9,216.1L160.3,223.5L160.8,230.6L161.2,237.3L161.6,243.4L162,248.9L162.4,253.8L162.8,258.1L163.1,261.8L163.5,265L163.9,267.7L164.3,269.9M162.8,196.6L163.3,187.4L163.7,180.4L164.1,176.2L164.5,174.8L165,176.3L165.4,180.2L165.8,186.1L166.1,193.4L166.5,201.5L166.9,209.9L167.3,218.2L167.6,226.2L168,233.5L168.4,240.3L168.7,246.3L169,251.6L169.4,256.2L169.7,260.2L170,263.7L170.4,266.6L170.7,269M170.3,187.5L170.6,177.5L171,170L171.4,165.5L171.7,164.2L172.1,166.1L172.4,170.7L172.7,177.5L173.1,185.8L173.4,194.9L173.7,204.3L174,213.5L174.4,222.1L174.7,230.2L175,237.4L175.3,243.9L175.6,249.6L175.8,254.6L176.1,258.9L176.4,262.5L176.7,265.6L176.9,268.1M177.5,179.3L177.8,168.5L178.1,160.5L178.4,155.7L178.7,154.6L179,156.8L179.3,162.2L179.5,169.8L179.8,179L180.1,189.1L180.4,199.3L180.6,209.2L180.9,218.6L181.1,227.2L181.4,235L181.6,241.9L181.9,247.9L182.1,253.1L182.4,257.7L182.6,261.5L182.8,264.7L183,267.4M184.5,172.2L184.7,160.8L185,152.2L185.2,147.3L185.4,146.2L185.7,148.8L185.9,154.7L186.1,163.1L186.3,173.2L186.6,184.1L186.8,195L187,205.7L187.2,215.6L187.4,224.8L187.6,232.9L187.8,240.2L188,246.5L188.2,252L188.4,256.7L188.6,260.7L188.7,264L188.9,266.8M191.2,166.4L191.4,154.4L191.5,145.5L191.7,140.4L191.9,139.3L192.1,142.3L192.3,148.7L192.4,157.8L192.6,168.5L192.8,180L192.9,191.7L193.1,202.9L193.3,213.3L193.4,222.8L193.6,231.3L193.7,238.8L193.9,245.4L194,251L194.2,255.9L194.3,260L194.4,263.5L194.6,266.4L194.7,268.8M197.5,162.2L197.7,149.7L197.8,140.5L197.9,135.2L198.1,134.2L198.2,137.4L198.3,144.2L198.4,153.7L198.6,165L198.7,177.1L198.8,189.2L198.9,200.8L199,211.6L199.1,221.4L199.2,230.1L199.3,237.8L199.5,244.5L199.6,250.3L199.7,255.3L199.8,259.5L199.9,263.1L200,266L200.1,268.5M203.5,159.3L203.6,146.6L203.7,137.2L203.7,131.8L203.8,130.8L203.9,134.2L204,141.2L204,151.1L204.1,162.7L204.2,175.1L204.3,187.5L204.3,199.4L204.4,210.4L204.5,220.4L204.5,229.3L204.6,237.2L204.7,244L204.7,249.9L204.8,254.9L204.9,259.2L204.9,262.8L205,265.8L205,268.3M208.9,157.9L208.9,145L208.9,135.5L209,130L209,129L209,132.5L209.1,139.7L209.1,149.7L209.1,161.5L209.2,174.1L209.2,186.6L209.2,198.7L209.3,209.8L209.3,219.9L209.3,228.9L209.3,236.8L209.4,243.7L209.4,249.6L209.4,254.7L209.5,259L209.5,262.7L209.5,265.7L209.5,268.2M213,157.5L213,144.6L213,135L213,129.5L213,128.6L213,132L213,139.3L213,149.3L213,161.2L213,173.8L213,186.4L213,198.5L213,209.6L213,219.7L213,228.8L213,236.7L213,243.6L213,249.5L213,254.6L213,258.9L213,262.6L213,265.6L213,268.1M217.1,157.7L217.1,144.8L217.1,135.3L217,129.8L217,128.9L217,132.3L216.9,139.5L216.9,149.6L216.9,161.4L216.8,173.9L216.8,186.5L216.8,198.5L216.7,209.7L216.7,219.8L216.7,228.8L216.7,236.7L216.6,243.6L216.6,249.5L216.6,254.6L216.5,258.9L216.5,262.6L216.5,265.6L216.5,268.1M222.5,158.9L222.4,146.2L222.3,136.8L222.3,131.4L222.2,130.4L222.1,133.8L222,140.9L222,150.7L221.9,162.4L221.8,174.8L221.7,187.2L221.7,199.1L221.6,210.1L221.5,220.1L221.5,229.1L221.4,236.9L221.3,243.8L221.3,249.7L221.2,254.7L221.1,259L221.1,262.7L221,265.7L221,268.2M228.5,161.5L228.3,149.1L228.2,139.8L228.1,134.5L227.9,133.5L227.8,136.7L227.7,143.6L227.6,153.1L227.4,164.4L227.3,176.5L227.2,188.6L227.1,200.3L227,211.1L226.9,220.9L226.8,229.7L226.7,237.4L226.5,244.2L226.4,250L226.3,255L226.2,259.2L226.1,262.8L226,265.8L225.9,268.3M234.8,165.5L234.6,153.5L234.5,144.6L234.3,139.4L234.1,138.4L233.9,141.4L233.7,147.8L233.6,156.9L233.4,167.7L233.2,179.3L233.1,190.9L232.9,202.1L232.7,212.6L232.6,222.2L232.4,230.7L232.3,238.3L232.1,244.8L232,250.6L231.8,255.4L231.7,259.6L231.6,263.1L231.4,266.1L231.3,268.5M241.5,170.9L241.3,159.5L241,151L240.8,146.1L240.6,145L240.3,147.7L240.1,153.6L239.9,162.1L239.7,172.1L239.4,183L239.2,194.1L239,204.8L238.8,214.8L238.6,223.9L238.4,232.2L238.2,239.4L238,245.8L237.8,251.3L237.6,256.1L237.4,260.2L237.3,263.6L237.1,266.4M248.5,177.7L248.2,167L247.9,159L247.6,154.3L247.3,153.1L247,155.4L246.7,160.8L246.5,168.5L246.2,177.7L245.9,187.8L245.6,198.1L245.4,208.1L245.1,217.5L244.9,226.2L244.6,234L244.4,241L244.1,247.1L243.9,252.4L243.6,257L243.4,260.9L243.2,264.2L243,266.9M255.7,185.7L255.4,175.7L255,168.2L254.6,163.7L254.3,162.5L253.9,164.4L253.6,169.1L253.3,175.9L252.9,184.3L252.6,193.5L252.3,202.9L252,212.1L251.6,220.9L251.3,229L251,236.3L250.7,242.9L250.4,248.6L250.2,253.7L249.9,258L249.6,261.8L249.3,264.9L249.1,267.6M263.2,194.5L262.7,185.3L262.3,178.4L261.9,174.1L261.5,172.8L261,174.3L260.6,178.3L260.2,184.3L259.9,191.6L259.5,199.8L259.1,208.3L258.7,216.7L258.4,224.7L258,232.2L257.6,239L257.3,245.1L257,250.5L256.6,255.2L256.3,259.3L256,262.8L255.6,265.8L255.3,268.3M270.8,204L270.3,195.5L269.8,189.1L269.3,185.2L268.8,183.7L268.3,184.8L267.9,188.1L267.4,193.2L267,199.6L266.5,206.7L266.1,214.2L265.7,221.7L265.2,229L264.8,235.7L264.4,242L264,247.6L263.6,252.6L263.2,257L262.9,260.8L262.5,264.1L262.1,266.9L261.7,269.2M278.6,213.8L278,206.1L277.4,200.2L276.9,196.4L276.3,194.9L275.8,195.6L275.3,198.2L274.8,202.4L274.2,207.8L273.7,214L273.3,220.5L272.8,227.1L272.3,233.6L271.8,239.6L271.4,245.3L270.9,250.4L270.5,254.9L270,258.9L269.6,262.4L269.1,265.5L268.7,268M286.5,223.7L285.9,216.7L285.2,211.3L284.6,207.7L284,206.1L283.4,206.4L282.8,208.4L282.2,211.8L281.7,216.3L281.1,221.5L280.6,227.1L280,232.8L279.5,238.4L278.9,243.8L278.4,248.8L277.9,253.3L277.4,257.4L276.9,261.1L276.4,264.3L276,267L275.5,269.3M294.6,233.5L293.9,227.1L293.2,222.1L292.5,218.8L291.8,217L291.2,217L290.5,218.4L289.9,221L289.2,224.7L288.6,229L288,233.7L287.4,238.6L286.8,243.4L286.2,248.1L285.6,252.4L285.1,256.5L284.5,260.1L284,263.3L283.4,266.2L282.9,268.6L282.4,270.7M302.8,243.1L302.1,237.2L301.3,232.6L300.5,229.4L299.8,227.6L299,227.2L298.3,228.1L297.6,230.1L296.9,232.9L296.2,236.4L295.5,240.3L294.9,244.4L294.2,248.5L293.6,252.4L293,256.2L292.3,259.7L291.7,262.9L291.1,265.7L290.5,268.2L289.9,270.4M311.2,252.4L310.3,246.9L309.5,242.6L308.7,239.5L307.8,237.6L307,236.9L306.3,237.4L305.5,238.8L304.7,240.9L304,243.7L303.2,246.8L302.5,250.1L301.8,253.5L301.1,256.8L300.4,260L299.7,263L299,265.7L298.4,268.2L297.7,270.3L297.1,272.2M319.7,261.1L318.7,256.1L317.8,252.1L316.9,249L316,247.1L315.2,246.1L314.3,246.2L313.5,247L312.6,248.6L311.8,250.6L311,253.1L310.2,255.7L309.4,258.5L308.7,261.2L307.9,263.9L307.2,266.4L306.5,268.6L305.7,270.7L305,272.5M328.3,269.4L327.3,264.7L326.3,260.9L325.3,258L324.3,255.9L323.4,254.8L322.5,254.4L321.5,254.8L320.7,255.8L319.8,257.3L318.9,259.1L318.1,261.2L317.2,263.3L316.4,265.5L315.6,267.7L314.8,269.7L314,271.5L313.2,273.2L312.4,274.7M337,277.2L335.9,272.8L334.8,269.1L333.8,266.2L332.7,264.1L331.7,262.8L330.7,262.1L329.7,262.1L328.8,262.6L327.8,263.6L326.9,264.9L326,266.4L325.1,268L324.2,269.7L323.3,271.4L322.5,273L321.6,274.4L320.8,275.8M345.8,284.4L344.6,280.3L343.5,276.7L342.3,273.9L341.2,271.7L340.1,270.2L339.1,269.3L338,268.9L337,269L336,269.6L335,270.4L334,271.4L333,272.5L332.1,273.7L331.1,275L330.2,276.2L329.3,277.3M354.7,291.1L353.4,287.2L352.2,283.8L351,281L349.8,278.7L348.7,277.1L347.5,275.9L346.4,275.3L345.3,275L344.2,275.1L343.2,275.5L342.1,276.1L341.1,276.8L340.1,277.6L339.1,278.5L338.1,279.3M363.7,297.3L362.3,293.6L361,290.3L359.8,287.5L358.5,285.2L357.3,283.4L356.1,282L354.9,281.1L353.7,280.6L352.6,280.3L351.4,280.3L350.3,280.5L349.2,280.9L348.1,281.3L347.1,281.8M372.7,303.1L371.3,299.5L370,296.2L368.6,293.5L367.3,291.1L366,289.2L364.7,287.7L363.4,286.5L362.2,285.7L361,285.2L359.8,284.9L358.6,284.7L357.4,284.7L356.3,284.8M381.9,308.4L380.4,304.9L379,301.7L377.5,299L376.1,296.6L374.8,294.5L373.4,292.9L372.1,291.5L370.8,290.5L369.5,289.7L368.2,289.1L366.9,288.7M391.2,313.3L389.6,309.9L388.1,306.8L386.6,304L385.1,301.6L383.6,299.4L382.2,297.6L380.8,296.1L379.4,294.9L378,293.8M424.6,490.2L436.9,487L448.6,483.6L460,480.1L470.8,476.5L481.2,472.9L491.2,469.2L500.6,465.4L509.6,461.7L518.1,457.9L526.1,454L533.6,450.2L540.9,446.5L548.3,443L555.9,439.6L563.5,436.5L571.3,433.4L578.8,430.4L586.1,427.4L593.2,424.4L599.8,421.4L605.7,418.2L610.4,414.9L613.9,411.4L616.5,407.8L618.2,404.2L619.3,400.6L620,396.9L620.2,393.3L620.1,389.8L620,386.3L619.8,382.9L619.6,379.5L619.2,376.2L618.8,372.9L618.4,369.7L618,366.4L617.6,363.3L617.3,360.1L617.1,356.9L617,353.8L616.9,350.6L616.7,347.4L616.1,344.2L615.1,340.9L613.7,337.5L611.8,334.2L609.3,330.8L606.1,327.4L602.1,324L597.2,320.7L591.6,317.4L585.5,314.3L579,311.1L572,308.1L564.6,305.2L556.8,302.4L548.8,299.7L540.7,297.1L532.4,294.5L524,292.1L515.5,289.9L506.8,287.7L498,285.7L489.1,283.8L480.1,282.1L471,280.4L461.8,279L452.6,277.6L443.4,276.3L434.2,275.2L425.1,274.1L416,273.1L406.8,272.3L397.7,271.5L388.7,270.8L379.6,270.2L370.6,269.6L361.7,269.1L352.7,268.7L343.8,268.3L334.9,267.9L326.1,267.6L317.3,267.3L308.6,267.1L299.9,266.9L291.2,266.7L282.5,266.5L273.9,266.4L265.4,266.3L256.9,266.2L248.4,266.1L240,266L231.7,265.9L223.4,265.7L215.1,265.5L206.8,265.2L198.4,265L190,264.6L181.5,264.3L172.8,263.9L164.1,263.5L155.3,263.1L146.4,262.8L137.4,262.5L128.2,262.1L118.8,261.8L109.2,261.4L99.4,261L89.4,260.7L79.1,260.3L68.5,259.9L57.6,259.6L46.5,259.3L35.3,259.3L24.1,259.4L12.8,259.7L1.6,260.2L-9.5,260.9L-20.6,261.7M-16,273L3.4,274.8L21.5,278L38.3,282.7L53.8,288.8L68.1,296.3L81.1,305.3L92.8,315.7L103.3,327.5L112.4,340.8L120.3,355.6L127,371.7L132.3,389.3L136.4,408.4L139.2,428.9L140.7,450.8L141,474.2L140,499M-16,281L2.7,282.8L20.1,285.9L36.3,290.4L51.2,296.3L65,303.6L77.5,312.3L88.7,322.3L98.8,333.8L107.6,346.6L115.2,360.8L121.5,376.4L126.6,393.4L130.5,411.7L133.2,431.5L134.6,452.6L134.8,475.1L133.8,499M-16,289.5L1.9,291.2L18.6,294.2L34.1,298.6L48.5,304.3L61.6,311.3L73.6,319.7L84.4,329.4L94,340.4L102.4,352.7L109.7,366.3L115.7,381.3L120.6,397.6L124.3,415.2L126.8,434.2L128.1,454.5L128.2,476.1L127.1,499M-16,298.5L1.1,300.2L17.1,303.1L31.9,307.3L45.6,312.8L58.1,319.6L69.5,327.6L79.8,336.8L89,347.4L97,359.2L103.8,372.2L109.6,386.5L114.2,402.1L117.6,419L120,437.1L121.2,456.5L121.2,477.1L120.1,499M-16,308L0.2,309.7L15.4,312.5L29.5,316.6L42.5,321.8L54.4,328.3L65.2,335.9L75,344.7L83.6,354.8L91.2,366L97.7,378.4L103.1,392.1L107.4,406.9L110.6,422.9L112.8,440.2L113.8,458.6L113.8,478.2L112.7,499M-16,318.1L-0.7,319.7L13.7,322.5L27,326.3L39.2,331.4L50.4,337.5L60.6,344.7L69.8,353.1L77.9,362.6L85,373.3L91.1,385.1L96.2,397.9L100.2,412L103.2,427.1L105.1,443.4L106.1,460.8L106,479.3L104.8,499M-16,328.8L-1.6,330.4L11.8,333L24.3,336.7L35.7,341.5L46.2,347.3L55.8,354.1L64.3,362L71.9,371L78.5,381L84.2,392.1L88.9,404.2L92.6,417.3L95.3,431.6L97,446.8L97.8,463.2L97.6,480.6L96.5,499M-16,340.2L-2.6,341.7L9.9,344.2L21.4,347.7L32.1,352.2L41.8,357.6L50.6,364L58.5,371.4L65.6,379.8L71.7,389.2L76.8,399.5L81.1,410.8L84.5,423L86.9,436.3L88.5,450.5L89.1,465.7L88.8,481.9L87.6,499M-16,352.2L-3.7,353.7L7.8,356.1L18.4,359.4L28.2,363.5L37.1,368.6L45.2,374.6L52.4,381.4L58.8,389.2L64.3,397.8L69,407.3L72.9,417.8L75.9,429.1L78.1,441.3L79.4,454.4L79.8,468.4L79.5,483.2L78.2,499M-16,364.9L-4.8,366.4L5.6,368.7L15.2,371.7L24,375.6L32.1,380.3L39.4,385.7L45.9,392L51.6,399.1L56.6,407L60.8,415.7L64.2,425.2L66.8,435.5L68.7,446.6L69.7,458.5L70,471.2L69.6,484.7L68.3,499M-16,378.4L-6,379.9L3.2,382L11.8,384.8L19.7,388.4L26.8,392.6L33.3,397.6L39,403.2L44.1,409.6L48.4,416.7L52,424.5L55,433L57.2,442.3L58.7,452.2L59.5,462.8L59.6,474.2L59,486.2L57.8,499M-16,392.4L-7.3,393.8L0.8,395.8L8.3,398.4L15.1,401.6L21.3,405.4L26.9,409.8L31.9,414.9L36.2,420.5L39.9,426.8L43,433.7L45.4,441.2L47.2,449.3L48.4,458L48.9,467.3L48.9,477.3L48.2,487.8L46.8,499M-16,406.4L-8.5,407.8L-1.6,409.6L4.8,411.9L10.6,414.8L15.9,418.2L20.6,422.1L24.7,426.5L28.3,431.4L31.4,436.9L33.9,442.8L35.8,449.3L37.2,456.3L38.1,463.8L38.4,471.8L38.1,480.4L37.3,489.4M-16,420.4L-9.8,421.7L-4,423.4L1.3,425.5L6.1,428L10.4,431L14.2,434.3L17.6,438.1L20.5,442.3L22.9,446.9L24.8,452L26.3,457.4L27.3,463.3L27.8,469.6L27.8,476.3L27.3,483.5L26.4,491M-16,434.4L-11,435.7L-6.4,437.2L-2.3,439.1L1.5,441.3L4.9,443.8L7.9,446.6L10.4,449.8L12.6,453.2L14.4,457L15.8,461.1L16.7,465.6L17.3,470.3L17.4,475.4L17.2,480.8L16.6,486.6L15.5,492.6M-16,448.4L-12.3,449.6L-8.9,451L-5.8,452.6L-3,454.5L-0.6,456.6L1.5,458.9L3.3,461.4L4.8,464.1L5.9,467.1L6.7,470.3L7.2,473.7L7.3,477.4L7.1,481.2L6.6,485.3L5.8,489.7"/><path d="M196.6,139L195.6,140.2L189.3,146.8L184.6,153.4L180.5,160L177.2,166.6L174.2,173.2L171.4,179.8L168.9,186.4L166.9,193L165.2,199.6L163.6,206.2L162.3,212.8L161.1,219.4L159.9,226L158.9,232.6L158,239.2L157.1,245.8L156.2,252.4L155.2,259L154.3,265.6L153.3,272.2L152.3,278.8L151.2,285.4L150.1,292L149,298.6L147.7,305.2L146.4,311.8L144.8,318.4L143,325L141,331.6L138.7,338.2L136.2,344.8L133.7,351.4L130.8,358L127.4,364.6L123.6,371.2L119.4,377.8L114.8,384.4L110.1,391L105.1,397.6L99.9,404.2L94.4,410.8L88.6,417.4L82.6,424L76.6,430.6L70.6,437.2L64.2,443.8L57.1,450.4L49.2,457L40.1,463.6L29.8,470.2L18.4,476.8L8.9,483.4L1.5,490M197.6,138.4L196.1,140.2L190,146.8L185.4,153.4L181.4,160L178.3,166.6L175.3,173.2L172.6,179.8L170.3,186.4L168.3,193L166.6,199.6L165.1,206.2L163.9,212.8L162.7,219.4L161.7,226L160.7,232.6L159.8,239.2L159,245.8L158.1,252.4L157.2,259L156.3,265.6L155.4,272.2L154.4,278.8L153.5,285.4L152.4,292L151.3,298.6L150.1,305.2L148.8,311.8L147.3,318.4L145.5,325L143.6,331.6L141.4,338.2L139,344.8L136.6,351.4L133.8,358L130.5,364.6L126.9,371.2L122.9,377.8L118.5,384.4L113.9,391L109.2,397.6L104.1,404.2L98.9,410.8L93.3,417.4L87.6,424L81.9,430.6L76.1,437.2L70,443.8L63.1,450.4L55.5,457L46.6,463.6L36.5,470.2L25.4,476.8L16.2,483.4L9,490M198.7,137.7L196.6,140.2L190.7,146.8L186.3,153.4L182.5,160L179.4,166.6L176.6,173.2L174,179.8L171.8,186.4L169.9,193L168.3,199.6L166.9,206.2L165.7,212.8L164.6,219.4L163.6,226L162.7,232.6L161.9,239.2L161.1,245.8L160.3,252.4L159.5,259L158.6,265.6L157.8,272.2L156.9,278.8L155.9,285.4L155,292L153.9,298.6L152.8,305.2L151.6,311.8L150.1,318.4L148.4,325L146.5,331.6L144.4,338.2L142.1,344.8L139.8,351.4L137.1,358L134.1,364.6L130.6,371.2L126.8,377.8L122.6,384.4L118.3,391L113.7,397.6L109,404.2L104,410.8L98.7,417.4L93.3,424L87.9,430.6L82.4,437.2L76.5,443.8L69.9,450.4L62.5,457L54,463.6L44.2,470.2L33.4,476.8L24.4,483.4L17.4,490M199.8,136.9L197.3,140.2L191.6,146.8L187.3,153.4L183.7,160L180.7,166.6L178,173.2L175.5,179.8L173.4,186.4L171.7,193L170.1,199.6L168.8,206.2L167.7,212.8L166.7,219.4L165.8,226L165,232.6L164.2,239.2L163.5,245.8L162.7,252.4L162,259L161.2,265.6L160.4,272.2L159.6,278.8L158.7,285.4L157.8,292L156.8,298.6L155.8,305.2L154.6,311.8L153.2,318.4L151.6,325L149.8,331.6L147.8,338.2L145.6,344.8L143.5,351.4L140.9,358L138,364.6L134.7,371.2L131.1,377.8L127.2,384.4L123.1,391L118.8,397.6L114.3,404.2L109.6,410.8L104.7,417.4L99.6,424L94.5,430.6L89.3,437.2L83.8,443.8L77.4,450.4L70.4,457L62.1,463.6L52.7,470.2L42.2,476.8L33.6,483.4L26.7,490M200.9,136.1L197.9,140.2L192.5,146.8L188.4,153.4L185,160L182.2,166.6L179.6,173.2L177.2,179.8L175.2,186.4L173.6,193L172.2,199.6L170.9,206.2L169.9,212.8L169,219.4L168.2,226L167.4,232.6L166.7,239.2L166.1,245.8L165.4,252.4L164.7,259L164,265.6L163.3,272.2L162.6,278.8L161.8,285.4L160.9,292L160,298.6L159,305.2L157.9,311.8L156.6,318.4L155.1,325L153.4,331.6L151.5,338.2L149.5,344.8L147.4,351.4L145.1,358L142.3,364.6L139.3,371.2L135.9,377.8L132.2,384.4L128.4,391L124.4,397.6L120.2,404.2L115.8,410.8L111.2,417.4L106.6,424L101.8,430.6L96.9,437.2L91.7,443.8L85.7,450.4L79,457L71.1,463.6L62,470.2L51.9,476.8L43.6,483.4L37,490M202,135.3L198.7,140.2L193.5,146.8L189.6,153.4L186.4,160L183.7,166.6L181.3,173.2L179.1,179.8L177.2,186.4L175.7,193L174.4,199.6L173.3,206.2L172.3,212.8L171.5,219.4L170.8,226L170.1,232.6L169.5,239.2L168.9,245.8L168.3,252.4L167.7,259L167.1,265.6L166.5,272.2L165.8,278.8L165.1,285.4L164.3,292L163.5,298.6L162.6,305.2L161.6,311.8L160.4,318.4L158.9,325L157.3,331.6L155.6,338.2L153.7,344.8L151.8,351.4L149.6,358L147,364.6L144.2,371.2L141.1,377.8L137.7,384.4L134.2,391L130.5,397.6L126.6,404.2L122.6,410.8L118.4,417.4L114.1,424L109.7,430.6L105.3,437.2L100.4,443.8L94.8,450.4L88.4,457L80.8,463.6L72.2,470.2L62.5,476.8L54.5,483.4L48.2,490M203.2,134.5L199.4,140.2L194.6,146.8L191,153.4L187.9,160L185.4,166.6L183.1,173.2L181,179.8L179.3,186.4L178,193L176.8,199.6L175.8,206.2L174.9,212.8L174.2,219.4L173.6,226L173,232.6L172.5,239.2L172,245.8L171.5,252.4L171,259L170.4,265.6L169.9,272.2L169.3,278.8L168.7,285.4L168,292L167.2,298.6L166.4,305.2L165.5,311.8L164.4,318.4L163.1,325L161.6,331.6L159.9,338.2L158.2,344.8L156.4,351.4L154.4,358L152.1,364.6L149.5,371.2L146.7,377.8L143.6,384.4L140.4,391L137.1,397.6L133.5,404.2L129.9,410.8L126.1,417.4L122.2,424L118.3,430.6L114.2,437.2L109.8,443.8L104.5,450.4L98.5,457L91.3,463.6L83.1,470.2L73.9,476.8L66.3,483.4L60.3,490M204.3,133.6L200.3,140.2L195.8,146.8L192.4,153.4L189.5,160L187.2,166.6L185.1,173.2L183.2,179.8L181.6,186.4L180.4,193L179.3,199.6L178.4,206.2L177.7,212.8L177.1,219.4L176.6,226L176.1,232.6L175.7,239.2L175.3,245.8L174.8,252.4L174.4,259L174,265.6L173.5,272.2L173,278.8L172.5,285.4L171.9,292L171.2,298.6L170.5,305.2L169.7,311.8L168.6,318.4L167.4,325L166.1,331.6L164.6,338.2L163,344.8L161.4,351.4L159.6,358L157.5,364.6L155.2,371.2L152.7,377.8L149.9,384.4L147.1,391L144.1,397.6L140.9,404.2L137.7,410.8L134.3,417.4L130.9,424L127.4,430.6L123.8,437.2L119.8,443.8L114.9,450.4L109.3,457L102.6,463.6L94.8,470.2L86.1,476.8L78.9,483.4L73.1,490M205.7,132.8L204.9,133.6L201.2,140.2L197,146.8L193.9,153.4L191.2,160L189.1,166.6L187.1,173.2L185.4,179.8L184,186.4L182.9,193L182,199.6L181.2,206.2L180.7,212.8L180.2,219.4L179.7,226L179.3,232.6L179,239.2L178.7,245.8L178.4,252.4L178.1,259L177.7,265.6L177.3,272.2L177,278.8L176.5,285.4L176,292L175.4,298.6L174.8,305.2L174.1,311.8L173.2,318.4L172.1,325L170.9,331.6L169.5,338.2L168.1,344.8L166.7,351.4L165.1,358L163.2,364.6L161.2,371.2L159,377.8L156.6,384.4L154.1,391L151.5,397.6L148.7,404.2L145.9,410.8L143,417.4L140.1,424L137.1,430.6L133.9,437.2L130.3,443.8L125.9,450.4L120.7,457L114.5,463.6L107.2,470.2L99,476.8L92.2,483.4L86.8,490M207.1,132L205.5,133.6L202.1,140.2L198.3,146.8L195.4,153.4L193,160L191.1,166.6L189.3,173.2L187.8,179.8L186.6,186.4L185.6,193L184.8,199.6L184.2,206.2L183.8,212.8L183.4,219.4L183.1,226L182.8,232.6L182.6,239.2L182.4,245.8L182.2,252.4L181.9,259L181.7,265.6L181.4,272.2L181.1,278.8L180.8,285.4L180.4,292L179.9,298.6L179.4,305.2L178.8,311.8L178,318.4L177,325L175.9,331.6L174.7,338.2L173.5,344.8L172.3,351.4L170.9,358L169.3,364.6L167.5,371.2L165.7,377.8L163.6,384.4L161.5,391L159.4,397.6L157,404.2L154.6,410.8L152.2,417.4L149.8,424L147.3,430.6L144.6,437.2L141.5,443.8L137.5,450.4L132.8,457L127,463.6L120.2,470.2L112.6,476.8L106.3,483.4L101.2,490M208.2,131.3L206.1,133.6L203.1,140.2L199.7,146.8L197.1,153.4L194.9,160L193.2,166.6L191.6,173.2L190.3,179.8L189.2,186.4L188.4,193L187.8,199.6L187.3,206.2L187,212.8L186.8,219.4L186.6,226L186.4,232.6L186.3,239.2L186.2,245.8L186.1,252.4L186,259L185.8,265.6L185.7,272.2L185.5,278.8L185.2,285.4L184.9,292L184.6,298.6L184.2,305.2L183.7,311.8L183,318.4L182.2,325L181.2,331.6L180.2,338.2L179.1,344.8L178.1,351.4L177,358L175.6,364.6L174.2,371.2L172.7,377.8L171,384.4L169.3,391L167.6,397.6L165.6,404.2L163.7,410.8L161.8,417.4L159.9,424L157.9,430.6L155.8,437.2L153.2,443.8L149.7,450.4L145.4,457L140.2,463.6L133.9,470.2L126.9,476.8L121,483.4L116.3,490M209.2,130.5L206.8,133.6L204.1,140.2L201.1,146.8L198.8,153.4L196.9,160L195.3,166.6L194,173.2L192.9,179.8L192,186.4L191.4,193L190.9,199.6L190.6,206.2L190.4,212.8L190.3,219.4L190.2,226L190.2,232.6L190.2,239.2L190.2,245.8L190.2,252.4L190.2,259L190.1,265.6L190.1,272.2L190,278.8L189.9,285.4L189.7,292L189.5,298.6L189.2,305.2L188.8,311.8L188.2,318.4L187.5,325L186.7,331.6L185.9,338.2L184.9,344.8L184.2,351.4L183.3,358L182.2,364.6L181.1,371.2L179.9,377.8L178.7,384.4L177.4,391L176.1,397.6L174.6,404.2L173.2,410.8L171.8,417.4L170.5,424L169.1,430.6L167.5,437.2L165.4,443.8L162.4,450.4L158.6,457L153.8,463.6L148.2,470.2L141.7,476.8L136.3,483.4L132,490M210,129.9L207.5,133.6L205.2,140.2L202.5,146.8L200.6,153.4L198.9,160L197.6,166.6L196.5,173.2L195.5,179.8L194.9,186.4L194.4,193L194.1,199.6L194,206.2L193.9,212.8L193.9,219.4L194,226L194.1,232.6L194.2,239.2L194.3,245.8L194.4,252.4L194.5,259L194.6,265.6L194.7,272.2L194.7,278.8L194.7,285.4L194.6,292L194.5,298.6L194.3,305.2L194.1,311.8L193.6,318.4L193.1,325L192.4,331.6L191.7,338.2L191,344.8L190.5,351.4L189.8,358L189,364.6L188.3,371.2L187.5,377.8L186.6,384.4L185.8,391L184.9,397.6L183.9,404.2L183,410.8L182.2,417.4L181.4,424L180.6,430.6L179.5,437.2L178,443.8L175.5,450.4L172.2,457L168,463.6L162.9,470.2L157.1,476.8L152.2,483.4L148.2,490M210.7,129.3L208.2,133.6L206.3,140.2L204.1,146.8L202.4,153.4L201,160L199.9,166.6L199,173.2L198.3,179.8L197.8,186.4L197.6,193L197.4,199.6L197.4,206.2L197.5,212.8L197.7,219.4L197.8,226L198.1,232.6L198.3,239.2L198.5,245.8L198.8,252.4L199,259L199.2,265.6L199.4,272.2L199.5,278.8L199.7,285.4L199.7,292L199.7,298.6L199.6,305.2L199.5,311.8L199.2,318.4L198.8,325L198.3,331.6L197.8,338.2L197.3,344.8L197,351.4L196.6,358L196.1,364.6L195.6,371.2L195.2,377.8L194.8,384.4L194.4,391L194,397.6L193.5,404.2L193.1,410.8L192.8,417.4L192.7,424L192.4,430.6L192,437.2L190.9,443.8L189,450.4L186.2,457L182.6,463.6L178.1,470.2L172.9,476.8L168.5,483.4L164.9,490M211.1,128.9L209,133.6L207.4,140.2L205.6,146.8L204.3,153.4L203.1,160L202.3,166.6L201.6,173.2L201.1,179.8L200.8,186.4L200.8,193L200.8,199.6L201,206.2L201.2,212.8L201.5,219.4L201.8,226L202.2,232.6L202.5,239.2L202.9,245.8L203.3,252.4L203.6,259L203.9,265.6L204.2,272.2L204.5,278.8L204.7,285.4L204.9,292L205,298.6L205.1,305.2L205,311.8L204.9,318.4L204.6,325L204.3,331.6L204,338.2L203.7,344.8L203.6,351.4L203.5,358L203.3,364.6L203.2,371.2L203.2,377.8L203.2,384.4L203.2,391L203.4,397.6L203.3,404.2L203.5,410.8L203.8,417.4L204.2,424L204.5,430.6L204.7,437.2L204.2,443.8L202.8,450.4L200.5,457L197.5,463.6L193.6,470.2L189,476.8L185.2,483.4L182,490M211.5,128.5L209.7,133.6L208.5,140.2L207.2,146.8L206.2,153.4L205.3,160L204.7,166.6L204.3,173.2L204,179.8L203.9,186.4L204,193L204.3,199.6L204.6,206.2L205,212.8L205.4,219.4L205.9,226L206.3,232.6L206.8,239.2L207.3,245.8L207.8,252.4L208.3,259L208.7,265.6L209.1,272.2L209.5,278.8L209.9,285.4L210.2,292L210.4,298.6L210.6,305.2L210.7,311.8L210.7,318.4L210.6,325L210.4,331.6L210.3,338.2L210.2,344.8L210.3,351.4L210.5,358L210.6,364.6L210.9,371.2L211.3,377.8L211.7,384.4L212.2,391L212.8,397.6L213.3,404.2L214,410.8L214.9,417.4L216,424L216.9,430.6L217.6,437.2L217.7,443.8L216.9,450.4L215.2,457L212.7,463.6L209.4,470.2L205.5,476.8L202.2,483.4L199.5,490M211.7,128.2L210.5,133.6L209.7,140.2L208.8,146.8L208.1,153.4L207.5,160L207.2,166.6L207,173.2L206.9,179.8L207,186.4L207.4,193L207.7,199.6L208.2,206.2L208.8,212.8L209.4,219.4L210,226L210.6,232.6L211.2,239.2L211.8,245.8L212.4,252.4L213,259L213.6,265.6L214.1,272.2L214.7,278.8L215.1,285.4L215.6,292L215.9,298.6L216.2,305.2L216.5,311.8L216.6,318.4L216.6,325L216.6,331.6L216.7,338.2L216.8,344.8L217.2,351.4L217.6,358L218,364.6L218.7,371.2L219.5,377.8L220.3,384.4L221.4,391L222.5,397.6L223.5,404.2L224.7,410.8L226.2,417.4L227.9,424L229.4,430.6L230.8,437.2L231.4,443.8L231.1,450.4L230,457L228.1,463.6L225.5,470.2L222.3,476.8L219.5,483.4L217.2,490M211.9,128.1L211.2,133.6L210.8,140.2L210.4,146.8L210,153.4L209.8,160L209.7,166.6L209.7,173.2L209.8,179.8L210.2,186.4L210.7,193L211.3,199.6L211.9,206.2L212.6,212.8L213.4,219.4L214.1,226L214.8,232.6L215.6,239.2L216.3,245.8L217.1,252.4L217.8,259L218.5,265.6L219.2,272.2L219.8,278.8L220.4,285.4L221,292L221.4,298.6L221.9,305.2L222.3,311.8L222.5,318.4L222.7,325L222.9,331.6L223.2,338.2L223.5,344.8L224.1,351.4L224.8,358L225.5,364.6L226.5,371.2L227.8,377.8L229.1,384.4L230.6,391L232.2,397.6L233.7,404.2L235.5,410.8L237.6,417.4L239.9,424L242.1,430.6L244,437.2L245.3,443.8L245.6,450.4L245,457L243.7,463.6L241.7,470.2L239.2,476.8L236.9,483.4L235,490M212,128L212,133.6L212,140.2L212,146.8L212,153.4L212,160L212.2,166.6L212.4,173.2L212.8,179.8L213.4,186.4L214.1,193L214.8,199.6L215.6,206.2L216.5,212.8L217.4,219.4L218.3,226L219.1,232.6L220,239.2L220.9,245.8L221.8,252.4L222.6,259L223.4,265.6L224.2,272.2L225,278.8L225.7,285.4L226.4,292L227,298.6L227.6,305.2L228.1,311.8L228.5,318.4L228.8,325L229.2,331.6L229.7,338.2L230.2,344.8L231.1,351.4L232,358L233.1,364.6L234.4,371.2L236.1,377.8L237.9,384.4L239.8,391L242,397.6L244,404.2L246.4,410.8L249,417.4L252,424L254.8,430.6L257.4,437.2L259.2,443.8L260,450.4L260,457L259.3,463.6L258,470.2L256.1,476.8L254.4,483.4L253,490M212.1,128.1L212.8,133.6L213.2,140.2L213.6,146.8L214,153.4L214.3,160L214.7,166.6L215.2,173.2L215.8,179.8L216.5,186.4L217.4,193L218.4,199.6L219.3,206.2L220.4,212.8L221.4,219.4L222.4,226L223.4,232.6L224.5,239.2L225.5,245.8L226.4,252.4L227.4,259L228.4,265.6L229.3,272.2L230.2,278.8L231.1,285.4L231.9,292L232.6,298.6L233.3,305.2L233.9,311.8L234.4,318.4L234.9,325L235.5,331.6L236.1,338.2L236.9,344.8L238,351.4L239.3,358L240.6,364.6L242.3,371.2L244.4,377.8L246.6,384.4L249.1,391L251.7,397.6L254.3,404.2L257.2,410.8L260.5,417.4L264.1,424L267.5,430.6L270.7,437.2L273.1,443.8L274.5,450.4L275,457L275,463.6L274.3,470.2L273.1,476.8L272,483.4L270.9,490M212.3,128.2L213.5,133.6L214.3,140.2L215.2,146.8L215.9,153.4L216.5,160L217.1,166.6L217.9,173.2L218.7,179.8L219.7,186.4L220.8,193L221.9,199.6L223,206.2L224.2,212.8L225.4,219.4L226.6,226L227.7,232.6L228.9,239.2L230,245.8L231.1,252.4L232.2,259L233.3,265.6L234.4,272.2L235.4,278.8L236.4,285.4L237.3,292L238.1,298.6L238.9,305.2L239.7,311.8L240.4,318.4L241,325L241.8,331.6L242.6,338.2L243.5,344.8L244.9,351.4L246.5,358L248.1,364.6L250.2,371.2L252.7,377.8L255.4,384.4L258.3,391L261.5,397.6L264.5,404.2L268,410.8L271.9,417.4L276.1,424L280.2,430.6L284,437.2L287,443.8L288.9,450.4L290,457L290.5,463.6L290.5,470.2L290,476.8L289.4,483.4L288.8,490M212.5,128.5L214.3,133.6L215.5,140.2L216.8,146.8L217.8,153.4L218.7,160L219.6,166.6L220.6,173.2L221.6,179.8L222.8,186.4L224.1,193L225.4,199.6L226.7,206.2L228,212.8L229.4,219.4L230.7,226L232,232.6L233.2,239.2L234.5,245.8L235.7,252.4L236.9,259L238.2,265.6L239.3,272.2L240.5,278.8L241.6,285.4L242.6,292L243.6,298.6L244.6,305.2L245.5,311.8L246.3,318.4L247.1,325L248,331.6L249,338.2L250.2,344.8L251.8,351.4L253.6,358L255.6,364.6L258,371.2L260.9,377.8L264,384.4L267.4,391L271.1,397.6L274.7,404.2L278.7,410.8L283.2,417.4L288,424L292.7,430.6L297.1,437.2L300.7,443.8L303.2,450.4L304.9,457L306,463.6L306.6,470.2L306.7,476.8L306.7,483.4L306.5,490M212.9,128.9L215,133.6L216.6,140.2L218.4,146.8L219.7,153.4L220.9,160L222,166.6L223.2,173.2L224.5,179.8L225.9,186.4L227.4,193L228.8,199.6L230.3,206.2L231.8,212.8L233.3,219.4L234.7,226L236.1,232.6L237.5,239.2L238.9,245.8L240.3,252.4L241.6,259L243,265.6L244.3,272.2L245.5,278.8L246.8,285.4L247.9,292L249,298.6L250.1,305.2L251.1,311.8L252.1,318.4L253,325L254.1,331.6L255.3,338.2L256.7,344.8L258.5,351.4L260.6,358L262.9,364.6L265.7,371.2L269,377.8L272.6,384.4L276.5,391L280.6,397.6L284.7,404.2L289.2,410.8L294.3,417.4L299.8,424L305.1,430.6L310.1,437.2L314.2,443.8L317.3,450.4L319.5,457L321.2,463.6L322.4,470.2L323.2,476.8L323.7,483.4L323.9,490M213.3,129.3L215.8,133.6L217.7,140.2L219.9,146.8L221.6,153.4L223.1,160L224.4,166.6L225.8,173.2L227.3,179.8L228.9,186.4L230.6,193L232.2,199.6L233.9,206.2L235.5,212.8L237.1,219.4L238.7,226L240.2,232.6L241.8,239.2L243.2,245.8L244.7,252.4L246.2,259L247.7,265.6L249.1,272.2L250.5,278.8L251.8,285.4L253.1,292L254.3,298.6L255.5,305.2L256.7,311.8L257.8,318.4L258.9,325L260.1,331.6L261.5,338.2L263.1,344.8L265.2,351.4L267.5,358L270.1,364.6L273.2,371.2L277,377.8L280.9,384.4L285.3,391L289.9,397.6L294.5,404.2L299.6,410.8L305.2,417.4L311.3,424L317.2,430.6L322.8,437.2L327.5,443.8L331.1,450.4L333.8,457L336.1,463.6L337.9,470.2L339.4,476.8L340.4,483.4L341.1,490M214,129.9L216.5,133.6L218.8,140.2L221.5,146.8L223.4,153.4L225.2,160L226.7,166.6L228.4,173.2L230.1,179.8L231.9,186.4L233.7,193L235.5,199.6L237.3,206.2L239.1,212.8L240.9,219.4L242.6,226L244.2,232.6L245.9,239.2L247.5,245.8L249.1,252.4L250.7,259L252.3,265.6L253.8,272.2L255.3,278.8L256.8,285.4L258.2,292L259.5,298.6L260.8,305.2L262.1,311.8L263.3,318.4L264.6,325L266,331.6L267.6,338.2L269.3,344.8L271.6,351.4L274.3,358L277.1,364.6L280.6,371.2L284.7,377.8L289.1,384.4L293.9,391L299,397.6L304.1,404.2L309.7,410.8L315.9,417.4L322.6,424L329,430.6L335.2,437.2L340.5,443.8L344.6,450.4L347.8,457L350.7,463.6L353.1,470.2L355.2,476.8L356.7,483.4L357.8,490M214.8,130.5L217.2,133.6L219.9,140.2L222.9,146.8L225.2,153.4L227.2,160L229,166.6L230.8,173.2L232.8,179.8L234.7,186.4L236.7,193L238.7,199.6L240.7,206.2L242.6,212.8L244.5,219.4L246.3,226L248.1,232.6L249.9,239.2L251.6,245.8L253.3,252.4L255,259L256.7,265.6L258.4,272.2L260,278.8L261.6,285.4L263.1,292L264.6,298.6L266,305.2L267.4,311.8L268.7,318.4L270.1,325L271.7,331.6L273.4,338.2L275.4,344.8L277.9,351.4L280.8,358L283.9,364.6L287.8,371.2L292.2,377.8L297.1,384.4L302.3,391L307.8,397.6L313.4,404.2L319.5,410.8L326.3,417.4L333.5,424L340.5,430.6L347.3,437.2L353.1,443.8L357.7,450.4L361.5,457L364.8,463.6L367.8,470.2L370.5,476.8L372.6,483.4L374,490M215.8,131.3L217.9,133.6L220.9,140.2L224.3,146.8L226.9,153.4L229.2,160L231.2,166.6L233.2,173.2L235.3,179.8L237.5,186.4L239.7,193L241.8,199.6L243.9,206.2L246,212.8L248,219.4L250,226L251.9,232.6L253.8,239.2L255.6,245.8L257.4,252.4L259.2,259L261.1,265.6L262.8,272.2L264.6,278.8L266.2,285.4L267.9,292L269.4,298.6L271,305.2L272.5,311.8L273.9,318.4L275.5,325L277.2,331.6L279.1,338.2L281.3,344.8L284,351.4L287.1,358L290.5,364.6L294.7,371.2L299.5,377.8L304.7,384.4L310.4,391L316.4,397.6L322.4,404.2L329,410.8L336.3,417.4L344.1,424L351.7,430.6L358.9,437.2L365.2,443.8L370.4,450.4L374.6,457L378.5,463.6L382.1,470.2L385.4,476.8L387.9,483.4L389.7,490M216.9,132L218.5,133.6L221.9,140.2L225.7,146.8L228.6,153.4L231,160L233.3,166.6L235.5,173.2L237.8,179.8L240.2,186.4L242.5,193L244.8,199.6L247,206.2L249.2,212.8L251.4,219.4L253.5,226L255.5,232.6L257.5,239.2L259.4,245.8L261.4,252.4L263.3,259L265.2,265.6L267.1,272.2L268.9,278.8L270.7,285.4L272.4,292L274.1,298.6L275.8,305.2L277.4,311.8L278.9,318.4L280.6,325L282.5,331.6L284.6,338.2L286.9,344.8L289.8,351.4L293.2,358L296.9,364.6L301.3,371.2L306.5,377.8L312.1,384.4L318.2,391L324.6,397.6L331,404.2L338.1,410.8L345.9,417.4L354.2,424L362.3,430.6L370.1,437.2L376.9,443.8L382.6,450.4L387.2,457L391.6,463.6L395.8,470.2L399.6,476.8L402.6,483.4L404.8,490M218.3,132.8L219.1,133.6L222.8,140.2L227,146.8L230.1,153.4L232.8,160L235.3,166.6L237.7,173.2L240.2,179.8L242.7,186.4L245.2,193L247.6,199.6L250,206.2L252.3,212.8L254.6,219.4L256.8,226L258.9,232.6L261,239.2L263.1,245.8L265.1,252.4L267.1,259L269.2,265.6L271.2,272.2L273.1,278.8L275,285.4L276.8,292L278.6,298.6L280.3,305.2L282.1,311.8L283.7,318.4L285.5,325L287.5,331.6L289.8,338.2L292.3,344.8L295.4,351.4L299,358L302.9,364.6L307.7,371.2L313.2,377.8L319.2,384.4L325.6,391L332.4,397.6L339.2,404.2L346.8,410.8L355.1,417.4L363.9,424L372.5,430.6L380.8,437.2L388.1,443.8L394.2,450.4L399.3,457L404.2,463.6L408.8,470.2L413.2,476.8L416.7,483.4L419.2,490M219.7,133.6L223.7,140.2L228.2,146.8L231.6,153.4L234.6,160L237.2,166.6L239.8,173.2L242.5,179.8L245.1,186.4L247.8,193L250.3,199.6L252.9,206.2L255.3,212.8L257.7,219.4L260,226L262.2,232.6L264.4,239.2L266.5,245.8L268.7,252.4L270.8,259L272.9,265.6L275,272.2L277,278.8L279,285.4L281,292L282.8,298.6L284.7,305.2L286.5,311.8L288.3,318.4L290.2,325L292.3,331.6L294.7,338.2L297.4,344.8L300.7,351.4L304.5,358L308.7,364.6L313.7,371.2L319.5,377.8L325.8,384.4L332.6,391L339.8,397.6L347.1,404.2L355.1,410.8L363.8,417.4L373.1,424L382.2,430.6L391,437.2L398.7,443.8L405.2,450.4L410.8,457L416.1,463.6L421.2,470.2L426.1,476.8L430,483.4L432.8,490M220.8,134.5L224.6,140.2L229.4,146.8L233,153.4L236.2,160L238.9,166.6L241.7,173.2L244.6,179.8L247.4,186.4L250.2,193L252.9,199.6L255.5,206.2L258.1,212.8L260.6,219.4L263,226L265.3,232.6L267.6,239.2L269.8,245.8L272,252.4L274.3,259L276.5,265.6L278.6,272.2L280.8,278.8L282.8,285.4L284.9,292L286.8,298.6L288.8,305.2L290.7,311.8L292.6,318.4L294.6,325L296.8,331.6L299.4,338.2L302.2,344.8L305.7,351.4L309.7,358L314.1,364.6L319.4,371.2L325.5,377.8L332.1,384.4L339.3,391L346.9,397.6L354.5,404.2L362.8,410.8L372,417.4L381.8,424L391.3,430.6L400.6,437.2L408.7,443.8L415.6,450.4L421.6,457L427.3,463.6L432.9,470.2L438.3,476.8L442.6,483.4L445.7,490M222,135.3L225.3,140.2L230.5,146.8L234.4,153.4L237.7,160L240.6,166.6L243.6,173.2L246.6,179.8L249.5,186.4L252.4,193L255.3,199.6L258,206.2L260.7,212.8L263.3,219.4L265.8,226L268.2,232.6L270.6,239.2L272.9,245.8L275.2,252.4L277.5,259L279.8,265.6L282,272.2L284.3,278.8L286.4,285.4L288.5,292L290.6,298.6L292.6,305.2L294.6,311.8L296.6,318.4L298.7,325L301.1,331.6L303.7,338.2L306.7,344.8L310.3,351.4L314.5,358L319.1,364.6L324.7,371.2L331.1,377.8L338,384.4L345.5,391L353.4,397.6L361.4,404.2L370.1,410.8L379.7,417.4L389.9,424L399.9,430.6L409.5,437.2L418,443.8L425.3,450.4L431.7,457L437.8,463.6L443.8,470.2L449.7,476.8L454.4,483.4L457.8,490M223.1,136.1L226.1,140.2L231.5,146.8L235.6,153.4L239.1,160L242.2,166.6L245.3,173.2L248.4,179.8L251.5,186.4L254.5,193L257.5,199.6L260.3,206.2L263.1,212.8L265.8,219.4L268.4,226L270.9,232.6L273.3,239.2L275.7,245.8L278.1,252.4L280.5,259L282.9,265.6L285.2,272.2L287.5,278.8L289.7,285.4L291.9,292L294,298.6L296.1,305.2L298.2,311.8L300.3,318.4L302.5,325L305,331.6L307.8,338.2L310.9,344.8L314.7,351.4L319,358L323.8,364.6L329.6,371.2L336.3,377.8L343.5,384.4L351.3,391L359.5,397.6L367.8,404.2L376.9,410.8L386.9,417.4L397.5,424L407.8,430.6L417.8,437.2L426.7,443.8L434.3,450.4L441,457L447.6,463.6L454,470.2L460.3,476.8L465.3,483.4L468.9,490M224.2,136.9L226.7,140.2L232.4,146.8L236.7,153.4L240.4,160L243.6,166.6L246.8,173.2L250.1,179.8L253.3,186.4L256.4,193L259.5,199.6L262.5,206.2L265.3,212.8L268.1,219.4L270.7,226L273.3,232.6L275.9,239.2L278.3,245.8L280.8,252.4L283.2,259L285.7,265.6L288.1,272.2L290.5,278.8L292.8,285.4L295,292L297.2,298.6L299.4,305.2L301.6,311.8L303.7,318.4L306,325L308.6,331.6L311.5,338.2L314.7,344.8L318.7,351.4L323.2,358L328.2,364.6L334.1,371.2L341.1,377.8L348.5,384.4L356.6,391L365.1,397.6L373.7,404.2L383.1,410.8L393.4,417.4L404.4,424L415.1,430.6L425.5,437.2L434.6,443.8L442.6,450.4L449.7,457L456.5,463.6L463.3,470.2L470,476.8L475.3,483.4L479.2,490M225.3,137.7L227.4,140.2L233.3,146.8L237.7,153.4L241.5,160L244.9,166.6L248.3,173.2L251.6,179.8L255,186.4L258.2,193L261.3,199.6L264.4,206.2L267.3,212.8L270.2,219.4L272.9,226L275.6,232.6L278.2,239.2L280.7,245.8L283.2,252.4L285.7,259L288.3,265.6L290.7,272.2L293.2,278.8L295.5,285.4L297.9,292L300.1,298.6L302.4,305.2L304.6,311.8L306.8,318.4L309.2,325L311.9,331.6L314.9,338.2L318.2,344.8L322.3,351.4L326.9,358L332.1,364.6L338.2,371.2L345.4,377.8L353.1,384.4L361.4,391L370.2,397.6L379,404.2L388.8,410.8L399.4,417.4L410.7,424L421.7,430.6L432.4,437.2L441.9,443.8L450.2,450.4L457.5,457L464.7,463.6L471.8,470.2L478.9,476.8L484.4,483.4L488.6,490M226.4,138.4L227.9,140.2L234,146.8L238.6,153.4L242.6,160L246.1,166.6L249.5,173.2L253,179.8L256.4,186.4L259.8,193L263,199.6L266.1,206.2L269.1,212.8L272,219.4L274.9,226L277.6,232.6L280.2,239.2L282.8,245.8L285.4,252.4L288,259L290.6,265.6L293.1,272.2L295.6,278.8L298,285.4L300.4,292L302.7,298.6L305,305.2L307.3,311.8L309.6,318.4L312.1,325L314.8,331.6L317.9,338.2L321.3,344.8L325.5,351.4L330.3,358L335.6,364.6L342,371.2L349.3,377.8L357.2,384.4L365.7,391L374.8,397.6L383.9,404.2L393.9,410.8L404.8,417.4L416.4,424L427.7,430.6L438.7,437.2L448.4,443.8L457,450.4L464.6,457L472,463.6L479.5,470.2L486.8,476.8L492.7,483.4L497,490M227.4,139L228.4,140.2L234.7,146.8L239.4,153.4L243.5,160L247.1,166.6L250.7,173.2L254.3,179.8L257.8,186.4L261.2,193L264.5,199.6L267.7,206.2L270.7,212.8L273.7,219.4L276.6,226L279.4,232.6L282.1,239.2L284.7,245.8L287.4,252.4L290,259L292.6,265.6L295.2,272.2L297.8,278.8L300.2,285.4L302.7,292L305,298.6L307.4,305.2L309.8,311.8L312.1,318.4L314.6,325L317.5,331.6L320.6,338.2L324.1,344.8L328.4,351.4L333.3,358L338.8,364.6L345.2,371.2L352.8,377.8L360.9,384.4L369.6,391L378.8,397.6L388.1,404.2L398.4,410.8L409.5,417.4L421.4,424L433,430.6L444.2,437.2L454.2,443.8L463,450.4L470.8,457L478.5,463.6L486.2,470.2L493.9,476.8L499.9,483.4L504.5,490M197.1,138.7L195.8,140.2L189.6,146.8L184.9,153.4L181,160L177.7,166.6L174.7,173.2L171.9,179.8L169.6,186.4L167.6,193L165.9,199.6L164.3,206.2L163,212.8M198.1,138L196.4,140.2L190.3,146.8L185.8,153.4L182,160L178.8,166.6L175.9,173.2L173.3,179.8L171,186.4L169.1,193L167.4,199.6L166,206.2L164.8,212.8L163.6,219.4M199.2,137.3L196.9,140.2L191.2,146.8L186.8,153.4L183.1,160L180.1,166.6L177.3,173.2L174.7,179.8L172.6,186.4L170.8,193L169.2,199.6L167.8,206.2L166.7,212.8L165.6,219.4L164.7,226M200.3,136.5L197.6,140.2L192,146.8L187.9,153.4L184.3,160L181.4,166.6L178.8,173.2L176.3,179.8L174.3,186.4L172.6,193L171.1,199.6L169.9,206.2L168.8,212.8L167.8,219.4L167,226L166.2,232.6M201.5,135.7L198.3,140.2L193,146.8L189,153.4L185.6,160L182.9,166.6L180.4,173.2L178.1,179.8L176.2,186.4L174.6,193L173.3,199.6L172.1,206.2L171.1,212.8L170.2,219.4L169.5,226L168.7,232.6L168.1,239.2M202.6,134.9L199,140.2L194.1,146.8L190.3,153.4L187.1,160L184.5,166.6L182.2,173.2L180,179.8L178.2,186.4L176.8,193L175.6,199.6L174.5,206.2L173.6,212.8L172.8,219.4L172.1,226L171.5,232.6L171,239.2L170.4,245.8M203.7,134L199.9,140.2L195.2,146.8L191.7,153.4L188.7,160L186.3,166.6L184.1,173.2L182.1,179.8L180.4,186.4L179.1,193L178,199.6L177.1,206.2L176.3,212.8L175.6,219.4L175,226L174.5,232.6L174,239.2L173.6,245.8M205,133.2L204.6,133.6L200.7,140.2L196.4,146.8L193.1,153.4L190.3,160L188.1,166.6L186.1,173.2L184.3,179.8L182.8,186.4L181.6,193L180.6,199.6L179.8,206.2L179.2,212.8L178.6,219.4L178.1,226L177.7,232.6L177.3,239.2L177,245.8L176.6,252.4M206.4,132.4L205.2,133.6L201.6,140.2L197.6,146.8L194.6,153.4L192.1,160L190.1,166.6L188.2,173.2L186.6,179.8L185.3,186.4L184.3,193L183.4,199.6L182.7,206.2L182.2,212.8L181.8,219.4L181.4,226L181,232.6L180.8,239.2L180.5,245.8L180.3,252.4L180,259M207.7,131.6L205.8,133.6L202.6,140.2L199,146.8L196.2,153.4L193.9,160L192.1,166.6L190.5,173.2L189,179.8L187.9,186.4L187,193L186.3,199.6L185.8,206.2L185.4,212.8L185.1,219.4L184.8,226L184.6,232.6L184.4,239.2L184.3,245.8L184.1,252.4L183.9,259L183.7,265.6M208.7,130.9L206.5,133.6L203.6,140.2L200.4,146.8L197.9,153.4L195.9,160L194.2,166.6L192.8,173.2L191.6,179.8L190.6,186.4L189.9,193L189.4,199.6L189,206.2L188.7,212.8L188.5,219.4L188.4,226L188.3,232.6L188.2,239.2L188.2,245.8L188.1,252.4L188.1,259L188,265.6M209.6,130.2L207.2,133.6L204.6,140.2L201.8,146.8L199.7,153.4L197.9,160L196.5,166.6L195.2,173.2L194.2,179.8L193.4,186.4L192.9,193L192.5,199.6L192.3,206.2L192.1,212.8L192.1,219.4L192.1,226L192.1,232.6L192.2,239.2L192.2,245.8L192.3,252.4L192.3,259L192.4,265.6L192.4,272.2M210.4,129.6L207.9,133.6L205.7,140.2L203.3,146.8L201.5,153.4L199.9,160L198.8,166.6L197.7,173.2L196.9,179.8L196.3,186.4L196,193L195.8,199.6L195.7,206.2L195.7,212.8L195.8,219.4L195.9,226L196,232.6L196.2,239.2L196.4,245.8L196.6,252.4L196.8,259L196.9,265.6L197,272.2M210.9,129.1L208.6,133.6L206.8,140.2L204.8,146.8L203.3,153.4L202.1,160L201.1,166.6L200.3,173.2L199.7,179.8L199.3,186.4L199.2,193L199.1,199.6L199.2,206.2L199.3,212.8L199.6,219.4L199.8,226L200.1,232.6L200.4,239.2L200.7,245.8L201,252.4L201.3,259L201.6,265.6L201.8,272.2M211.3,128.7L209.3,133.6L207.9,140.2L206.4,146.8L205.2,153.4L204.2,160L203.5,166.6L203,173.2L202.5,179.8L202.4,186.4L202.4,193L202.5,199.6L202.8,206.2L203.1,212.8L203.4,219.4L203.8,226L204.2,232.6L204.7,239.2L205.1,245.8L205.5,252.4L205.9,259L206.3,265.6L206.7,272.2L207,278.8M211.6,128.3L210.1,133.6L209.1,140.2L208,146.8L207.1,153.4L206.4,160L206,166.6L205.6,173.2L205.4,179.8L205.5,186.4L205.7,193L206,199.6L206.4,206.2L206.9,212.8L207.4,219.4L207.9,226L208.4,232.6L209,239.2L209.6,245.8L210.1,252.4L210.6,259L211.2,265.6L211.6,272.2L212.1,278.8M211.8,128.1L210.8,133.6L210.2,140.2L209.6,146.8L209.1,153.4L208.7,160L208.4,166.6L208.3,173.2L208.4,179.8L208.6,186.4L209,193L209.5,199.6L210.1,206.2L210.7,212.8L211.4,219.4L212,226L212.7,232.6L213.4,239.2L214.1,245.8L214.7,252.4L215.4,259L216,265.6L216.7,272.2L217.2,278.8M211.9,128L211.6,133.6L211.4,140.2L211.2,146.8L211,153.4L210.9,160L210.9,166.6L211.1,173.2L211.3,179.8L211.8,186.4L212.4,193L213,199.6L213.8,206.2L214.6,212.8L215.4,219.4L216.2,226L217,232.6L217.8,239.2L218.6,245.8L219.4,252.4L220.2,259L221,265.6L221.7,272.2L222.4,278.8M212.1,128L212.4,133.6L212.6,140.2L212.8,146.8L213,153.4L213.1,160L213.4,166.6L213.8,173.2L214.3,179.8L214.9,186.4L215.7,193L216.6,199.6L217.5,206.2L218.4,212.8L219.4,219.4L220.3,226L221.3,232.6L222.2,239.2L223.2,245.8L224.1,252.4L225,259L225.9,265.6L226.8,272.2L227.6,278.8M212.2,128.1L213.2,133.6L213.8,140.2L214.4,146.8L214.9,153.4L215.4,160L215.9,166.6L216.5,173.2L217.2,179.8L218.1,186.4L219.1,193L220.1,199.6L221.2,206.2L222.3,212.8L223.4,219.4L224.5,226L225.6,232.6L226.7,239.2L227.7,245.8L228.8,252.4L229.8,259L230.8,265.6L231.8,272.2L232.8,278.8M212.4,128.3L213.9,133.6L214.9,140.2L216,146.8L216.9,153.4L217.6,160L218.4,166.6L219.2,173.2L220.2,179.8L221.2,186.4L222.4,193L223.6,199.6L224.9,206.2L226.1,212.8L227.4,219.4L228.6,226L229.8,232.6L231.1,239.2L232.2,245.8L233.4,252.4L234.6,259L235.7,265.6L236.9,272.2L237.9,278.8M212.7,128.7L214.7,133.6L216.1,140.2L217.6,146.8L218.8,153.4L219.8,160L220.8,166.6L221.9,173.2L223.1,179.8L224.4,186.4L225.7,193L227.1,199.6L228.5,206.2L229.9,212.8L231.3,219.4L232.7,226L234.1,232.6L235.4,239.2L236.7,245.8L238,252.4L239.3,259L240.6,265.6L241.8,272.2L243,278.8M213.1,129.1L215.4,133.6L217.2,140.2L219.2,146.8L220.7,153.4L222,160L223.2,166.6L224.5,173.2L225.9,179.8L227.4,186.4L229,193L230.5,199.6L232.1,206.2L233.7,212.8L235.2,219.4L236.7,226L238.2,232.6L239.7,239.2L241.1,245.8L242.5,252.4L243.9,259L245.3,265.6L246.7,272.2M213.6,129.6L216.1,133.6L218.3,140.2L220.7,146.8L222.5,153.4L224.1,160L225.6,166.6L227.1,173.2L228.7,179.8L230.4,186.4L232.1,193L233.9,199.6L235.6,206.2L237.3,212.8L239,219.4L240.6,226L242.3,232.6L243.8,239.2L245.4,245.8L246.9,252.4L248.5,259L250,265.6L251.5,272.2M214.4,130.2L216.8,133.6L219.4,140.2L222.2,146.8L224.3,153.4L226.2,160L227.9,166.6L229.6,173.2L231.4,179.8L233.3,186.4L235.2,193L237.1,199.6L239,206.2L240.9,212.8L242.7,219.4L244.5,226L246.2,232.6L247.9,239.2L249.6,245.8L251.2,252.4L252.9,259L254.5,265.6L256.1,272.2M215.3,130.9L217.5,133.6L220.4,140.2L223.6,146.8L226.1,153.4L228.2,160L230.1,166.6L232,173.2L234.1,179.8L236.1,186.4L238.2,193L240.3,199.6L242.3,206.2L244.3,212.8L246.3,219.4L248.2,226L250,232.6L251.8,239.2L253.6,245.8L255.4,252.4L257.2,259L258.9,265.6M216.3,131.6L218.2,133.6L221.4,140.2L225,146.8L227.8,153.4L230.1,160L232.2,166.6L234.4,173.2L236.6,179.8L238.8,186.4L241.1,193L243.3,199.6L245.5,206.2L247.6,212.8L249.7,219.4L251.7,226L253.7,232.6L255.6,239.2L257.5,245.8L259.4,252.4L261.3,259L263.2,265.6M217.6,132.4L218.8,133.6L222.4,140.2L226.4,146.8L229.4,153.4L232,160L234.3,166.6L236.6,173.2L239,179.8L241.4,186.4L243.9,193L246.2,199.6L248.6,206.2L250.8,212.8L253,219.4L255.2,226L257.2,232.6L259.3,239.2L261.3,245.8L263.3,252.4L265.2,259M219,133.2L219.4,133.6L223.3,140.2L227.6,146.8L230.9,153.4L233.7,160L236.2,166.6L238.8,173.2L241.3,179.8L243.9,186.4L246.5,193L249,199.6L251.5,206.2L253.8,212.8L256.2,219.4L258.4,226L260.6,232.6L262.7,239.2L264.8,245.8L266.9,252.4M220.3,134L224.1,140.2L228.8,146.8L232.3,153.4L235.4,160L238.1,166.6L240.8,173.2L243.5,179.8L246.3,186.4L249,193L251.6,199.6L254.2,206.2L256.7,212.8L259.1,219.4L261.5,226L263.8,232.6L266,239.2L268.2,245.8M221.4,134.9L225,140.2L229.9,146.8L233.7,153.4L236.9,160L239.8,166.6L242.7,173.2L245.6,179.8L248.5,186.4L251.3,193L254.1,199.6L256.8,206.2L259.4,212.8L261.9,219.4L264.4,226L266.8,232.6L269.1,239.2L271.4,245.8M222.5,135.7L225.7,140.2L231,146.8L235,153.4L238.4,160L241.4,166.6L244.4,173.2L247.5,179.8L250.5,186.4L253.5,193L256.4,199.6L259.2,206.2L261.9,212.8L264.5,219.4L267.1,226L269.6,232.6L272,239.2M223.7,136.5L226.4,140.2L232,146.8L236.1,153.4L239.7,160L242.9,166.6L246.1,173.2L249.3,179.8L252.4,186.4L255.5,193L258.5,199.6L261.4,206.2L264.2,212.8L266.9,219.4L269.6,226L272.1,232.6M224.8,137.3L227.1,140.2L232.8,146.8L237.2,153.4L241,160L244.3,166.6L247.6,173.2L250.9,179.8L254.2,186.4L257.3,193L260.4,199.6L263.4,206.2L266.3,212.8L269.1,219.4L271.8,226M225.9,138L227.6,140.2L233.7,146.8L238.2,153.4L242.1,160L245.5,166.6L248.9,173.2L252.4,179.8L255.7,186.4L259,193L262.2,199.6L265.3,206.2L268.3,212.8L271.1,219.4M226.9,138.7L228.2,140.2L234.4,146.8L239.1,153.4L243.1,160L246.6,166.6L250.1,173.2L253.7,179.8L257.1,186.4L260.5,193L263.8,199.6L266.9,206.2L270,212.8M212,127L201.2,133.6L195.6,140.2L189.3,146.8L184.6,153.4L180.5,160L177.2,166.6L174.2,173.2L171.4,179.8L168.9,186.4L166.9,193L165.2,199.6L163.6,206.2L162.3,212.8L161.1,219.4L160.1,226L159.1,232.6L158.2,239.2L157.4,245.8L156.5,252.4L155.6,259L154.8,265.6L153.8,272.2L152.9,278.8L151.9,285.4L150.9,292L149.8,298.6L148.6,305.2L147.3,311.8L145.8,318.4L144.1,325L142.1,331.6L139.9,338.2L137.5,344.8L135,351.4L132.1,358L128.8,364.6L125.1,371.2L121,377.8L116.5,384.4L111.8,391L106.9,397.6L101.7,404.2L96.2,410.8L90.5,417.4L84.5,424L78.5,430.6L72.5,437.2L66.1,443.8L59,450.4L51.1,457L42,463.6L31.7,470.2L20.3,476.8L10.9,483.4L3.4,490M212,127L201.2,133.6L195.6,140.2L189.3,146.8L184.6,153.4L180.5,160L177.2,166.6L174.2,173.2L171.4,179.8L168.9,186.4L166.9,193L165.2,199.6L163.6,206.2L162.3,212.8L161.2,219.4L160.2,226L159.3,232.6L158.5,239.2L157.7,245.8L157,252.4L156.2,259L155.3,265.6L154.5,272.2L153.6,278.8L152.7,285.4L151.8,292L150.7,298.6L149.6,305.2L148.4,311.8L147,318.4L145.3,325L143.4,331.6L141.3,338.2L138.9,344.8L136.5,351.4L133.7,358L130.5,364.6L126.9,371.2L122.8,377.8L118.4,384.4L113.8,391L108.9,397.6L103.8,404.2L98.4,410.8L92.7,417.4L86.8,424L80.8,430.6L74.7,437.2L68.4,443.8L61.2,450.4L53.4,457L44.3,463.6L33.9,470.2L22.5,476.8L13.1,483.4L5.7,490M212,127L201.2,133.6L195.6,140.2L189.3,146.8L184.6,153.4L180.5,160L177.2,166.6L174.2,173.2L171.4,179.8L168.9,186.4L166.9,193L165.2,199.6L163.6,206.2L162.3,212.8L161.2,219.4L160.3,226L159.5,232.6L158.8,239.2L158.1,245.8L157.4,252.4L156.7,259L156,265.6L155.2,272.2L154.5,278.8L153.6,285.4L152.8,292L151.8,298.6L150.8,305.2L149.7,311.8L148.3,318.4L146.7,325L144.9,331.6L142.8,338.2L140.6,344.8L138.3,351.4L135.6,358L132.5,364.6L128.9,371.2L124.9,377.8L120.6,384.4L116,391L111.3,397.6L106.2,404.2L101,410.8L95.3,417.4L89.3,424L83.3,430.6L77.3,437.2L70.9,443.8L63.8,450.4L55.9,457L46.8,463.6L36.5,470.2L25.1,476.8L15.7,483.4L8.2,490M212,127L201.2,133.6L195.6,140.2L189.3,146.8L184.6,153.4L180.5,160L177.2,166.6L174.2,173.2L171.4,179.8L168.9,186.4L166.9,193L165.2,199.6L163.6,206.2L162.3,212.8L161.3,219.4L160.6,226L159.9,232.6L159.3,239.2L158.7,245.8L158.2,252.4L157.6,259L156.9,265.6L156.3,272.2L155.6,278.8L155,285.4L154.2,292L153.4,298.6L152.5,305.2L151.5,311.8L150.2,318.4L148.8,325L147.1,331.6L145.1,338.2L143,344.8L140.8,351.4L138.2,358L135.2,364.6L131.8,371.2L127.9,377.8L123.7,384.4L119.3,391L114.6,397.6L109.7,404.2L104.6,410.8L99,417.4L93,424L87,430.6L81,437.2L74.6,443.8L67.5,450.4L59.6,457L50.5,463.6L40.2,470.2L28.8,476.8L19.3,483.4L11.9,490M189.3,146.9L190.6,147.1L192.1,147.1L193.7,146.8L195.4,146.4L197.2,145.9L199,145.2L200.7,144.6L202.2,144.1L203.7,143.8L205,143.6L206.3,143.7L207.5,143.9L208.7,144.4L210,145.1L211.3,145.9L212.7,146.7L214.3,147.6L215.8,148.3L217.5,148.9L219.1,149.3L220.7,149.5L222.3,149.4L223.7,149L225,148.3L226.2,147.4L227.1,146.4L227.7,145.3L228.2,144.1L228.6,143L228.9,142L229.3,141.1M186.6,150.5L188.1,150.7L189.8,150.7L191.6,150.4L193.5,150L195.3,149.4L197.2,148.9L198.9,148.3L200.6,147.9L202.2,147.7L203.7,147.6L205.2,147.8L206.6,148.2L208.1,148.8L209.6,149.5L211.2,150.4L212.8,151.2L214.6,152L216.4,152.7L218.2,153.3L220,153.6L221.8,153.6L223.5,153.4L225.1,152.8L226.5,152.1L227.8,151.1L228.9,150L229.9,148.8L230.8,147.6L231.5,146.5L232.1,145.5L232.7,144.7M183.9,154.5L185.6,154.6L187.5,154.5L189.4,154.3L191.4,153.8L193.5,153.3L195.4,152.8L197.4,152.4L199.2,152.1L200.9,151.9L202.6,152L204.3,152.3L205.9,152.8L207.6,153.5L209.3,154.3L211.1,155.2L212.9,156.1L214.9,156.9L216.8,157.5L218.8,157.9L220.8,158.1L222.8,158L224.6,157.6L226.4,157L228,156.1L229.4,155L230.8,153.9L232,152.6L233,151.4L234,150.3L235,149.4L236,148.6M181.2,158.8L183.2,158.9L185.2,158.7L187.4,158.4L189.5,158L191.7,157.5L193.8,157.1L195.8,156.8L197.8,156.6L199.7,156.6L201.5,156.8L203.3,157.3L205.2,157.9L207.1,158.7L209,159.6L211,160.5L213.1,161.3L215.2,162.1L217.4,162.6L219.5,162.9L221.7,163L223.8,162.7L225.8,162.2L227.7,161.4L229.4,160.5L231.1,159.3L232.6,158.1L234,156.8L235.3,155.7L236.6,154.6L237.9,153.7L239.2,153M178.8,163.4L180.9,163.4L183.2,163.3L185.4,163L187.7,162.6L190,162.2L192.2,161.8L194.3,161.6L196.4,161.6L198.5,161.7L200.5,162.1L202.5,162.7L204.6,163.5L206.7,164.3L208.8,165.2L211,166.1L213.3,167L215.6,167.6L218,168.1L220.3,168.3L222.6,168.2L224.8,167.8L226.9,167.1L229,166.2L230.9,165.1L232.7,163.9L234.4,162.7L236,161.4L237.6,160.3L239.1,159.3L240.6,158.5L242.2,157.9M176.4,168.4L178.7,168.4L181.1,168.2L183.5,167.9L185.9,167.5L188.3,167.2L190.6,167L192.9,166.9L195.2,167.1L197.4,167.4L199.6,167.9L201.8,168.6L204.1,169.5L206.4,170.4L208.7,171.4L211.2,172.3L213.7,173L216.2,173.6L218.7,173.9L221.2,174L223.6,173.7L226,173.2L228.3,172.4L230.4,171.4L232.5,170.2L234.4,169L236.2,167.7L238,166.5L239.8,165.4L241.6,164.5L243.4,163.8L245.3,163.3M174,173.7L176.5,173.7L179,173.5L181.6,173.2L184.1,172.9L186.7,172.7L189.1,172.7L191.5,172.8L193.9,173.1L196.3,173.6L198.7,174.3L201.2,175.2L203.6,176.1L206.2,177.1L208.8,178.1L211.4,178.9L214.1,179.6L216.8,180L219.6,180.2L222.2,180.1L224.8,179.6L227.3,179L229.7,178L232,176.9L234.2,175.7L236.3,174.4L238.3,173.2L240.3,172L242.3,171L244.3,170.2L246.4,169.6L248.5,169.2M171.5,179.5L174.2,179.4L176.9,179.2L179.6,179L182.3,178.9L185,178.8L187.6,178.9L190.2,179.2L192.8,179.7L195.4,180.4L198,181.3L200.7,182.3L203.4,183.3L206.2,184.3L209,185.3L211.9,186L214.8,186.6L217.7,186.9L220.6,186.9L223.4,186.6L226.2,186L228.8,185.1L231.4,184.1L233.8,182.9L236.1,181.6L238.4,180.4L240.6,179.2L242.9,178.1L245.1,177.2L247.3,176.5L249.7,176L252,175.7M169.2,185.6L172.1,185.6L175,185.5L177.8,185.4L180.7,185.4L183.5,185.5L186.2,185.9L189,186.4L191.8,187.1L194.6,188L197.5,189L200.4,190.1L203.4,191.1L206.4,192.1L209.5,193L212.6,193.7L215.7,194.1L218.8,194.2L221.8,194L224.8,193.5L227.7,192.7L230.5,191.7L233.1,190.6L235.7,189.4L238.3,188.1L240.7,186.9L243.2,185.8L245.7,184.8L248.1,184.1L250.7,183.5L253.3,183.2L255.9,182.9M167.1,192.3L170.2,192.3L173.2,192.3L176.2,192.4L179.2,192.6L182.2,193L185.1,193.5L188.1,194.3L191.1,195.2L194.2,196.2L197.2,197.4L200.4,198.5L203.6,199.6L206.9,200.6L210.2,201.3L213.5,201.8L216.7,202L220,201.9L223.2,201.5L226.3,200.9L229.3,199.9L232.3,198.8L235.1,197.6L237.9,196.4L240.6,195.2L243.3,194.1L246,193.1L248.7,192.3L251.5,191.7L254.3,191.3L257.2,191L260.1,190.9M165.2,199.6L168.3,199.7L171.5,199.9L174.7,200.1L177.8,200.6L181,201.2L184.1,202L187.3,203L190.6,204.1L193.8,205.3L197.2,206.5L200.6,207.7L204,208.7L207.5,209.6L211,210.2L214.5,210.5L217.9,210.5L221.3,210.2L224.7,209.6L227.9,208.7L231.1,207.7L234.2,206.5L237.2,205.3L240.2,204.1L243.1,203L246.1,202L249,201.2L252,200.6L255.1,200.2L258.2,199.9L261.3,199.7L264.5,199.6M163.3,207.6L166.7,207.9L170,208.2L173.3,208.8L176.6,209.5L180,210.4L183.4,211.4L186.8,212.6L190.2,213.9L193.8,215.2L197.3,216.5L201,217.6L204.6,218.5L208.3,219.2L212,219.6L215.6,219.7L219.2,219.4L222.8,218.9L226.2,218.1L229.6,217.1L233,216L236.3,214.8L239.5,213.7L242.7,212.6L245.9,211.6L249.1,210.8L252.3,210.2L255.6,209.8L258.9,209.5L262.3,209.4L265.7,209.3L269.1,209.2M161.6,216.4L165.1,216.9L168.6,217.6L172.1,218.4L175.6,219.4L179.1,220.5L182.7,221.8L186.4,223.2L190.1,224.6L193.8,226L197.6,227.2L201.4,228.2L205.3,228.9L209.2,229.4L213,229.5L216.8,229.4L220.6,228.9L224.3,228.2L227.9,227.2L231.5,226.2L235,225L238.5,223.9L241.9,222.9L245.4,222L248.8,221.2L252.3,220.6L255.8,220.2L259.4,220L263,219.9L266.6,219.8L270.2,219.7L273.8,219.6M159.9,226.2L163.6,227L167.2,228L170.9,229.1L174.6,230.4L178.4,231.8L182.2,233.3L186.1,234.8L190,236.2L194,237.5L198,238.6L202,239.4L206.1,239.9L210.1,240.1L214.1,240L218.1,239.6L222,238.9L225.8,238.1L229.7,237L233.4,236L237.1,234.9L240.8,234L244.5,233.1L248.2,232.4L252,231.9L255.7,231.6L259.6,231.4L263.4,231.3L267.2,231.3L271.1,231.2L274.9,231.1L278.6,230.8M158.3,237.1L162.1,238.3L165.9,239.6L169.8,241.1L173.8,242.6L177.7,244.3L181.8,245.9L185.9,247.4L190,248.7L194.2,249.9L198.4,250.8L202.7,251.3L206.9,251.6L211.1,251.5L215.3,251.1L219.4,250.5L223.5,249.6L227.5,248.7L231.5,247.7L235.5,246.7L239.4,245.9L243.4,245.1L247.3,244.5L251.3,244.1L255.4,243.8L259.4,243.7L263.5,243.7L267.6,243.7L271.6,243.7L275.7,243.6L279.6,243.2L283.5,242.7M156.6,249.4L160.6,250.9L164.6,252.6L168.7,254.3L172.8,256.1L177,257.8L181.3,259.4L185.6,260.9L190,262.1L194.4,263L198.8,263.6L203.3,263.8L207.7,263.8L212.1,263.4L216.5,262.8L220.8,262.1L225.1,261.2L229.3,260.3L233.6,259.4L237.8,258.7L242,258L246.2,257.6L250.5,257.3L254.7,257.2L259.1,257.1L263.4,257.2L267.7,257.3L272,257.3L276.3,257.1L280.5,256.8L284.6,256.2L288.5,255.3M154.6,263.2L158.8,265.1L163,267L167.3,268.9L171.7,270.8L176.1,272.5L180.7,274L185.2,275.2L189.9,276.1L194.5,276.7L199.2,277L203.8,276.9L208.5,276.6L213.1,276.1L217.7,275.4L222.2,274.6L226.7,273.8L231.2,273.1L235.7,272.5L240.2,272L244.8,271.7L249.3,271.6L253.9,271.6L258.5,271.7L263.1,271.8L267.7,272L272.3,272L276.8,271.8L281.2,271.5L285.6,270.8L289.8,269.8L293.8,268.5M152.3,278.6L156.7,280.7L161.2,282.8L165.7,284.8L170.4,286.6L175.1,288.1L179.8,289.4L184.7,290.3L189.5,290.9L194.4,291.1L199.3,291.1L204.2,290.8L209.1,290.3L214,289.7L218.8,289L223.6,288.4L228.4,287.8L233.2,287.4L238,287.2L242.8,287.1L247.7,287.1L252.6,287.3L257.4,287.5L262.3,287.8L267.2,287.9L272.1,287.9L276.9,287.8L281.6,287.3L286.2,286.5L290.7,285.5L294.9,284L299.1,282.3M149.5,295.6L154.1,297.8L158.8,299.9L163.7,301.7L168.6,303.3L173.6,304.5L178.6,305.4L183.7,306L188.9,306.2L194.1,306.2L199.2,305.9L204.4,305.5L209.5,305L214.7,304.5L219.8,304.1L224.9,303.8L230,303.6L235.1,303.6L240.3,303.7L245.4,304L250.6,304.3L255.8,304.7L261,305L266.2,305.2L271.4,305.2L276.4,305L281.4,304.4L286.3,303.5L291.1,302.3L295.7,300.7L300.1,298.8L304.4,296.7M145.9,313.9L150.7,316.1L155.7,317.9L160.8,319.5L166,320.7L171.3,321.5L176.7,322.1L182.1,322.3L187.6,322.3L193.1,322.1L198.6,321.8L204,321.6L209.5,321.3L215,321.1L220.4,321.1L225.9,321.2L231.4,321.5L236.9,321.9L242.4,322.4L247.9,322.9L253.5,323.4L259,323.7L264.6,323.9L270.1,323.8L275.5,323.5L280.8,322.8L286,321.7L291.1,320.3L296,318.6L300.7,316.6L305.4,314.4L309.9,312.1M140.9,331.9L146,333.8L151.3,335.3L156.7,336.5L162.4,337.4L168.1,337.9L173.9,338.2L179.7,338.3L185.6,338.3L191.5,338.2L197.4,338.2L203.2,338.2L209.1,338.4L215,338.7L220.9,339.1L226.8,339.7L232.8,340.3L238.8,341L244.8,341.7L250.9,342.2L257,342.6L263,342.7L269,342.5L274.8,342L280.5,341.1L286,339.9L291.3,338.3L296.5,336.5L301.5,334.4L306.3,332.2L311,329.8L315.7,327.5M134.6,348.9L140.3,350.5L146.1,351.7L152.1,352.7L158.3,353.3L164.5,353.8L170.8,354.1L177.2,354.3L183.5,354.5L189.9,354.8L196.3,355.2L202.7,355.7L209.1,356.3L215.7,357.1L222.2,357.9L228.9,358.8L235.6,359.7L242.4,360.4L249.2,361L255.9,361.3L262.6,361.4L269.2,361.1L275.6,360.4L281.7,359.3L287.6,358L293.2,356.3L298.6,354.3L303.8,352.2L308.8,349.9L313.7,347.6L318.4,345.3L323.2,343.1M127.3,364.7L133.4,366.1L139.8,367.2L146.4,368.1L153.1,368.8L159.9,369.4L166.8,370L173.8,370.6L180.8,371.3L187.9,372.1L195,373L202.2,374.1L209.6,375.2L217.1,376.3L224.7,377.4L232.5,378.4L240.3,379.2L248.1,379.8L255.9,380.1L263.5,380L270.9,379.6L278.1,378.7L284.8,377.5L291.3,376L297.4,374.2L303.1,372.1L308.6,370L313.9,367.7L319,365.5L324.1,363.3L329.3,361.1L334.3,359.2M118.3,379.4L125,380.9L132,382.1L139.2,383.2L146.6,384.3L154.1,385.4L161.8,386.5L169.6,387.7L177.5,388.9L185.5,390.3L193.8,391.8L202.2,393.2L210.8,394.7L219.7,396L228.6,397.1L237.7,398L246.7,398.6L255.7,398.8L264.5,398.6L273.1,398L281.4,397.1L289.2,395.7L296.7,394.1L303.6,392.2L310.2,390.1L316.5,387.9L322.5,385.7L328.3,383.5L333.9,381.4L339.4,379.4L344.8,377.4L350.2,375.6M108.2,393.5L115.5,395.3L123.2,396.9L131,398.5L139.1,400.2L147.4,401.9L155.9,403.6L164.6,405.5L173.6,407.4L182.8,409.3L192.4,411.1L202.3,412.9L212.5,414.4L222.8,415.7L233.3,416.6L243.8,417.2L254.2,417.4L264.4,417.1L274.4,416.5L283.9,415.4L293,414L301.6,412.3L309.7,410.4L317.6,408.3L325.1,406.2L332.2,404.1L339.3,402L346.2,399.9L352.8,398L359.3,396.1L365.5,394.2L371.5,392.4M97.3,407.3L105,409.6L113.2,411.9L121.6,414.3L130.4,416.7L139.5,419.1L149.1,421.6L159.1,424L169.5,426.4L180.3,428.7L191.6,430.7L203.1,432.5L214.9,434L226.9,435L238.9,435.6L250.9,435.8L262.7,435.5L274.2,434.8L285.4,433.7L296.2,432.3L306.6,430.6L316.4,428.8L325.8,426.8L334.8,424.8L343.5,422.8L351.8,420.8L359.8,418.9L367.6,417.1L375.3,415.2L382.6,413.3L389.4,411.3L395.9,409.2M84.9,421.5L93.1,424.6L101.7,427.7L110.9,430.8L120.6,434L130.9,437.1L141.5,440.1L152.6,443L164,445.7L175.8,448.1L188.1,450.1L200.7,451.7L213.5,452.9L226.7,453.6L240,453.8L253.4,453.6L266.7,452.9L279.9,451.9L292.8,450.6L305.3,449L317.5,447.4L329.4,445.6L341,443.8L352,442L362.7,440.2L373.2,438.4L383.3,436.7L392.8,434.9L401.9,433L410.4,430.9L418.1,428.6L424.8,425.9M71.2,436.5L79.7,440.5L88.8,444.4L98.2,448.2L108.1,452L118.4,455.6L129.1,459L140.4,462L152.3,464.7L164.7,467L177.9,468.8L191.8,470.2L206,471L220.6,471.3L235.5,471.2L250.5,470.7L265.4,469.8L280.2,468.7L294.8,467.4L309.1,466L323.1,464.5L336.9,463L350.3,461.4L363.5,459.9L376.4,458.4L389,456.7L401.2,455L413,453.1L424.3,451L434.6,448.5L443.9,445.6L452,442.3M55,452.1L62.9,456.9L70.9,461.5L79.5,466L88.7,470.2L98.5,474.1L109.6,477.6L122.3,480.7L135.8,483.3L150.3,485.3L165.5,486.9L181,487.9L196.9,488.4L213,488.5L229.2,488.2L245.5,487.6L261.7,486.8L277.9,485.8L293.9,484.7L309.9,483.6L325.6,482.4L341.2,481.2L356.6,479.9L371.7,478.6L386.6,477.1L401,475.5L414.9,473.6L428.2,471.3L440.6,468.6L452.1,465.5L462.5,461.8L471.6,457.7M32,468.8L38,474.2L45.9,479.2L55.9,484L67.8,488.4L79.9,492.3M439.2,489.2L453.7,485.9L467.2,482L479.2,477.6L489.1,472.6M6.7,485.4L15.9,491.2M490.7,492.2L502.1,486.5"/></g></g></svg>
</body></html>
